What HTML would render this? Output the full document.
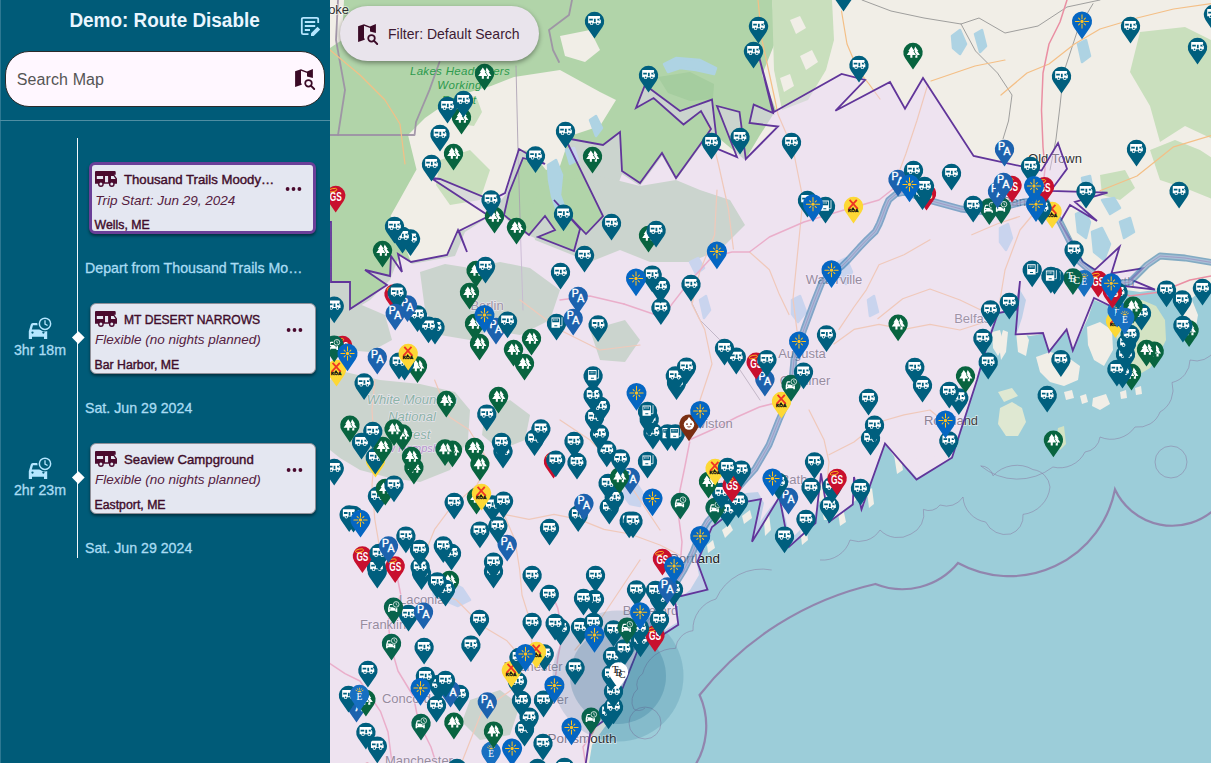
<!DOCTYPE html>
<html lang="en">
<head>
<meta charset="utf-8">
<title>Demo: Route Disable</title>
<style>
html,body{margin:0;padding:0;}
body{width:1211px;height:763px;overflow:hidden;position:relative;background:#005b78;font-family:"Liberation Sans",sans-serif;}
#side{position:absolute;left:0;top:0;width:330px;height:763px;background:#005b78;overflow:hidden;}
#side .edge{position:absolute;left:0;top:0;width:1px;height:763px;background:#2d7892;}
#title{position:absolute;left:0;top:8.3px;width:330px;text-align:center;color:#eaf6ff;font-weight:bold;font-size:20px;line-height:24px;white-space:nowrap;}
#title span{display:inline-block;transform:scaleX(0.946);transform-origin:50% 50%;}
#search{position:absolute;left:5px;top:51px;width:318px;height:53.5px;border:1px solid #2b2b2b;border-radius:24px;background:#fff7ff;}
#search .ph{position:absolute;left:10.8px;top:17.8px;font-size:16px;line-height:20px;color:#555;letter-spacing:0.1px;}
#divider{position:absolute;left:0;top:119.5px;width:330px;height:1.5px;background:#4f8ea3;}
#tline{position:absolute;left:77px;top:138px;width:1.4px;height:420px;background:#f2f8fb;}
.card{position:absolute;left:89.5px;width:224px;height:69px;background:#e4e7f1;border:1px solid #8f8f98;border-radius:6px;box-shadow:0 2px 3px rgba(0,0,0,0.45);color:#3f0d2b;}
.card.sel{border:3px solid #6a3f98;width:220.3px;height:65.4px;margin-top:-0.2px;margin-left:-0.1px}
.card .t{position:absolute;left:33.5px;top:8.8px;font-size:13.2px;line-height:16px;-webkit-text-stroke:0.4px #3f0d2b;white-space:nowrap;}
.card .s{position:absolute;left:4.5px;top:28.8px;font-size:13.5px;line-height:16px;font-style:italic;white-space:nowrap;color:#54203f;}
.card .c{position:absolute;left:4px;top:54px;font-size:12.3px;line-height:14px;white-space:nowrap;-webkit-text-stroke:0.4px #3f0d2b;}
.card.sel .t{left:31.5px;top:6.2px}.card.sel .s{left:2.8px;top:27.3px}.card.sel .c{left:2.2px;top:52.4px}
.card .dots{position:absolute;right:12px;top:23px;width:17px;height:6px;}
.card.sel .dots{right:10.5px;top:21px}
.card svg.rv{position:absolute;left:4.5px;top:7.5px;}
.card.sel svg.rv{left:2.7px;top:5.5px;}
.lbl{position:absolute;left:85px;font-size:14.2px;line-height:18px;color:#a9dcf3;white-space:nowrap;-webkit-text-stroke:0.3px #a9dcf3;}
.dur{position:absolute;left:0;width:80px;text-align:center;font-size:14.2px;line-height:18px;color:#a9dcf3;white-space:nowrap;-webkit-text-stroke:0.3px #a9dcf3;}
.dia{position:absolute;left:73.5px;width:8.6px;height:8.6px;background:#fff;transform:rotate(45deg);}
svg.cc{position:absolute;left:27px;}
#map{position:absolute;left:330px;top:0;width:881px;height:763px;overflow:hidden;background:#f1eee7;}
#chip{position:absolute;left:340px;top:6.2px;width:199.4px;height:55.3px;border-radius:27.6px;background:#e9e4ec;box-shadow:0 2px 5px rgba(0,0,0,0.4);}
#chip .tx{position:absolute;left:48px;top:18.6px;font-size:15px;line-height:18px;color:#3d1a33;white-space:nowrap;transform:scaleX(0.934);transform-origin:0 50%;}
</style>
</head>
<body>
<div id="map">
<svg width="881" height="763" viewBox="0 0 881 763" style="position:absolute;left:0;top:0">
<rect x="0" y="0" width="881" height="763" fill="#f1eee7"/>
<polygon points="0.0,0.0 442.0,0.0 446.0,40.0 432.0,75.0 446.0,110.0 430.0,135.0 415.0,160.0 385.0,135.0 370.0,147.0 346.0,180.0 332.0,156.0 310.0,186.0 292.0,174.0 282.0,200.0 270.0,218.0 250.0,232.0 230.0,236.0 210.0,240.0 190.0,232.0 175.0,218.0 160.0,216.0 135.0,232.0 125.0,256.0 82.0,264.0 70.0,254.0 60.0,280.0 40.0,300.0 20.0,312.0 0.0,300.0" fill="#b1d4a9"/>
<polygon points="442.0,0.0 502.0,0.0 504.0,40.0 496.0,70.0 478.0,100.0 452.0,110.0 444.0,70.0" fill="#c9dfbd"/>
<polygon points="460.0,20.0 470.0,16.0 476.0,28.0 466.0,34.0" fill="#f1eee7"/>
<polygon points="470.0,56.0 482.0,50.0 488.0,62.0 476.0,70.0" fill="#f1eee7"/>
<polygon points="450.0,78.0 460.0,74.0 464.0,86.0 454.0,92.0" fill="#f1eee7"/>
<polygon points="800.0,72.0 810.0,32.0 855.0,27.0 885.0,42.0 885.0,140.0 855.0,126.0 830.0,142.0 820.0,106.0" fill="#c9dfbd"/>
<polygon points="820.0,150.0 845.0,140.0 870.0,150.0 885.0,160.0 885.0,200.0 860.0,190.0 830.0,180.0" fill="#c9dfbd"/>
<polygon points="770.0,175.0 795.0,170.0 805.0,188.0 790.0,200.0 772.0,195.0" fill="#c9dfbd"/>
<polygon points="78.0,135.0 95.0,118.0 118.0,102.0 140.0,92.0 161.0,86.0 184.0,77.0 230.0,70.0 270.0,92.0 286.0,100.0 270.0,126.0 240.0,136.0 230.0,166.0 216.0,170.0 201.0,151.0 189.0,150.0 176.0,194.0 160.0,214.0 135.0,230.0 128.0,230.0 117.0,255.0 81.0,262.0 72.0,239.0 60.5,216.0 72.0,195.5 86.5,169.6" fill="#f1eee7"/>
<polygon points="127.0,100.0 146.0,96.0 152.0,112.0 144.0,126.0 130.0,124.0" fill="#c9dfbd"/>
<polygon points="0.0,0.0 14.0,0.0 12.0,40.0 0.0,48.0" fill="#f1eee7"/>
<polygon points="110.0,160.0 140.0,150.0 160.0,170.0 150.0,200.0 120.0,205.0 106.0,185.0" fill="#c9dfbd"/>
<polygon points="328.0,77.0 360.0,72.0 384.0,84.0 383.0,99.0 360.0,101.0 338.0,93.0" fill="#a5cd9f"/>
<polygon points="230.0,36.0 260.0,30.0 270.0,50.0 255.0,62.0 235.0,56.0" fill="#f1eee7"/>
<polygon points="215.0,182.0 270.0,176.0 310.0,186.0 346.0,180.0 370.0,190.0 400.0,200.0 415.0,225.0 390.0,250.0 360.0,262.0 320.0,262.0 290.0,250.0 260.0,262.0 230.0,250.0 205.0,240.0 200.0,210.0" fill="#b1d4a9"/>
<polygon points="0.0,380.0 15.0,372.0 50.0,380.0 90.0,384.0 125.0,392.0 140.0,410.0 138.0,440.0 120.0,470.0 90.0,482.0 60.0,478.0 30.0,470.0 10.0,458.0 0.0,450.0" fill="#b1d4a9"/>
<polygon points="0.0,305.0 20.0,300.0 55.0,315.0 62.0,340.0 40.0,352.0 15.0,350.0 0.0,345.0" fill="#b1d4a9"/>
<polygon points="90.0,272.0 115.0,264.0 140.0,268.0 170.0,262.0 200.0,268.0 230.0,290.0 220.0,320.0 190.0,335.0 160.0,330.0 140.0,340.0 110.0,335.0 95.0,310.0" fill="#b1d4a9"/>
<polygon points="260.0,330.0 295.0,320.0 310.0,340.0 295.0,362.0 270.0,360.0" fill="#b1d4a9"/>
<polygon points="155.0,410.0 180.0,400.0 200.0,415.0 195.0,440.0 170.0,450.0 152.0,435.0" fill="#b1d4a9"/>
<polygon points="140.0,700.0 170.0,690.0 190.0,705.0 180.0,735.0 150.0,740.0 132.0,722.0" fill="#b1d4a9"/>
<polygon points="746.0,214.0 754.0,210.0 760.0,222.0 756.0,238.0 748.0,232.0" fill="#aed3e3" stroke="#aed3e3" stroke-width="2.5" stroke-linejoin="round"/>
<polygon points="762.0,232.0 772.0,228.0 780.0,244.0 774.0,260.0 764.0,252.0" fill="#aed3e3" stroke="#aed3e3" stroke-width="2.5" stroke-linejoin="round"/>
<polygon points="772.0,200.0 784.0,198.0 790.0,208.0 780.0,214.0" fill="#aed3e3" stroke="#aed3e3" stroke-width="2.5" stroke-linejoin="round"/>
<polygon points="790.0,222.0 800.0,218.0 804.0,232.0 794.0,238.0" fill="#aed3e3" stroke="#aed3e3" stroke-width="2.5" stroke-linejoin="round"/>
<polygon points="752.0,178.0 760.0,176.0 762.0,186.0 754.0,188.0" fill="#aed3e3" stroke="#aed3e3" stroke-width="2.5" stroke-linejoin="round"/>
<polygon points="645.0,34.0 652.0,30.0 656.0,46.0 650.0,52.0" fill="#aed3e3" stroke="#aed3e3" stroke-width="2.5" stroke-linejoin="round"/>
<polygon points="260.0,120.0 266.0,116.0 272.0,128.0 266.0,136.0" fill="#aed3e3" stroke="#aed3e3" stroke-width="2.5" stroke-linejoin="round"/>
<polygon points="360.0,262.0 368.0,258.0 374.0,268.0 366.0,274.0" fill="#aed3e3" stroke="#aed3e3" stroke-width="2.5" stroke-linejoin="round"/>
<polygon points="538.0,300.0 544.0,296.0 548.0,312.0 540.0,316.0" fill="#aed3e3" stroke="#aed3e3" stroke-width="2.5" stroke-linejoin="round"/>
<polygon points="370.0,300.0 376.0,296.0 380.0,310.0 374.0,318.0" fill="#aed3e3" stroke="#aed3e3" stroke-width="2.5" stroke-linejoin="round"/>
<polygon points="334.0,64.0 346.0,58.0 370.0,60.0 386.0,68.0 384.0,74.0 366.0,70.0 350.0,68.0 338.0,72.0" fill="#aed3e3" stroke="#aed3e3" stroke-width="2.5" stroke-linejoin="round"/>
<polygon points="218.0,165.0 226.0,160.0 232.0,175.0 230.0,195.0 236.0,212.0 228.0,214.0 222.0,196.0 219.0,180.0" fill="#aed3e3" stroke="#aed3e3" stroke-width="2.5" stroke-linejoin="round"/>
<polygon points="236.0,150.0 244.0,148.0 248.0,160.0 240.0,164.0" fill="#aed3e3" stroke="#aed3e3" stroke-width="2.5" stroke-linejoin="round"/>
<polygon points="102.0,585.0 116.0,580.0 132.0,588.0 140.0,600.0 128.0,606.0 114.0,600.0 104.0,596.0" fill="#aed3e3" stroke="#aed3e3" stroke-width="2.5" stroke-linejoin="round"/>
<polygon points="294.0,484.0 304.0,480.0 312.0,492.0 310.0,506.0 300.0,504.0 294.0,496.0" fill="#aed3e3" stroke="#aed3e3" stroke-width="2.5" stroke-linejoin="round"/>
<polygon points="670.0,228.0 678.0,224.0 682.0,238.0 676.0,250.0 670.0,242.0" fill="#aed3e3" stroke="#aed3e3" stroke-width="2.5" stroke-linejoin="round"/>
<polygon points="622.0,36.0 630.0,30.0 636.0,44.0 630.0,54.0 623.0,48.0" fill="#aed3e3" stroke="#aed3e3" stroke-width="2.5" stroke-linejoin="round"/>
<polygon points="748.0,44.0 756.0,40.0 760.0,56.0 752.0,62.0" fill="#aed3e3" stroke="#aed3e3" stroke-width="2.5" stroke-linejoin="round"/>
<polygon points="508.0,262.0 516.0,258.0 522.0,272.0 516.0,284.0 509.0,278.0" fill="#aed3e3" stroke="#aed3e3" stroke-width="2.5" stroke-linejoin="round"/>
<polygon points="462.0,300.0 470.0,296.0 476.0,312.0 468.0,322.0 462.0,314.0" fill="#aed3e3" stroke="#aed3e3" stroke-width="2.5" stroke-linejoin="round"/>
<polygon points="258.0,770.0 262.0,745.0 274.0,728.0 288.0,712.0 292.0,690.0 300.0,665.0 310.0,650.0 330.0,633.0 348.0,622.0 347.0,600.0 360.0,590.0 369.0,575.0 366.0,560.0 367.0,545.0 373.0,530.0 386.0,514.0 402.0,501.0 416.0,493.0 428.0,492.0 434.0,503.0 430.0,522.0 440.0,508.0 449.0,497.0 456.0,520.0 460.0,540.0 470.0,530.0 482.0,522.0 490.0,500.0 494.0,520.0 500.0,520.0 518.0,507.0 526.0,500.0 528.0,485.0 534.0,505.0 542.0,480.0 550.0,455.0 556.0,444.0 563.0,455.0 570.0,462.0 580.0,470.0 587.0,478.0 600.0,470.0 615.0,462.0 622.0,456.0 628.0,435.0 635.0,415.0 642.0,395.0 647.0,380.0 651.0,360.0 656.0,343.0 662.0,325.0 668.0,314.0 678.0,310.0 685.0,300.0 690.0,290.0 696.0,300.0 692.0,318.0 687.0,333.0 700.0,336.0 713.0,334.0 719.0,350.0 728.0,340.0 736.0,331.0 743.0,349.0 750.0,335.0 758.0,318.0 764.0,300.0 774.0,304.0 782.0,306.0 788.0,296.0 796.0,290.0 810.0,292.0 825.0,290.0 838.0,297.0 850.0,304.0 862.0,298.0 870.0,292.0 885.0,288.0 885.0,770.0" fill="#9ccdd9"/>
<polygon points="788.0,312.0 798.0,302.0 812.0,300.0 826.0,306.0 835.0,320.0 836.0,340.0 828.0,356.0 820.0,368.0 810.0,374.0 800.0,378.0 792.0,370.0 790.0,352.0 786.0,335.0" fill="#d3e3c3"/>
<polygon points="850.0,304.0 862.0,300.0 868.0,315.0 864.0,338.0 856.0,330.0 853.0,315.0" fill="#f1eee7"/>
<polygon points="706.0,357.0 720.0,352.0 736.0,356.0 750.0,366.0 748.0,380.0 734.0,386.0 720.0,382.0 710.0,372.0" fill="#f1eee7"/>
<polygon points="686.0,332.0 694.0,330.0 699.0,340.0 696.0,356.0 688.0,352.0" fill="#f1eee7"/>
<polygon points="757.0,327.0 770.0,322.0 782.0,330.0 783.0,350.0 774.0,366.0 764.0,360.0 758.0,345.0" fill="#f1eee7"/>
<polygon points="662.0,332.0 670.0,330.0 674.0,345.0 668.0,356.0 663.0,348.0" fill="#f1eee7"/>
<polygon points="734.0,392.0 742.0,390.0 744.0,398.0 736.0,400.0" fill="#f1eee7"/>
<polygon points="790.0,392.0 796.0,390.0 797.0,398.0 791.0,399.0" fill="#f1eee7"/>
<polygon points="673.0,330.0 678.0,332.0 676.0,352.0 671.0,360.0 669.0,345.0" fill="#f1eee7"/>
<polygon points="670.0,408.0 682.0,402.0 692.0,408.0 696.0,422.0 688.0,436.0 676.0,436.0 668.0,424.0" fill="#dfe8d2"/>
<polygon points="668.0,392.0 682.0,388.0 688.0,396.0 674.0,402.0" fill="#dfe8d2"/>
<polygon points="728.0,428.0 734.0,426.0 736.0,444.0 730.0,450.0 726.0,440.0" fill="#d3e3c3"/>
<polygon points="763.0,398.0 776.0,394.0 780.0,404.0 770.0,410.0 762.0,406.0" fill="#f1eee7"/>
<polygon points="750.0,396.0 756.0,394.0 758.0,402.0 752.0,404.0" fill="#f1eee7"/>
<polygon points="563.0,448.0 570.0,452.0 573.0,470.0 567.0,474.0" fill="#f1eee7"/>
<polygon points="580.0,452.0 586.0,455.0 589.0,470.0 583.0,472.0" fill="#f1eee7"/>
<polygon points="596.0,446.0 604.0,450.0 606.0,468.0 599.0,466.0" fill="#f1eee7"/>
<polygon points="537.0,492.0 542.0,488.0 544.0,504.0 539.0,508.0" fill="#f1eee7"/>
<polygon points="508.0,512.0 513.0,508.0 516.0,522.0 510.0,526.0" fill="#f1eee7"/>
<polygon points="470.0,528.0 476.0,524.0 478.0,540.0 472.0,545.0" fill="#f1eee7"/>
<polygon points="434.0,520.0 439.0,514.0 441.0,530.0 435.0,536.0" fill="#f1eee7"/>
<polygon points="412.0,516.0 420.0,510.0 422.0,518.0 414.0,524.0" fill="#f1eee7"/>
<polygon points="392.0,530.0 400.0,524.0 403.0,530.0 395.0,538.0" fill="#f1eee7"/>
<polygon points="377.0,545.0 383.0,540.0 385.0,548.0 378.0,553.0" fill="#f1eee7"/>
<polygon points="805.0,388.0 811.0,386.0 812.0,394.0 806.0,395.0" fill="#f1eee7"/>
<path d="M362.0,770.0A75.4,75.4 0 0 0 369.6,695.0A311.9,311.9 0 0 1 545.4,584.0A72.4,72.4 0 0 0 628.0,563.0A107.5,107.5 0 0 0 785.0,489.5A63.2,63.2 0 0 0 885.0,509.0" fill="none" stroke="#8f78a6" stroke-width="2.2" stroke-opacity="0.85"/>
<path d="M441.7,570.0A50.2,50.2 0 0 0 386.0,599.0A31.3,31.3 0 0 0 363.0,630.7A19.9,19.9 0 0 0 345.5,648.4A33.2,33.2 0 0 0 312.6,673.7A12.9,12.9 0 0 0 307.6,689.0A16.3,16.3 0 0 0 303.8,709.0A9.0,9.0 0 0 0 315.0,708.0" fill="none" stroke="#8a7fa6" stroke-width="0.8" stroke-opacity="0.7"/>
<path d="M650.7,465.9A57.8,57.8 0 0 0 722.9,467.0A28.3,28.3 0 0 0 755.0,452.0A17.0,17.0 0 0 0 770.0,437.0A29.1,29.1 0 0 0 805.0,427.0A23.3,23.3 0 0 0 830.0,412.0A25.5,25.5 0 0 0 842.0,382.5A23.1,23.1 0 0 0 860.0,360.0A21.5,21.5 0 0 0 885.0,350.0" fill="none" stroke="#8a7fa6" stroke-width="0.8" stroke-opacity="0.7"/>
<path d="M581.0,534.0A22.0,22.0 0 0 0 593.4,509.4A13.7,13.7 0 0 0 610.0,505.0A19.5,19.5 0 0 0 633.0,497.0A27.0,27.0 0 0 0 655.7,522.0A22.1,22.1 0 0 0 680.6,534.0A18.6,18.6 0 0 0 693.0,514.4A30.8,30.8 0 0 0 720.0,487.0A19.5,19.5 0 0 0 703.0,469.6A32.4,32.4 0 0 0 663.0,475.8A12.6,12.6 0 0 0 650.7,465.9" fill="none" stroke="#8a7fa6" stroke-width="0.8" stroke-opacity="0.7"/>
<path d="M490.0,560.0A28.8,28.8 0 0 0 520.0,540.0A25.3,25.3 0 0 0 550.0,530.0A25.0,25.0 0 0 0 581.0,534.0" fill="none" stroke="#8a7fa6" stroke-width="0.8" stroke-opacity="0.7"/>
<circle cx="315" cy="723" r="16" fill="none" stroke="#8a7fa6" stroke-width="0.8" stroke-opacity="0.7"/>
<circle cx="841" cy="462" r="16" fill="none" stroke="#8a7fa6" stroke-width="0.8" stroke-opacity="0.7"/>
<polyline points="0.0,135.0 84.6,135.0 86.0,122.0 99.6,89.6 109.5,62.0" fill="none" stroke="#9c8fa4" stroke-width="1.8" stroke-opacity="0.9" stroke-linejoin="round" stroke-linecap="round" />
<polyline points="242.0,0.0 239.0,15.0 219.0,30.0 223.0,50.0 229.0,62.0" fill="none" stroke="#9c8fa4" stroke-width="1.8" stroke-opacity="0.9" stroke-linejoin="round" stroke-linecap="round" />
<polyline points="8.0,0.0 6.0,40.0 15.0,90.0 8.0,135.0" fill="none" stroke="#9c8fa4" stroke-width="1.8" stroke-opacity="0.9" stroke-linejoin="round" stroke-linecap="round" />
<polyline points="186.0,66.0 188.0,150.0 191.0,250.0 193.0,310.0" fill="none" stroke="#a79bb0" stroke-width="0.9" stroke-opacity="0.9" stroke-linejoin="round" stroke-linecap="round" />
<polyline points="532.0,0.0 561.0,11.0 594.0,18.0 631.0,24.0 649.0,18.0 675.0,33.0 708.0,26.0 737.0,7.0 770.0,0.0" fill="none" stroke="#8c8c8c" stroke-width="0.9" stroke-opacity="0.9" stroke-linejoin="round" stroke-linecap="round" />
<polyline points="631.0,24.0 645.5,51.0 667.5,73.0 682.0,95.0 678.5,121.0 673.0,139.0" fill="none" stroke="#8c8c8c" stroke-width="0.9" stroke-opacity="0.9" stroke-linejoin="round" stroke-linecap="round" />
<polyline points="763.0,3.7 748.0,29.0 733.5,73.0 730.0,106.0 726.0,139.0 720.0,170.0" fill="none" stroke="#8c8c8c" stroke-width="0.9" stroke-opacity="0.9" stroke-linejoin="round" stroke-linecap="round" />
<polyline points="360.5,300.0 370.0,320.0 390.0,340.0 410.0,370.0 430.0,400.0" fill="none" stroke="#8c8c8c" stroke-width="0.9" stroke-opacity="0.9" stroke-linejoin="round" stroke-linecap="round" />
<polyline points="511.5,11.0 517.0,44.0 528.0,70.0 539.0,84.0 550.0,99.0" fill="none" stroke="#f4bf86" stroke-width="1.2" stroke-opacity="1" stroke-linejoin="round" stroke-linecap="round" />
<polyline points="601.0,81.0 645.0,66.0 675.0,60.0" fill="none" stroke="#f4bf86" stroke-width="1.2" stroke-opacity="1" stroke-linejoin="round" stroke-linecap="round" />
<polyline points="671.0,95.0 697.0,73.0 719.0,64.0 744.5,44.0 770.0,29.0 807.0,18.0 843.6,9.0 881.0,3.7" fill="none" stroke="#f4bf86" stroke-width="1.2" stroke-opacity="1" stroke-linejoin="round" stroke-linecap="round" />
<polyline points="597.8,84.4 586.8,121.0 575.8,154.0 564.7,183.5" fill="none" stroke="#f4bf86" stroke-width="1.2" stroke-opacity="1" stroke-linejoin="round" stroke-linecap="round" />
<polyline points="641.8,234.8 667.5,223.8 689.5,216.5" fill="none" stroke="#f4bf86" stroke-width="1.2" stroke-opacity="1" stroke-linejoin="round" stroke-linecap="round" />
<polyline points="881.0,135.7 843.6,146.8 807.0,176.0 770.0,190.8" fill="none" stroke="#f4bf86" stroke-width="1.2" stroke-opacity="1" stroke-linejoin="round" stroke-linecap="round" />
<polyline points="0.0,50.0 30.0,75.0 55.0,100.0 70.0,124.0 75.0,164.0" fill="none" stroke="#f4bf86" stroke-width="1.2" stroke-opacity="1" stroke-linejoin="round" stroke-linecap="round" />
<polyline points="378.5,124.5 388.4,164.0 398.4,209.0 403.4,249.0" fill="none" stroke="#f4bf86" stroke-width="1.2" stroke-opacity="1" stroke-linejoin="round" stroke-linecap="round" />
<polyline points="428.0,0.0 432.0,40.0 445.0,100.0 448.0,114.5 463.0,149.0 473.0,199.0 468.0,249.0 463.0,299.0 468.0,338.6" fill="none" stroke="#f4bf86" stroke-width="1.2" stroke-opacity="1" stroke-linejoin="round" stroke-linecap="round" />
<polyline points="547.8,318.7 572.7,298.8 600.0,289.0 630.0,300.0 655.0,312.0" fill="none" stroke="#f4bf86" stroke-width="1.2" stroke-opacity="1" stroke-linejoin="round" stroke-linecap="round" />
<polyline points="387.0,190.0 384.6,234.8 369.7,272.0 362.0,304.5 374.7,329.4 382.0,364.0 370.0,400.0 360.0,425.0" fill="none" stroke="#f4bf86" stroke-width="1.2" stroke-opacity="1" stroke-linejoin="round" stroke-linecap="round" />
<polyline points="419.5,252.0 439.4,269.7 449.4,294.6 459.0,314.5" fill="none" stroke="#f4bf86" stroke-width="1.2" stroke-opacity="1" stroke-linejoin="round" stroke-linecap="round" />
<polyline points="504.0,344.0 524.0,329.4 549.0,324.4 574.0,329.4 600.0,324.4 630.0,330.0 655.0,322.0" fill="none" stroke="#f4bf86" stroke-width="1.2" stroke-opacity="1" stroke-linejoin="round" stroke-linecap="round" />
<polyline points="600.0,239.8 574.0,254.7 549.0,264.7 536.5,289.6 524.0,307.0 509.0,329.4" fill="none" stroke="#f4bf86" stroke-width="1.2" stroke-opacity="1" stroke-linejoin="round" stroke-linecap="round" />
<polyline points="479.0,410.0 494.0,439.7 499.0,462.0 496.7,484.6" fill="none" stroke="#f4bf86" stroke-width="1.2" stroke-opacity="1" stroke-linejoin="round" stroke-linecap="round" />
<polyline points="499.0,454.7 524.0,442.0 549.0,422.0 574.0,414.9 600.0,410.0 618.0,425.0" fill="none" stroke="#f4bf86" stroke-width="1.2" stroke-opacity="1" stroke-linejoin="round" stroke-linecap="round" />
<polyline points="101.0,590.0 126.5,600.0 151.8,625.7 177.0,640.8 192.0,658.5" fill="none" stroke="#f4bf86" stroke-width="1.2" stroke-opacity="1" stroke-linejoin="round" stroke-linecap="round" />
<polyline points="131.5,763.0 141.7,737.0 151.8,711.7 172.0,696.5 187.0,686.0" fill="none" stroke="#f4bf86" stroke-width="1.2" stroke-opacity="1" stroke-linejoin="round" stroke-linecap="round" />
<polyline points="192.0,666.0 202.0,646.0 200.0,620.6 192.0,595.0 189.7,570.0 185.0,540.0 174.0,514.4" fill="none" stroke="#f4bf86" stroke-width="1.2" stroke-opacity="1" stroke-linejoin="round" stroke-linecap="round" />
<polyline points="104.6,380.0 119.5,417.0 139.0,429.8 159.0,462.0 147.0,484.6 119.5,509.4 104.6,529.4 94.6,554.0 101.0,590.0" fill="none" stroke="#f4bf86" stroke-width="1.2" stroke-opacity="1" stroke-linejoin="round" stroke-linecap="round" />
<polyline points="174.0,514.4 199.0,519.4 224.0,514.4 249.0,519.4 274.0,529.4 300.0,534.0 330.0,545.0 355.0,558.0" fill="none" stroke="#f4bf86" stroke-width="1.2" stroke-opacity="1" stroke-linejoin="round" stroke-linecap="round" />
<polyline points="44.8,380.0 42.0,410.0 44.8,454.7 42.0,484.6 44.8,519.4 49.8,549.0 65.8,570.0" fill="none" stroke="#f4bf86" stroke-width="1.2" stroke-opacity="1" stroke-linejoin="round" stroke-linecap="round" />
<polyline points="190.0,300.0 230.0,330.0 270.0,350.0 310.0,345.0" fill="none" stroke="#f4bf86" stroke-width="1.2" stroke-opacity="1" stroke-linejoin="round" stroke-linecap="round" />
<polyline points="310.0,560.0 290.0,590.0 270.0,620.0 245.0,650.0" fill="none" stroke="#f4bf86" stroke-width="1.2" stroke-opacity="1" stroke-linejoin="round" stroke-linecap="round" />
<polyline points="715.0,200.0 690.0,230.0 675.0,270.0 670.0,300.0" fill="none" stroke="#f4bf86" stroke-width="1.2" stroke-opacity="1" stroke-linejoin="round" stroke-linecap="round" />
<polyline points="230.0,420.0 260.0,440.0 290.0,470.0 310.0,500.0 330.0,530.0" fill="none" stroke="#f4bf86" stroke-width="1.2" stroke-opacity="1" stroke-linejoin="round" stroke-linecap="round" />
<polyline points="737.0,0.0 730.0,22.0 719.0,44.0 713.0,73.0 711.5,110.0 713.0,147.0 715.0,169.0 712.0,195.0" fill="none" stroke="#ea8fa3" stroke-width="1.5" stroke-opacity="1" stroke-linejoin="round" stroke-linecap="round" />
<polyline points="294.0,304.0 332.0,317.0 357.0,284.6 382.0,257.0 402.0,252.0 419.5,252.0 439.4,237.0 474.0,222.0 514.0,210.0 549.0,200.0 563.0,189.0" fill="none" stroke="#ea8fa3" stroke-width="1.5" stroke-opacity="1" stroke-linejoin="round" stroke-linecap="round" />
<polyline points="230.0,300.0 260.0,296.0 294.0,304.0" fill="none" stroke="#ea8fa3" stroke-width="1.5" stroke-opacity="1" stroke-linejoin="round" stroke-linecap="round" />
<polyline points="359.7,439.7 382.0,429.8 407.0,417.0 429.5,407.0 449.4,402.0" fill="none" stroke="#ea8fa3" stroke-width="1.5" stroke-opacity="1" stroke-linejoin="round" stroke-linecap="round" />
<polyline points="349.8,570.0 352.0,541.8 347.0,504.5 354.8,467.0 359.7,442.0" fill="none" stroke="#ea8fa3" stroke-width="1.5" stroke-opacity="1" stroke-linejoin="round" stroke-linecap="round" />
<polyline points="0.0,663.6 15.0,673.7 30.0,681.0 50.6,711.7 58.0,732.0 62.0,763.0" fill="none" stroke="#ea8fa3" stroke-width="1.5" stroke-opacity="1" stroke-linejoin="round" stroke-linecap="round" />
<polyline points="65.8,570.0 70.8,595.0 58.0,620.6 60.7,646.0 68.0,671.0 83.5,696.5 88.5,721.8 101.0,747.0 106.0,763.0" fill="none" stroke="#ea8fa3" stroke-width="1.5" stroke-opacity="1" stroke-linejoin="round" stroke-linecap="round" />
<polyline points="225.0,681.0 227.7,658.5 232.7,633.0 227.7,608.0 218.0,585.0" fill="none" stroke="#ea8fa3" stroke-width="1.5" stroke-opacity="1" stroke-linejoin="round" stroke-linecap="round" />
<polyline points="255.5,763.0 253.0,747.0 263.0,732.0 273.0,711.7 282.0,690.0 295.0,660.0 315.0,628.0 338.0,596.0 354.0,570.0" fill="none" stroke="#ea8fa3" stroke-width="1.5" stroke-opacity="1" stroke-linejoin="round" stroke-linecap="round" />
<polyline points="770.0,285.0 800.0,296.0 830.0,292.0 860.0,280.0 881.0,276.0" fill="none" stroke="#ea8fa3" stroke-width="1.5" stroke-opacity="1" stroke-linejoin="round" stroke-linecap="round" />
<text x="504" y="283.5" font-family="Liberation Sans,sans-serif" font-size="13" fill="#505050" text-anchor="middle" stroke="#fff" stroke-opacity="0.6" stroke-width="1.4" paint-order="stroke">Waterville</text>
<text x="472" y="358" font-family="Liberation Sans,sans-serif" font-size="13" fill="#505050" text-anchor="middle" stroke="#fff" stroke-opacity="0.6" stroke-width="1.4" paint-order="stroke">Augusta</text>
<text x="377" y="427.5" font-family="Liberation Sans,sans-serif" font-size="13" fill="#505050" text-anchor="middle" stroke="#fff" stroke-opacity="0.6" stroke-width="1.4" paint-order="stroke">Lewiston</text>
<text x="464" y="483.5" font-family="Liberation Sans,sans-serif" font-size="13" fill="#505050" text-anchor="middle" stroke="#fff" stroke-opacity="0.6" stroke-width="1.4" paint-order="stroke">Bath</text>
<text x="365" y="562.5" font-family="Liberation Sans,sans-serif" font-size="13.5" fill="#202020" text-anchor="middle" stroke="#fff" stroke-opacity="0.6" stroke-width="1.4" paint-order="stroke">Portland</text>
<text x="621" y="424.5" font-family="Liberation Sans,sans-serif" font-size="13" fill="#404040" text-anchor="middle" stroke="#fff" stroke-opacity="0.6" stroke-width="1.4" paint-order="stroke">Rockland</text>
<text x="644" y="323" font-family="Liberation Sans,sans-serif" font-size="13" fill="#606060" text-anchor="middle" stroke="#fff" stroke-opacity="0.6" stroke-width="1.4" paint-order="stroke">Belfast</text>
<text x="694" y="205.5" font-family="Liberation Sans,sans-serif" font-size="13.5" fill="#404040" text-anchor="middle" stroke="#fff" stroke-opacity="0.6" stroke-width="1.4" paint-order="stroke">Bangor</text>
<text x="725" y="163" font-family="Liberation Sans,sans-serif" font-size="13" fill="#303030" text-anchor="middle" stroke="#fff" stroke-opacity="0.6" stroke-width="1.4" paint-order="stroke">Old Town</text>
<text x="157" y="310" font-family="Liberation Sans,sans-serif" font-size="13" fill="#606060" text-anchor="middle" stroke="#fff" stroke-opacity="0.6" stroke-width="1.4" paint-order="stroke">Berlin</text>
<text x="91.69999999999999" y="603.5" font-family="Liberation Sans,sans-serif" font-size="13" fill="#505050" text-anchor="middle" stroke="#fff" stroke-opacity="0.6" stroke-width="1.4" paint-order="stroke">Laconia</text>
<text x="53" y="628.7" font-family="Liberation Sans,sans-serif" font-size="13" fill="#505050" text-anchor="middle" stroke="#fff" stroke-opacity="0.6" stroke-width="1.4" paint-order="stroke">Franklin</text>
<text x="76.5" y="702.8" font-family="Liberation Sans,sans-serif" font-size="13" fill="#505050" text-anchor="middle" stroke="#fff" stroke-opacity="0.6" stroke-width="1.4" paint-order="stroke">Concord</text>
<text x="203" y="671" font-family="Liberation Sans,sans-serif" font-size="13" fill="#505050" text-anchor="middle" stroke="#fff" stroke-opacity="0.6" stroke-width="1.4" paint-order="stroke">Rochester</text>
<text x="221" y="704" font-family="Liberation Sans,sans-serif" font-size="13" fill="#505050" text-anchor="middle" stroke="#fff" stroke-opacity="0.6" stroke-width="1.4" paint-order="stroke">Dover</text>
<text x="252" y="743.3" font-family="Liberation Sans,sans-serif" font-size="13.5" fill="#303030" text-anchor="middle" stroke="#fff" stroke-opacity="0.6" stroke-width="1.4" paint-order="stroke">Portsmouth</text>
<text x="320.5" y="614.5" font-family="Liberation Sans,sans-serif" font-size="13" fill="#505050" text-anchor="middle" stroke="#fff" stroke-opacity="0.6" stroke-width="1.4" paint-order="stroke">Biddeford</text>
<text x="89" y="764.5" font-family="Liberation Sans,sans-serif" font-size="13" fill="#505050" text-anchor="middle" stroke="#fff" stroke-opacity="0.6" stroke-width="1.4" paint-order="stroke">Manchester</text>
<text x="475" y="385" font-family="Liberation Sans,sans-serif" font-size="13" fill="#505050" text-anchor="middle" stroke="#fff" stroke-opacity="0.6" stroke-width="1.4" paint-order="stroke">Gardiner</text>
<text x="778" y="285.8" font-family="Liberation Sans,sans-serif" font-size="13" fill="#505050" text-anchor="middle" stroke="#fff" stroke-opacity="0.6" stroke-width="1.4" paint-order="stroke">Ellsworth</text>
<text x="-14.5" y="13.7" font-family="Liberation Sans,sans-serif" font-size="13" fill="#303030" text-anchor="middle" stroke="#fff" stroke-opacity="0.6" stroke-width="1.4" paint-order="stroke">Sherbrooke</text>
<text x="82" y="403.6" font-family="Liberation Sans,sans-serif" font-size="13" fill="#3c9862" text-anchor="middle" stroke="#fff" stroke-opacity="0.6" stroke-width="1.4" paint-order="stroke" font-style="italic">White Mountain</text>
<text x="82" y="421" font-family="Liberation Sans,sans-serif" font-size="13" fill="#3c9862" text-anchor="middle" stroke="#fff" stroke-opacity="0.6" stroke-width="1.4" paint-order="stroke" font-style="italic">National</text>
<text x="82" y="438.5" font-family="Liberation Sans,sans-serif" font-size="13" fill="#3c9862" text-anchor="middle" stroke="#fff" stroke-opacity="0.6" stroke-width="1.4" paint-order="stroke" font-style="italic">Forest</text>
<text x="82" y="451.7" font-family="Liberation Sans,sans-serif" font-size="11" fill="#8a5fa6" text-anchor="middle" stroke="#fff" stroke-opacity="0.6" stroke-width="1.4" paint-order="stroke" font-style="italic">New Hampshire</text>
<text x="130" y="74.7" font-family="Liberation Sans,sans-serif" font-size="11.5" fill="#2e9a4e" text-anchor="middle" font-style="italic" letter-spacing="0.3">Lakes Headwaters</text>
<text x="129.5" y="89" font-family="Liberation Sans,sans-serif" font-size="11.5" fill="#2e9a4e" text-anchor="middle" font-style="italic" letter-spacing="0.3">Working</text>
<text x="129" y="103.5" font-family="Liberation Sans,sans-serif" font-size="11.5" fill="#2e9a4e" text-anchor="middle" font-style="italic" letter-spacing="0.3">Forest</text>
<polygon points="-10.0,222.0 1.0,222.0 1.0,282.0 20.0,282.0 20.0,309.0 57.0,285.0 35.0,270.0 60.0,276.0 61.0,256.0 72.0,272.0 68.0,254.0 81.0,262.0 117.0,255.0 128.0,230.0 137.0,252.0 129.0,231.0 159.0,216.0 101.0,178.0 110.0,179.0 161.0,200.0 175.0,193.0 189.0,149.0 215.0,164.0 193.0,158.0 179.0,193.0 174.0,215.0 199.0,235.0 215.0,216.0 225.0,230.0 208.0,237.0 244.0,251.0 250.0,229.0 224.0,200.0 256.0,234.0 273.0,216.0 235.0,138.0 273.0,145.0 290.0,132.0 292.0,171.0 310.0,183.0 332.0,153.0 346.0,178.0 372.0,142.0 381.0,129.0 371.0,111.0 353.5,124.5 323.6,98.0 306.0,108.0 315.0,85.0 350.0,111.0 382.0,99.6 386.0,134.0 388.0,149.0 407.0,157.0 387.0,106.0 409.5,112.0 415.8,159.0 448.0,126.5 419.5,123.0 423.7,104.6 443.0,113.0 429.5,58.5 444.0,112.0 511.6,74.0 535.0,80.0 505.4,110.8 560.0,82.0 575.0,108.8 593.0,78.0 643.6,156.0 711.5,170.6 728.0,143.0 737.0,168.8 720.7,190.8 777.5,192.6 745.0,202.0 767.0,221.0 740.0,205.0 730.0,222.0 752.8,262.0 765.0,269.7 789.6,246.8 781.4,273.4 812.5,268.4 801.0,279.6 825.0,289.6 792.6,285.8 782.6,307.0 764.0,298.0 742.8,350.6 736.6,329.4 719.0,351.8 713.0,333.0 685.6,334.4 690.0,281.0 686.8,309.5 668.0,313.0 658.0,342.0 647.0,380.0 622.0,457.7 586.5,479.6 555.0,443.5 531.5,509.4 524.0,477.0 522.8,504.5 499.0,522.0 491.0,473.4 485.5,523.0 459.0,546.8 449.4,497.0 422.0,541.8 431.0,499.0 414.5,502.0 382.0,527.0 367.3,562.0 377.5,589.7 346.9,597.0 345.4,602.8 348.3,624.7 307.4,651.0 282.0,715.0 260.7,730.0 254.8,770.0 -10.0,770.0" fill="#ebd4fa" fill-opacity="0.45" stroke="#61359a" stroke-width="1.8" stroke-linejoin="miter"/>
<polyline points="288.0,676.0 292.0,664.0 302.0,648.0 318.0,625.0 338.0,596.0 354.0,570.0 363.0,552.0 369.0,536.0 378.0,521.0 400.0,497.0 415.0,480.0 425.0,469.0 439.0,445.0 449.0,420.0 459.0,397.0 462.0,380.0 464.0,359.0 474.0,329.0 484.0,302.0 492.0,282.0 512.0,266.0 518.3,259.8 529.7,247.2 537.2,239.4 545.4,231.5 549.4,223.6 552.5,215.7 555.3,207.9 558.8,200.0 566.0,194.0 575.0,192.0 598.0,200.0 631.0,209.0 656.0,212.0 693.0,202.0 715.0,200.0" fill="none" stroke="#14679f" stroke-width="6.8" stroke-opacity="0.5" stroke-linejoin="round" stroke-linecap="round" />
<polyline points="288.0,676.0 292.0,664.0 302.0,648.0 318.0,625.0 338.0,596.0 354.0,570.0 363.0,552.0 369.0,536.0 378.0,521.0 400.0,497.0 415.0,480.0 425.0,469.0 439.0,445.0 449.0,420.0 459.0,397.0 462.0,380.0 464.0,359.0 474.0,329.0 484.0,302.0 492.0,282.0 512.0,266.0 518.3,259.8 529.7,247.2 537.2,239.4 545.4,231.5 549.4,223.6 552.5,215.7 555.3,207.9 558.8,200.0 566.0,194.0 575.0,192.0 598.0,200.0 631.0,209.0 656.0,212.0 693.0,202.0 715.0,200.0" fill="none" stroke="#e8e0f5" stroke-width="3.4" stroke-opacity="0.38" stroke-linejoin="round" stroke-linecap="round" />
<polyline points="288.0,676.0 292.0,664.0 302.0,648.0 318.0,625.0 338.0,596.0 354.0,570.0 363.0,552.0 369.0,536.0 378.0,521.0 400.0,497.0 415.0,480.0 425.0,469.0 439.0,445.0 449.0,420.0 459.0,397.0 462.0,380.0 464.0,359.0 474.0,329.0 484.0,302.0 492.0,282.0 512.0,266.0 518.3,259.8 529.7,247.2 537.2,239.4 545.4,231.5 549.4,223.6 552.5,215.7 555.3,207.9 558.8,200.0 566.0,194.0 575.0,192.0 598.0,200.0 631.0,209.0 656.0,212.0 693.0,202.0 715.0,200.0" fill="none" stroke="#9a7fb5" stroke-width="0.9" stroke-opacity="0.6" stroke-linejoin="round" stroke-linecap="round" />
<polyline points="715.0,200.0 730.0,222.0 740.0,242.0 750.0,262.0 765.0,275.0 780.0,285.0 800.0,282.0 817.0,265.0 830.0,256.0 855.0,258.0 885.0,263.0" fill="none" stroke="#14679f" stroke-width="6.8" stroke-opacity="0.5" stroke-linejoin="round" stroke-linecap="round" />
<polyline points="715.0,200.0 730.0,222.0 740.0,242.0 750.0,262.0 765.0,275.0 780.0,285.0 800.0,282.0 817.0,265.0 830.0,256.0 855.0,258.0 885.0,263.0" fill="none" stroke="#e8e0f5" stroke-width="3.4" stroke-opacity="0.38" stroke-linejoin="round" stroke-linecap="round" />
<polyline points="715.0,200.0 730.0,222.0 740.0,242.0 750.0,262.0 765.0,275.0 780.0,285.0 800.0,282.0 817.0,265.0 830.0,256.0 855.0,258.0 885.0,263.0" fill="none" stroke="#9a7fb5" stroke-width="0.9" stroke-opacity="0.6" stroke-linejoin="round" stroke-linecap="round" />
<circle cx="288" cy="676" r="65.5" fill="#0a5a80" fill-opacity="0.15"/>
<circle cx="288" cy="676" r="48" fill="#0a5a80" fill-opacity="0.2"/>
<g transform="translate(119.5,580.5)"><path fill="#08643f" d="M0,17.1L-7.97,5.54A9.7,9.7 0 1 1 7.97,5.54Z"/><path fill="#fff" d="M2.2,-6.1L5.3,-1.6H4.2L6.9,2.4H4.4V5.3H2.3V2.4H-1L1.6,-1.6H0.5Z"/><path fill="#fff" stroke="#08643f" stroke-width="1.1" stroke-linejoin="round" paint-order="stroke" d="M-1.7,-6.1L1.4,-1.6H0.3L3,2.4H-0.6V5.3H-2.7V2.4H-6.3L-3.6,-1.6H-4.7Z"/></g>
<g transform="translate(37.2,772.5)"><path fill="#c8102e" d="M0,17.1L-7.97,5.54A9.7,9.7 0 1 1 7.97,5.54Z"/><text x="0" y="5.2" font-family="Liberation Sans,sans-serif" font-size="12.6" font-weight="bold" fill="#fff" text-anchor="middle" textLength="12" lengthAdjust="spacingAndGlyphs">GS</text><ellipse cx="-2.9" cy="-5.3" rx="4.2" ry="1.6" transform="rotate(-12 -2.9 -5.3)" stroke="#ffc61a" stroke-width="0.8" fill="none"/></g>
<g transform="translate(127.0,768.5)"><path fill="#005f7e" d="M0,17.1L-7.97,5.54A9.7,9.7 0 1 1 7.97,5.54Z"/><g transform="translate(-6.32,-5.60) scale(0.575)"><path fill="#fff" fill-rule="evenodd" d="M1,0H19.6Q20.7,0 20.7,1V3.7H19.2L22,7.6V12.7H0V1Q0,0 1,0ZM1.8,4.9V8H8.1V4.9Z M10,4.9V11.2H13.1V4.9Z M16,4.9V8H20.6L18.6,4.9Z"/><path fill="#fff" d="M3.00,13.00a2.9,2.9 0 1,0 5.8,0a2.9,2.9 0 1,0 -5.8,0zM13.90,13.00a2.9,2.9 0 1,0 5.8,0a2.9,2.9 0 1,0 -5.8,0z"/><path fill="#005f7e" d="M4.40,13.00a1.5,1.5 0 1,0 3.0,0a1.5,1.5 0 1,0 -3.0,0zM15.30,13.00a1.5,1.5 0 1,0 3.0,0a1.5,1.5 0 1,0 -3.0,0z"/></g></g>
<g transform="translate(207.5,768.5)"><path fill="#005f7e" d="M0,17.1L-7.97,5.54A9.7,9.7 0 1 1 7.97,5.54Z"/><g transform="translate(-6.32,-5.60) scale(0.575)"><path fill="#fff" fill-rule="evenodd" d="M1,0H19.6Q20.7,0 20.7,1V3.7H19.2L22,7.6V12.7H0V1Q0,0 1,0ZM1.8,4.9V8H8.1V4.9Z M10,4.9V11.2H13.1V4.9Z M16,4.9V8H20.6L18.6,4.9Z"/><path fill="#fff" d="M3.00,13.00a2.9,2.9 0 1,0 5.8,0a2.9,2.9 0 1,0 -5.8,0zM13.90,13.00a2.9,2.9 0 1,0 5.8,0a2.9,2.9 0 1,0 -5.8,0z"/><path fill="#005f7e" d="M4.40,13.00a1.5,1.5 0 1,0 3.0,0a1.5,1.5 0 1,0 -3.0,0zM15.30,13.00a1.5,1.5 0 1,0 3.0,0a1.5,1.5 0 1,0 -3.0,0z"/></g></g>
<g transform="translate(234.5,767.5)"><path fill="#005f7e" d="M0,17.1L-7.97,5.54A9.7,9.7 0 1 1 7.97,5.54Z"/><g transform="translate(-6.32,-5.60) scale(0.575)"><path fill="#fff" fill-rule="evenodd" d="M1,0H19.6Q20.7,0 20.7,1V3.7H19.2L22,7.6V12.7H0V1Q0,0 1,0ZM1.8,4.9V8H8.1V4.9Z M10,4.9V11.2H13.1V4.9Z M16,4.9V8H20.6L18.6,4.9Z"/><path fill="#fff" d="M3.00,13.00a2.9,2.9 0 1,0 5.8,0a2.9,2.9 0 1,0 -5.8,0zM13.90,13.00a2.9,2.9 0 1,0 5.8,0a2.9,2.9 0 1,0 -5.8,0z"/><path fill="#005f7e" d="M4.40,13.00a1.5,1.5 0 1,0 3.0,0a1.5,1.5 0 1,0 -3.0,0zM15.30,13.00a1.5,1.5 0 1,0 3.0,0a1.5,1.5 0 1,0 -3.0,0z"/></g></g>
<g transform="translate(161.1,751.5)"><path fill="#176fc1" d="M0,17.1L-7.97,5.54A9.7,9.7 0 1 1 7.97,5.54Z"/><path d="M-1.9,-2.2A1.9,1.9 0 0 1 1.9,-2.2Z" fill="#f5c542"/><path d="M-2.25,-3.50L-3.98,-4.50M-1.30,-4.45L-2.30,-6.18M0.00,-4.80L0.00,-6.80M1.30,-4.45L2.30,-6.18M2.25,-3.50L3.98,-4.50" stroke="#f5c542" stroke-width="0.8" fill="none"/><text x="0" y="5.6" font-family="Liberation Serif,serif" font-size="9.5" fill="#fff" text-anchor="middle">E</text></g>
<g transform="translate(47.3,746.3)"><path fill="#005f7e" d="M0,17.1L-7.97,5.54A9.7,9.7 0 1 1 7.97,5.54Z"/><g transform="translate(-6.32,-5.60) scale(0.575)"><path fill="#fff" fill-rule="evenodd" d="M1,0H19.6Q20.7,0 20.7,1V3.7H19.2L22,7.6V12.7H0V1Q0,0 1,0ZM1.8,4.9V8H8.1V4.9Z M10,4.9V11.2H13.1V4.9Z M16,4.9V8H20.6L18.6,4.9Z"/><path fill="#fff" d="M3.00,13.00a2.9,2.9 0 1,0 5.8,0a2.9,2.9 0 1,0 -5.8,0zM13.90,13.00a2.9,2.9 0 1,0 5.8,0a2.9,2.9 0 1,0 -5.8,0z"/><path fill="#005f7e" d="M4.40,13.00a1.5,1.5 0 1,0 3.0,0a1.5,1.5 0 1,0 -3.0,0zM15.30,13.00a1.5,1.5 0 1,0 3.0,0a1.5,1.5 0 1,0 -3.0,0z"/></g></g>
<g transform="translate(213.0,743.5)"><path fill="#005f7e" d="M0,17.1L-7.97,5.54A9.7,9.7 0 1 1 7.97,5.54Z"/><g transform="translate(-6.32,-5.60) scale(0.575)"><path fill="#fff" fill-rule="evenodd" d="M1,0H19.6Q20.7,0 20.7,1V3.7H19.2L22,7.6V12.7H0V1Q0,0 1,0ZM1.8,4.9V8H8.1V4.9Z M10,4.9V11.2H13.1V4.9Z M16,4.9V8H20.6L18.6,4.9Z"/><path fill="#fff" d="M3.00,13.00a2.9,2.9 0 1,0 5.8,0a2.9,2.9 0 1,0 -5.8,0zM13.90,13.00a2.9,2.9 0 1,0 5.8,0a2.9,2.9 0 1,0 -5.8,0z"/><path fill="#005f7e" d="M4.40,13.00a1.5,1.5 0 1,0 3.0,0a1.5,1.5 0 1,0 -3.0,0zM15.30,13.00a1.5,1.5 0 1,0 3.0,0a1.5,1.5 0 1,0 -3.0,0z"/></g></g>
<g transform="translate(35.9,732.5)"><path fill="#005f7e" d="M0,17.1L-7.97,5.54A9.7,9.7 0 1 1 7.97,5.54Z"/><g transform="translate(-6.32,-5.60) scale(0.575)"><path fill="#fff" fill-rule="evenodd" d="M1,0H19.6Q20.7,0 20.7,1V3.7H19.2L22,7.6V12.7H0V1Q0,0 1,0ZM1.8,4.9V8H8.1V4.9Z M10,4.9V11.2H13.1V4.9Z M16,4.9V8H20.6L18.6,4.9Z"/><path fill="#fff" d="M3.00,13.00a2.9,2.9 0 1,0 5.8,0a2.9,2.9 0 1,0 -5.8,0zM13.90,13.00a2.9,2.9 0 1,0 5.8,0a2.9,2.9 0 1,0 -5.8,0z"/><path fill="#005f7e" d="M4.40,13.00a1.5,1.5 0 1,0 3.0,0a1.5,1.5 0 1,0 -3.0,0zM15.30,13.00a1.5,1.5 0 1,0 3.0,0a1.5,1.5 0 1,0 -3.0,0z"/></g></g>
<g transform="translate(163.5,731.1)"><path fill="#08643f" d="M0,17.1L-7.97,5.54A9.7,9.7 0 1 1 7.97,5.54Z"/><path fill="#fff" d="M2.2,-6.1L5.3,-1.6H4.2L6.9,2.4H4.4V5.3H2.3V2.4H-1L1.6,-1.6H0.5Z"/><path fill="#fff" stroke="#08643f" stroke-width="1.1" stroke-linejoin="round" paint-order="stroke" d="M-1.7,-6.1L1.4,-1.6H0.3L3,2.4H-0.6V5.3H-2.7V2.4H-6.3L-3.6,-1.6H-4.7Z"/></g>
<g transform="translate(194.5,729.5)"><path fill="#005f7e" d="M0,17.1L-7.97,5.54A9.7,9.7 0 1 1 7.97,5.54Z"/><g transform="translate(-6.32,-5.60) scale(0.575)"><path fill="#fff" fill-rule="evenodd" d="M1,0H19.6Q20.7,0 20.7,1V3.7H19.2L22,7.6V12.7H0V1Q0,0 1,0ZM1.8,4.9V8H8.1V4.9Z M10,4.9V11.2H13.1V4.9Z M16,4.9V8H20.6L18.6,4.9Z"/><path fill="#fff" d="M3.00,13.00a2.9,2.9 0 1,0 5.8,0a2.9,2.9 0 1,0 -5.8,0zM13.90,13.00a2.9,2.9 0 1,0 5.8,0a2.9,2.9 0 1,0 -5.8,0z"/><path fill="#005f7e" d="M4.40,13.00a1.5,1.5 0 1,0 3.0,0a1.5,1.5 0 1,0 -3.0,0zM15.30,13.00a1.5,1.5 0 1,0 3.0,0a1.5,1.5 0 1,0 -3.0,0z"/></g></g>
<g transform="translate(91.0,723.5)"><path fill="#08644c" d="M0,17.1L-7.97,5.54A9.7,9.7 0 1 1 7.97,5.54Z"/><g transform="translate(-0.8,0.8)"><g transform="scale(0.5)"><path fill="#fff" fill-rule="evenodd" d="M-9.2,8.1V0.3L-7.2,-6.6Q-6.8,-8.1 -5.2,-8.1H5.2Q6.8,-8.1 7.2,-6.6L9.2,0.3V8.1H6V5.7H-6V8.1ZM-6.2,-1.6L-5,-5.8H5L6.2,-1.6Z"/><path fill="#08644c" d="M-6.65,1.60a1.15,1.15 0 1,0 2.3,0a1.15,1.15 0 1,0 -2.3,0zM4.25,1.60a1.15,1.15 0 1,0 2.3,0a1.15,1.15 0 1,0 -2.3,0z"/><circle cx="7" cy="-7.2" r="7.7" fill="#08644c"/><circle cx="7" cy="-7.2" r="5.65" fill="none" stroke="#fff" stroke-width="1.5"/><path d="M7,-10.8V-6.9L9.6,-5.5" stroke="#fff" stroke-width="1.3" fill="none"/></g></g></g>
<g transform="translate(123.9,722.3)"><path fill="#08643f" d="M0,17.1L-7.97,5.54A9.7,9.7 0 1 1 7.97,5.54Z"/><path fill="#fff" d="M2.2,-6.1L5.3,-1.6H4.2L6.9,2.4H4.4V5.3H2.3V2.4H-1L1.6,-1.6H0.5Z"/><path fill="#fff" stroke="#08643f" stroke-width="1.1" stroke-linejoin="round" paint-order="stroke" d="M-1.7,-6.1L1.4,-1.6H0.3L3,2.4H-0.6V5.3H-2.7V2.4H-6.3L-3.6,-1.6H-4.7Z"/></g>
<g transform="translate(199.1,717.2)"><path fill="#005f7e" d="M0,17.1L-7.97,5.54A9.7,9.7 0 1 1 7.97,5.54Z"/><g transform="translate(-6.32,-5.60) scale(0.575)"><path fill="#fff" fill-rule="evenodd" d="M1,0H19.6Q20.7,0 20.7,1V3.7H19.2L22,7.6V12.7H0V1Q0,0 1,0ZM1.8,4.9V8H8.1V4.9Z M10,4.9V11.2H13.1V4.9Z M16,4.9V8H20.6L18.6,4.9Z"/><path fill="#fff" d="M3.00,13.00a2.9,2.9 0 1,0 5.8,0a2.9,2.9 0 1,0 -5.8,0zM13.90,13.00a2.9,2.9 0 1,0 5.8,0a2.9,2.9 0 1,0 -5.8,0z"/><path fill="#005f7e" d="M4.40,13.00a1.5,1.5 0 1,0 3.0,0a1.5,1.5 0 1,0 -3.0,0zM15.30,13.00a1.5,1.5 0 1,0 3.0,0a1.5,1.5 0 1,0 -3.0,0z"/></g></g>
<g transform="translate(261.1,717.2)"><path fill="#08644c" d="M0,17.1L-7.97,5.54A9.7,9.7 0 1 1 7.97,5.54Z"/><g transform="translate(-0.8,0.8)"><g transform="scale(0.5)"><path fill="#fff" fill-rule="evenodd" d="M-9.2,8.1V0.3L-7.2,-6.6Q-6.8,-8.1 -5.2,-8.1H5.2Q6.8,-8.1 7.2,-6.6L9.2,0.3V8.1H6V5.7H-6V8.1ZM-6.2,-1.6L-5,-5.8H5L6.2,-1.6Z"/><path fill="#08644c" d="M-6.65,1.60a1.15,1.15 0 1,0 2.3,0a1.15,1.15 0 1,0 -2.3,0zM4.25,1.60a1.15,1.15 0 1,0 2.3,0a1.15,1.15 0 1,0 -2.3,0z"/><circle cx="7" cy="-7.2" r="7.7" fill="#08644c"/><circle cx="7" cy="-7.2" r="5.65" fill="none" stroke="#fff" stroke-width="1.5"/><path d="M7,-10.8V-6.9L9.6,-5.5" stroke="#fff" stroke-width="1.3" fill="none"/></g></g></g>
<g transform="translate(278.5,712.2)"><path fill="#005f7e" d="M0,17.1L-7.97,5.54A9.7,9.7 0 1 1 7.97,5.54Z"/><g transform="translate(-6.32,-5.60) scale(0.575)"><path fill="#fff" fill-rule="evenodd" d="M1,0H19.6Q20.7,0 20.7,1V3.7H19.2L22,7.6V12.7H0V1Q0,0 1,0ZM1.8,4.9V8H8.1V4.9Z M10,4.9V11.2H13.1V4.9Z M16,4.9V8H20.6L18.6,4.9Z"/><path fill="#fff" d="M3.00,13.00a2.9,2.9 0 1,0 5.8,0a2.9,2.9 0 1,0 -5.8,0zM13.90,13.00a2.9,2.9 0 1,0 5.8,0a2.9,2.9 0 1,0 -5.8,0z"/><path fill="#005f7e" d="M4.40,13.00a1.5,1.5 0 1,0 3.0,0a1.5,1.5 0 1,0 -3.0,0zM15.30,13.00a1.5,1.5 0 1,0 3.0,0a1.5,1.5 0 1,0 -3.0,0z"/></g></g>
<g transform="translate(283.5,707.1)"><path fill="#005f7e" d="M0,17.1L-7.97,5.54A9.7,9.7 0 1 1 7.97,5.54Z"/><g transform="translate(-6.32,-5.60) scale(0.575)"><path fill="#fff" fill-rule="evenodd" d="M1,0H19.6Q20.7,0 20.7,1V3.7H19.2L22,7.6V12.7H0V1Q0,0 1,0ZM1.8,4.9V8H8.1V4.9Z M10,4.9V11.2H13.1V4.9Z M16,4.9V8H20.6L18.6,4.9Z"/><path fill="#fff" d="M3.00,13.00a2.9,2.9 0 1,0 5.8,0a2.9,2.9 0 1,0 -5.8,0zM13.90,13.00a2.9,2.9 0 1,0 5.8,0a2.9,2.9 0 1,0 -5.8,0z"/><path fill="#005f7e" d="M4.40,13.00a1.5,1.5 0 1,0 3.0,0a1.5,1.5 0 1,0 -3.0,0zM15.30,13.00a1.5,1.5 0 1,0 3.0,0a1.5,1.5 0 1,0 -3.0,0z"/></g></g>
<g transform="translate(106.5,705.5)"><path fill="#005f7e" d="M0,17.1L-7.97,5.54A9.7,9.7 0 1 1 7.97,5.54Z"/><g transform="translate(-6.32,-5.60) scale(0.575)"><path fill="#fff" fill-rule="evenodd" d="M1,0H19.6Q20.7,0 20.7,1V3.7H19.2L22,7.6V12.7H0V1Q0,0 1,0ZM1.8,4.9V8H8.1V4.9Z M10,4.9V11.2H13.1V4.9Z M16,4.9V8H20.6L18.6,4.9Z"/><path fill="#fff" d="M3.00,13.00a2.9,2.9 0 1,0 5.8,0a2.9,2.9 0 1,0 -5.8,0zM13.90,13.00a2.9,2.9 0 1,0 5.8,0a2.9,2.9 0 1,0 -5.8,0z"/><path fill="#005f7e" d="M4.40,13.00a1.5,1.5 0 1,0 3.0,0a1.5,1.5 0 1,0 -3.0,0zM15.30,13.00a1.5,1.5 0 1,0 3.0,0a1.5,1.5 0 1,0 -3.0,0z"/></g></g>
<g transform="translate(26.5,705.5)"><path fill="#1c62ae" d="M0,17.1L-7.97,5.54A9.7,9.7 0 1 1 7.97,5.54Z"/><text x="-2.9" y="0.6" font-family="Liberation Sans,sans-serif" font-size="10.5" fill="#fff" stroke="#fff" stroke-width="0.4" text-anchor="middle">P</text><text x="2.6" y="5.6" font-family="Liberation Sans,sans-serif" font-size="10.5" fill="#fff" stroke="#fff" stroke-width="0.4" text-anchor="middle">A</text></g>
<g transform="translate(157.3,702.0)"><path fill="#1c62ae" d="M0,17.1L-7.97,5.54A9.7,9.7 0 1 1 7.97,5.54Z"/><text x="-2.9" y="0.6" font-family="Liberation Sans,sans-serif" font-size="10.5" fill="#fff" stroke="#fff" stroke-width="0.4" text-anchor="middle">P</text><text x="2.6" y="5.6" font-family="Liberation Sans,sans-serif" font-size="10.5" fill="#fff" stroke="#fff" stroke-width="0.4" text-anchor="middle">A</text></g>
<g transform="translate(191.5,700.5)"><path fill="#005f7e" d="M0,17.1L-7.97,5.54A9.7,9.7 0 1 1 7.97,5.54Z"/><g transform="translate(-6.32,-5.60) scale(0.575)"><path fill="#fff" fill-rule="evenodd" d="M1,0H19.6Q20.7,0 20.7,1V3.7H19.2L22,7.6V12.7H0V1Q0,0 1,0ZM1.8,4.9V8H8.1V4.9Z M10,4.9V11.2H13.1V4.9Z M16,4.9V8H20.6L18.6,4.9Z"/><path fill="#fff" d="M3.00,13.00a2.9,2.9 0 1,0 5.8,0a2.9,2.9 0 1,0 -5.8,0zM13.90,13.00a2.9,2.9 0 1,0 5.8,0a2.9,2.9 0 1,0 -5.8,0z"/><path fill="#005f7e" d="M4.40,13.00a1.5,1.5 0 1,0 3.0,0a1.5,1.5 0 1,0 -3.0,0zM15.30,13.00a1.5,1.5 0 1,0 3.0,0a1.5,1.5 0 1,0 -3.0,0z"/></g></g>
<g transform="translate(213.5,700.3)"><path fill="#005f7e" d="M0,17.1L-7.97,5.54A9.7,9.7 0 1 1 7.97,5.54Z"/><g transform="translate(-6.32,-5.60) scale(0.575)"><path fill="#fff" fill-rule="evenodd" d="M1,0H19.6Q20.7,0 20.7,1V3.7H19.2L22,7.6V12.7H0V1Q0,0 1,0ZM1.8,4.9V8H8.1V4.9Z M10,4.9V11.2H13.1V4.9Z M16,4.9V8H20.6L18.6,4.9Z"/><path fill="#fff" d="M3.00,13.00a2.9,2.9 0 1,0 5.8,0a2.9,2.9 0 1,0 -5.8,0zM13.90,13.00a2.9,2.9 0 1,0 5.8,0a2.9,2.9 0 1,0 -5.8,0z"/><path fill="#005f7e" d="M4.40,13.00a1.5,1.5 0 1,0 3.0,0a1.5,1.5 0 1,0 -3.0,0zM15.30,13.00a1.5,1.5 0 1,0 3.0,0a1.5,1.5 0 1,0 -3.0,0z"/></g></g>
<g transform="translate(35.9,699.5)"><path fill="#08643f" d="M0,17.1L-7.97,5.54A9.7,9.7 0 1 1 7.97,5.54Z"/><path fill="#fff" d="M2.2,-6.1L5.3,-1.6H4.2L6.9,2.4H4.4V5.3H2.3V2.4H-1L1.6,-1.6H0.5Z"/><path fill="#fff" stroke="#08643f" stroke-width="1.1" stroke-linejoin="round" paint-order="stroke" d="M-1.7,-6.1L1.4,-1.6H0.3L3,2.4H-0.6V5.3H-2.7V2.4H-6.3L-3.6,-1.6H-4.7Z"/></g>
<g transform="translate(18.5,695.5)"><path fill="#005f7e" d="M0,17.1L-7.97,5.54A9.7,9.7 0 1 1 7.97,5.54Z"/><g transform="translate(-6.32,-5.60) scale(0.575)"><path fill="#fff" fill-rule="evenodd" d="M1,0H19.6Q20.7,0 20.7,1V3.7H19.2L22,7.6V12.7H0V1Q0,0 1,0ZM1.8,4.9V8H8.1V4.9Z M10,4.9V11.2H13.1V4.9Z M16,4.9V8H20.6L18.6,4.9Z"/><path fill="#fff" d="M3.00,13.00a2.9,2.9 0 1,0 5.8,0a2.9,2.9 0 1,0 -5.8,0zM13.90,13.00a2.9,2.9 0 1,0 5.8,0a2.9,2.9 0 1,0 -5.8,0z"/><path fill="#005f7e" d="M4.40,13.00a1.5,1.5 0 1,0 3.0,0a1.5,1.5 0 1,0 -3.0,0zM15.30,13.00a1.5,1.5 0 1,0 3.0,0a1.5,1.5 0 1,0 -3.0,0z"/></g></g>
<g transform="translate(129.5,694.5)"><path fill="#005f7e" d="M0,17.1L-7.97,5.54A9.7,9.7 0 1 1 7.97,5.54Z"/><g transform="translate(-6.32,-5.60) scale(0.575)"><path fill="#fff" fill-rule="evenodd" d="M1,0H19.6Q20.7,0 20.7,1V3.7H19.2L22,7.6V12.7H0V1Q0,0 1,0ZM1.8,4.9V8H8.1V4.9Z M10,4.9V11.2H13.1V4.9Z M16,4.9V8H20.6L18.6,4.9Z"/><path fill="#fff" d="M3.00,13.00a2.9,2.9 0 1,0 5.8,0a2.9,2.9 0 1,0 -5.8,0zM13.90,13.00a2.9,2.9 0 1,0 5.8,0a2.9,2.9 0 1,0 -5.8,0z"/><path fill="#005f7e" d="M4.40,13.00a1.5,1.5 0 1,0 3.0,0a1.5,1.5 0 1,0 -3.0,0zM15.30,13.00a1.5,1.5 0 1,0 3.0,0a1.5,1.5 0 1,0 -3.0,0z"/></g></g>
<g transform="translate(29.5,694.5)"><path fill="#176fc1" d="M0,17.1L-7.97,5.54A9.7,9.7 0 1 1 7.97,5.54Z"/><path d="M-1.9,-2.2A1.9,1.9 0 0 1 1.9,-2.2Z" fill="#f5c542"/><path d="M-2.25,-3.50L-3.98,-4.50M-1.30,-4.45L-2.30,-6.18M0.00,-4.80L0.00,-6.80M1.30,-4.45L2.30,-6.18M2.25,-3.50L3.98,-4.50" stroke="#f5c542" stroke-width="0.8" fill="none"/><text x="0" y="5.6" font-family="Liberation Serif,serif" font-size="9.5" fill="#fff" text-anchor="middle">E</text></g>
<g transform="translate(283.5,691.5)"><path fill="#005f7e" d="M0,17.1L-7.97,5.54A9.7,9.7 0 1 1 7.97,5.54Z"/><g transform="translate(-6.32,-5.60) scale(0.575)"><path fill="#fff" fill-rule="evenodd" d="M1,0H19.6Q20.7,0 20.7,1V3.7H19.2L22,7.6V12.7H0V1Q0,0 1,0ZM1.8,4.9V8H8.1V4.9Z M10,4.9V11.2H13.1V4.9Z M16,4.9V8H20.6L18.6,4.9Z"/><path fill="#fff" d="M3.00,13.00a2.9,2.9 0 1,0 5.8,0a2.9,2.9 0 1,0 -5.8,0zM13.90,13.00a2.9,2.9 0 1,0 5.8,0a2.9,2.9 0 1,0 -5.8,0z"/><path fill="#005f7e" d="M4.40,13.00a1.5,1.5 0 1,0 3.0,0a1.5,1.5 0 1,0 -3.0,0zM15.30,13.00a1.5,1.5 0 1,0 3.0,0a1.5,1.5 0 1,0 -3.0,0z"/></g></g>
<g transform="translate(120.5,690.5)"><path fill="#1c62ae" d="M0,17.1L-7.97,5.54A9.7,9.7 0 1 1 7.97,5.54Z"/><text x="-2.9" y="0.6" font-family="Liberation Sans,sans-serif" font-size="10.5" fill="#fff" stroke="#fff" stroke-width="0.4" text-anchor="middle">P</text><text x="2.6" y="5.6" font-family="Liberation Sans,sans-serif" font-size="10.5" fill="#fff" stroke="#fff" stroke-width="0.4" text-anchor="middle">A</text></g>
<g transform="translate(108.5,684.5)"><path fill="#005f7e" d="M0,17.1L-7.97,5.54A9.7,9.7 0 1 1 7.97,5.54Z"/><g transform="translate(-6.32,-5.60) scale(0.575)"><path fill="#fff" fill-rule="evenodd" d="M1,0H19.6Q20.7,0 20.7,1V3.7H19.2L22,7.6V12.7H0V1Q0,0 1,0ZM1.8,4.9V8H8.1V4.9Z M10,4.9V11.2H13.1V4.9Z M16,4.9V8H20.6L18.6,4.9Z"/><path fill="#fff" d="M3.00,13.00a2.9,2.9 0 1,0 5.8,0a2.9,2.9 0 1,0 -5.8,0zM13.90,13.00a2.9,2.9 0 1,0 5.8,0a2.9,2.9 0 1,0 -5.8,0z"/><path fill="#005f7e" d="M4.40,13.00a1.5,1.5 0 1,0 3.0,0a1.5,1.5 0 1,0 -3.0,0zM15.30,13.00a1.5,1.5 0 1,0 3.0,0a1.5,1.5 0 1,0 -3.0,0z"/></g></g>
<g transform="translate(187.5,681.5)"><path fill="#005f7e" d="M0,17.1L-7.97,5.54A9.7,9.7 0 1 1 7.97,5.54Z"/><g transform="translate(-6.32,-5.60) scale(0.575)"><path fill="#fff" fill-rule="evenodd" d="M1,0H19.6Q20.7,0 20.7,1V3.7H19.2L22,7.6V12.7H0V1Q0,0 1,0ZM1.8,4.9V8H8.1V4.9Z M10,4.9V11.2H13.1V4.9Z M16,4.9V8H20.6L18.6,4.9Z"/><path fill="#fff" d="M3.00,13.00a2.9,2.9 0 1,0 5.8,0a2.9,2.9 0 1,0 -5.8,0zM13.90,13.00a2.9,2.9 0 1,0 5.8,0a2.9,2.9 0 1,0 -5.8,0z"/><path fill="#005f7e" d="M4.40,13.00a1.5,1.5 0 1,0 3.0,0a1.5,1.5 0 1,0 -3.0,0zM15.30,13.00a1.5,1.5 0 1,0 3.0,0a1.5,1.5 0 1,0 -3.0,0z"/></g></g>
<g transform="translate(115.5,680.5)"><path fill="#005f7e" d="M0,17.1L-7.97,5.54A9.7,9.7 0 1 1 7.97,5.54Z"/><g transform="translate(-6.32,-5.60) scale(0.575)"><path fill="#fff" fill-rule="evenodd" d="M1,0H19.6Q20.7,0 20.7,1V3.7H19.2L22,7.6V12.7H0V1Q0,0 1,0ZM1.8,4.9V8H8.1V4.9Z M10,4.9V11.2H13.1V4.9Z M16,4.9V8H20.6L18.6,4.9Z"/><path fill="#fff" d="M3.00,13.00a2.9,2.9 0 1,0 5.8,0a2.9,2.9 0 1,0 -5.8,0zM13.90,13.00a2.9,2.9 0 1,0 5.8,0a2.9,2.9 0 1,0 -5.8,0z"/><path fill="#005f7e" d="M4.40,13.00a1.5,1.5 0 1,0 3.0,0a1.5,1.5 0 1,0 -3.0,0zM15.30,13.00a1.5,1.5 0 1,0 3.0,0a1.5,1.5 0 1,0 -3.0,0z"/></g></g>
<g transform="translate(95.4,676.5)"><path fill="#005f7e" d="M0,17.1L-7.97,5.54A9.7,9.7 0 1 1 7.97,5.54Z"/><g transform="translate(-6.32,-5.60) scale(0.575)"><path fill="#fff" fill-rule="evenodd" d="M1,0H19.6Q20.7,0 20.7,1V3.7H19.2L22,7.6V12.7H0V1Q0,0 1,0ZM1.8,4.9V8H8.1V4.9Z M10,4.9V11.2H13.1V4.9Z M16,4.9V8H20.6L18.6,4.9Z"/><path fill="#fff" d="M3.00,13.00a2.9,2.9 0 1,0 5.8,0a2.9,2.9 0 1,0 -5.8,0zM13.90,13.00a2.9,2.9 0 1,0 5.8,0a2.9,2.9 0 1,0 -5.8,0z"/><path fill="#005f7e" d="M4.40,13.00a1.5,1.5 0 1,0 3.0,0a1.5,1.5 0 1,0 -3.0,0zM15.30,13.00a1.5,1.5 0 1,0 3.0,0a1.5,1.5 0 1,0 -3.0,0z"/></g></g>
<g transform="translate(281.3,674.2)"><path fill="#005f7e" d="M0,17.1L-7.97,5.54A9.7,9.7 0 1 1 7.97,5.54Z"/><g transform="translate(-6.32,-5.60) scale(0.575)"><path fill="#fff" fill-rule="evenodd" d="M1,0H19.6Q20.7,0 20.7,1V3.7H19.2L22,7.6V12.7H0V1Q0,0 1,0ZM1.8,4.9V8H8.1V4.9Z M10,4.9V11.2H13.1V4.9Z M16,4.9V8H20.6L18.6,4.9Z"/><path fill="#fff" d="M3.00,13.00a2.9,2.9 0 1,0 5.8,0a2.9,2.9 0 1,0 -5.8,0zM13.90,13.00a2.9,2.9 0 1,0 5.8,0a2.9,2.9 0 1,0 -5.8,0z"/><path fill="#005f7e" d="M4.40,13.00a1.5,1.5 0 1,0 3.0,0a1.5,1.5 0 1,0 -3.0,0zM15.30,13.00a1.5,1.5 0 1,0 3.0,0a1.5,1.5 0 1,0 -3.0,0z"/></g></g>
<g transform="translate(37.9,670.5)"><path fill="#005f7e" d="M0,17.1L-7.97,5.54A9.7,9.7 0 1 1 7.97,5.54Z"/><g transform="translate(-6.32,-5.60) scale(0.575)"><path fill="#fff" fill-rule="evenodd" d="M1,0H19.6Q20.7,0 20.7,1V3.7H19.2L22,7.6V12.7H0V1Q0,0 1,0ZM1.8,4.9V8H8.1V4.9Z M10,4.9V11.2H13.1V4.9Z M16,4.9V8H20.6L18.6,4.9Z"/><path fill="#fff" d="M3.00,13.00a2.9,2.9 0 1,0 5.8,0a2.9,2.9 0 1,0 -5.8,0zM13.90,13.00a2.9,2.9 0 1,0 5.8,0a2.9,2.9 0 1,0 -5.8,0z"/><path fill="#005f7e" d="M4.40,13.00a1.5,1.5 0 1,0 3.0,0a1.5,1.5 0 1,0 -3.0,0zM15.30,13.00a1.5,1.5 0 1,0 3.0,0a1.5,1.5 0 1,0 -3.0,0z"/></g></g>
<g transform="translate(181.4,670.5)"><path fill="#fdd835" d="M0,17.1L-7.97,5.54A9.7,9.7 0 1 1 7.97,5.54Z"/><path d="M-3.9,-6.7L4.3,2.4M3.3,-6.7L-4.9,2.4" stroke="#ee3524" stroke-width="1.8" fill="none"/><path d="M-2,2.9L-0.5,0.4L1,2.9Z" fill="#111"/><text x="-0.3" y="5.2" font-family="Liberation Sans,sans-serif" font-size="3.4" font-weight="bold" fill="#111" stroke="#111" stroke-width="0.3" text-anchor="middle" textLength="10.5" lengthAdjust="spacingAndGlyphs">KOA</text></g>
<g transform="translate(245.1,667.9)"><path fill="#005f7e" d="M0,17.1L-7.97,5.54A9.7,9.7 0 1 1 7.97,5.54Z"/><g transform="translate(-6.32,-5.60) scale(0.575)"><path fill="#fff" fill-rule="evenodd" d="M1,0H19.6Q20.7,0 20.7,1V3.7H19.2L22,7.6V12.7H0V1Q0,0 1,0ZM1.8,4.9V8H8.1V4.9Z M10,4.9V11.2H13.1V4.9Z M16,4.9V8H20.6L18.6,4.9Z"/><path fill="#fff" d="M3.00,13.00a2.9,2.9 0 1,0 5.8,0a2.9,2.9 0 1,0 -5.8,0zM13.90,13.00a2.9,2.9 0 1,0 5.8,0a2.9,2.9 0 1,0 -5.8,0z"/><path fill="#005f7e" d="M4.40,13.00a1.5,1.5 0 1,0 3.0,0a1.5,1.5 0 1,0 -3.0,0zM15.30,13.00a1.5,1.5 0 1,0 3.0,0a1.5,1.5 0 1,0 -3.0,0z"/></g></g>
<g transform="translate(189.0,657.5)"><path fill="#005f7e" d="M0,17.1L-7.97,5.54A9.7,9.7 0 1 1 7.97,5.54Z"/><g transform="translate(-6.32,-5.60) scale(0.575)"><path fill="#fff" fill-rule="evenodd" d="M1,0H19.6Q20.7,0 20.7,1V3.7H19.2L22,7.6V12.7H0V1Q0,0 1,0ZM1.8,4.9V8H8.1V4.9Z M10,4.9V11.2H13.1V4.9Z M16,4.9V8H20.6L18.6,4.9Z"/><path fill="#fff" d="M3.00,13.00a2.9,2.9 0 1,0 5.8,0a2.9,2.9 0 1,0 -5.8,0zM13.90,13.00a2.9,2.9 0 1,0 5.8,0a2.9,2.9 0 1,0 -5.8,0z"/><path fill="#005f7e" d="M4.40,13.00a1.5,1.5 0 1,0 3.0,0a1.5,1.5 0 1,0 -3.0,0zM15.30,13.00a1.5,1.5 0 1,0 3.0,0a1.5,1.5 0 1,0 -3.0,0z"/></g></g>
<g transform="translate(282.5,656.5)"><path fill="#005f7e" d="M0,17.1L-7.97,5.54A9.7,9.7 0 1 1 7.97,5.54Z"/><g transform="translate(-6.32,-5.60) scale(0.575)"><path fill="#fff" fill-rule="evenodd" d="M1,0H19.6Q20.7,0 20.7,1V3.7H19.2L22,7.6V12.7H0V1Q0,0 1,0ZM1.8,4.9V8H8.1V4.9Z M10,4.9V11.2H13.1V4.9Z M16,4.9V8H20.6L18.6,4.9Z"/><path fill="#fff" d="M3.00,13.00a2.9,2.9 0 1,0 5.8,0a2.9,2.9 0 1,0 -5.8,0zM13.90,13.00a2.9,2.9 0 1,0 5.8,0a2.9,2.9 0 1,0 -5.8,0z"/><path fill="#005f7e" d="M4.40,13.00a1.5,1.5 0 1,0 3.0,0a1.5,1.5 0 1,0 -3.0,0zM15.30,13.00a1.5,1.5 0 1,0 3.0,0a1.5,1.5 0 1,0 -3.0,0z"/></g></g>
<g transform="translate(214.3,654.0)"><path fill="#005f7e" d="M0,17.1L-7.97,5.54A9.7,9.7 0 1 1 7.97,5.54Z"/><g transform="translate(-6.32,-5.60) scale(0.575)"><path fill="#fff" fill-rule="evenodd" d="M1,0H19.6Q20.7,0 20.7,1V3.7H19.2L22,7.6V12.7H0V1Q0,0 1,0ZM1.8,4.9V8H8.1V4.9Z M10,4.9V11.2H13.1V4.9Z M16,4.9V8H20.6L18.6,4.9Z"/><path fill="#fff" d="M3.00,13.00a2.9,2.9 0 1,0 5.8,0a2.9,2.9 0 1,0 -5.8,0zM13.90,13.00a2.9,2.9 0 1,0 5.8,0a2.9,2.9 0 1,0 -5.8,0z"/><path fill="#005f7e" d="M4.40,13.00a1.5,1.5 0 1,0 3.0,0a1.5,1.5 0 1,0 -3.0,0zM15.30,13.00a1.5,1.5 0 1,0 3.0,0a1.5,1.5 0 1,0 -3.0,0z"/></g></g>
<g transform="translate(206.5,651.5)"><path fill="#fdd835" d="M0,17.1L-7.97,5.54A9.7,9.7 0 1 1 7.97,5.54Z"/><path d="M-3.9,-6.7L4.3,2.4M3.3,-6.7L-4.9,2.4" stroke="#ee3524" stroke-width="1.8" fill="none"/><path d="M-2,2.9L-0.5,0.4L1,2.9Z" fill="#111"/><text x="-0.3" y="5.2" font-family="Liberation Sans,sans-serif" font-size="3.4" font-weight="bold" fill="#111" stroke="#111" stroke-width="0.3" text-anchor="middle" textLength="10.5" lengthAdjust="spacingAndGlyphs">KOA</text></g>
<g transform="translate(294.0,648.9)"><path fill="#005f7e" d="M0,17.1L-7.97,5.54A9.7,9.7 0 1 1 7.97,5.54Z"/><g transform="translate(-6.32,-5.60) scale(0.575)"><path fill="#fff" fill-rule="evenodd" d="M1,0H19.6Q20.7,0 20.7,1V3.7H19.2L22,7.6V12.7H0V1Q0,0 1,0ZM1.8,4.9V8H8.1V4.9Z M10,4.9V11.2H13.1V4.9Z M16,4.9V8H20.6L18.6,4.9Z"/><path fill="#fff" d="M3.00,13.00a2.9,2.9 0 1,0 5.8,0a2.9,2.9 0 1,0 -5.8,0zM13.90,13.00a2.9,2.9 0 1,0 5.8,0a2.9,2.9 0 1,0 -5.8,0z"/><path fill="#005f7e" d="M4.40,13.00a1.5,1.5 0 1,0 3.0,0a1.5,1.5 0 1,0 -3.0,0zM15.30,13.00a1.5,1.5 0 1,0 3.0,0a1.5,1.5 0 1,0 -3.0,0z"/></g></g>
<g transform="translate(94.1,647.5)"><path fill="#005f7e" d="M0,17.1L-7.97,5.54A9.7,9.7 0 1 1 7.97,5.54Z"/><g transform="translate(-6.32,-5.60) scale(0.575)"><path fill="#fff" fill-rule="evenodd" d="M1,0H19.6Q20.7,0 20.7,1V3.7H19.2L22,7.6V12.7H0V1Q0,0 1,0ZM1.8,4.9V8H8.1V4.9Z M10,4.9V11.2H13.1V4.9Z M16,4.9V8H20.6L18.6,4.9Z"/><path fill="#fff" d="M3.00,13.00a2.9,2.9 0 1,0 5.8,0a2.9,2.9 0 1,0 -5.8,0zM13.90,13.00a2.9,2.9 0 1,0 5.8,0a2.9,2.9 0 1,0 -5.8,0z"/><path fill="#005f7e" d="M4.40,13.00a1.5,1.5 0 1,0 3.0,0a1.5,1.5 0 1,0 -3.0,0zM15.30,13.00a1.5,1.5 0 1,0 3.0,0a1.5,1.5 0 1,0 -3.0,0z"/></g></g>
<g transform="translate(140.9,645.1)"><path fill="#005f7e" d="M0,17.1L-7.97,5.54A9.7,9.7 0 1 1 7.97,5.54Z"/><g transform="translate(-6.32,-5.60) scale(0.575)"><path fill="#fff" fill-rule="evenodd" d="M1,0H19.6Q20.7,0 20.7,1V3.7H19.2L22,7.6V12.7H0V1Q0,0 1,0ZM1.8,4.9V8H8.1V4.9Z M10,4.9V11.2H13.1V4.9Z M16,4.9V8H20.6L18.6,4.9Z"/><path fill="#fff" d="M3.00,13.00a2.9,2.9 0 1,0 5.8,0a2.9,2.9 0 1,0 -5.8,0zM13.90,13.00a2.9,2.9 0 1,0 5.8,0a2.9,2.9 0 1,0 -5.8,0z"/><path fill="#005f7e" d="M4.40,13.00a1.5,1.5 0 1,0 3.0,0a1.5,1.5 0 1,0 -3.0,0zM15.30,13.00a1.5,1.5 0 1,0 3.0,0a1.5,1.5 0 1,0 -3.0,0z"/></g></g>
<g transform="translate(61.5,643.5)"><path fill="#08644c" d="M0,17.1L-7.97,5.54A9.7,9.7 0 1 1 7.97,5.54Z"/><g transform="translate(-0.8,0.8)"><g transform="scale(0.5)"><path fill="#fff" fill-rule="evenodd" d="M-9.2,8.1V0.3L-7.2,-6.6Q-6.8,-8.1 -5.2,-8.1H5.2Q6.8,-8.1 7.2,-6.6L9.2,0.3V8.1H6V5.7H-6V8.1ZM-6.2,-1.6L-5,-5.8H5L6.2,-1.6Z"/><path fill="#08644c" d="M-6.65,1.60a1.15,1.15 0 1,0 2.3,0a1.15,1.15 0 1,0 -2.3,0zM4.25,1.60a1.15,1.15 0 1,0 2.3,0a1.15,1.15 0 1,0 -2.3,0z"/><circle cx="7" cy="-7.2" r="7.7" fill="#08644c"/><circle cx="7" cy="-7.2" r="5.65" fill="none" stroke="#fff" stroke-width="1.5"/><path d="M7,-10.8V-6.9L9.6,-5.5" stroke="#fff" stroke-width="1.3" fill="none"/></g></g></g>
<g transform="translate(310.5,640.1)"><path fill="#005f7e" d="M0,17.1L-7.97,5.54A9.7,9.7 0 1 1 7.97,5.54Z"/><g transform="translate(-6.32,-5.60) scale(0.575)"><path fill="#fff" fill-rule="evenodd" d="M1,0H19.6Q20.7,0 20.7,1V3.7H19.2L22,7.6V12.7H0V1Q0,0 1,0ZM1.8,4.9V8H8.1V4.9Z M10,4.9V11.2H13.1V4.9Z M16,4.9V8H20.6L18.6,4.9Z"/><path fill="#fff" d="M3.00,13.00a2.9,2.9 0 1,0 5.8,0a2.9,2.9 0 1,0 -5.8,0zM13.90,13.00a2.9,2.9 0 1,0 5.8,0a2.9,2.9 0 1,0 -5.8,0z"/><path fill="#005f7e" d="M4.40,13.00a1.5,1.5 0 1,0 3.0,0a1.5,1.5 0 1,0 -3.0,0zM15.30,13.00a1.5,1.5 0 1,0 3.0,0a1.5,1.5 0 1,0 -3.0,0z"/></g></g>
<g transform="translate(325.0,635.0)"><path fill="#c8102e" d="M0,17.1L-7.97,5.54A9.7,9.7 0 1 1 7.97,5.54Z"/><text x="0" y="5.2" font-family="Liberation Sans,sans-serif" font-size="12.6" font-weight="bold" fill="#fff" text-anchor="middle" textLength="12" lengthAdjust="spacingAndGlyphs">GS</text><ellipse cx="-2.9" cy="-5.3" rx="4.2" ry="1.6" transform="rotate(-12 -2.9 -5.3)" stroke="#ffc61a" stroke-width="0.8" fill="none"/></g>
<g transform="translate(283.5,629.9)"><path fill="#005f7e" d="M0,17.1L-7.97,5.54A9.7,9.7 0 1 1 7.97,5.54Z"/><g transform="translate(-6.32,-5.60) scale(0.575)"><path fill="#fff" fill-rule="evenodd" d="M1,0H19.6Q20.7,0 20.7,1V3.7H19.2L22,7.6V12.7H0V1Q0,0 1,0ZM1.8,4.9V8H8.1V4.9Z M10,4.9V11.2H13.1V4.9Z M16,4.9V8H20.6L18.6,4.9Z"/><path fill="#fff" d="M3.00,13.00a2.9,2.9 0 1,0 5.8,0a2.9,2.9 0 1,0 -5.8,0zM13.90,13.00a2.9,2.9 0 1,0 5.8,0a2.9,2.9 0 1,0 -5.8,0z"/><path fill="#005f7e" d="M4.40,13.00a1.5,1.5 0 1,0 3.0,0a1.5,1.5 0 1,0 -3.0,0zM15.30,13.00a1.5,1.5 0 1,0 3.0,0a1.5,1.5 0 1,0 -3.0,0z"/></g></g>
<g transform="translate(230.5,628.5)"><path fill="#005f7e" d="M0,17.1L-7.97,5.54A9.7,9.7 0 1 1 7.97,5.54Z"/><g transform="translate(-6.32,-5.60) scale(0.575)"><path fill="#fff" fill-rule="evenodd" d="M1,0H19.6Q20.7,0 20.7,1V3.7H19.2L22,7.6V12.7H0V1Q0,0 1,0ZM1.8,4.9V8H8.1V4.9Z M10,4.9V11.2H13.1V4.9Z M16,4.9V8H20.6L18.6,4.9Z"/><path fill="#fff" d="M3.00,13.00a2.9,2.9 0 1,0 5.8,0a2.9,2.9 0 1,0 -5.8,0zM13.90,13.00a2.9,2.9 0 1,0 5.8,0a2.9,2.9 0 1,0 -5.8,0z"/><path fill="#005f7e" d="M4.40,13.00a1.5,1.5 0 1,0 3.0,0a1.5,1.5 0 1,0 -3.0,0zM15.30,13.00a1.5,1.5 0 1,0 3.0,0a1.5,1.5 0 1,0 -3.0,0z"/></g></g>
<g transform="translate(309.5,628.1)"><path fill="#005f7e" d="M0,17.1L-7.97,5.54A9.7,9.7 0 1 1 7.97,5.54Z"/><g transform="translate(-6.32,-5.60) scale(0.575)"><path fill="#fff" fill-rule="evenodd" d="M1,0H19.6Q20.7,0 20.7,1V3.7H19.2L22,7.6V12.7H0V1Q0,0 1,0ZM1.8,4.9V8H8.1V4.9Z M10,4.9V11.2H13.1V4.9Z M16,4.9V8H20.6L18.6,4.9Z"/><path fill="#fff" d="M3.00,13.00a2.9,2.9 0 1,0 5.8,0a2.9,2.9 0 1,0 -5.8,0zM13.90,13.00a2.9,2.9 0 1,0 5.8,0a2.9,2.9 0 1,0 -5.8,0z"/><path fill="#005f7e" d="M4.40,13.00a1.5,1.5 0 1,0 3.0,0a1.5,1.5 0 1,0 -3.0,0zM15.30,13.00a1.5,1.5 0 1,0 3.0,0a1.5,1.5 0 1,0 -3.0,0z"/></g></g>
<g transform="translate(250.5,627.5)"><path fill="#005f7e" d="M0,17.1L-7.97,5.54A9.7,9.7 0 1 1 7.97,5.54Z"/><g transform="translate(-6.32,-5.60) scale(0.575)"><path fill="#fff" fill-rule="evenodd" d="M1,0H19.6Q20.7,0 20.7,1V3.7H19.2L22,7.6V12.7H0V1Q0,0 1,0ZM1.8,4.9V8H8.1V4.9Z M10,4.9V11.2H13.1V4.9Z M16,4.9V8H20.6L18.6,4.9Z"/><path fill="#fff" d="M3.00,13.00a2.9,2.9 0 1,0 5.8,0a2.9,2.9 0 1,0 -5.8,0zM13.90,13.00a2.9,2.9 0 1,0 5.8,0a2.9,2.9 0 1,0 -5.8,0z"/><path fill="#005f7e" d="M4.40,13.00a1.5,1.5 0 1,0 3.0,0a1.5,1.5 0 1,0 -3.0,0zM15.30,13.00a1.5,1.5 0 1,0 3.0,0a1.5,1.5 0 1,0 -3.0,0z"/></g></g>
<g transform="translate(297.1,627.1)"><path fill="#08644c" d="M0,17.1L-7.97,5.54A9.7,9.7 0 1 1 7.97,5.54Z"/><g transform="translate(-0.8,0.8)"><g transform="scale(0.5)"><path fill="#fff" fill-rule="evenodd" d="M-9.2,8.1V0.3L-7.2,-6.6Q-6.8,-8.1 -5.2,-8.1H5.2Q6.8,-8.1 7.2,-6.6L9.2,0.3V8.1H6V5.7H-6V8.1ZM-6.2,-1.6L-5,-5.8H5L6.2,-1.6Z"/><path fill="#08644c" d="M-6.65,1.60a1.15,1.15 0 1,0 2.3,0a1.15,1.15 0 1,0 -2.3,0zM4.25,1.60a1.15,1.15 0 1,0 2.3,0a1.15,1.15 0 1,0 -2.3,0z"/><circle cx="7" cy="-7.2" r="7.7" fill="#08644c"/><circle cx="7" cy="-7.2" r="5.65" fill="none" stroke="#fff" stroke-width="1.5"/><path d="M7,-10.8V-6.9L9.6,-5.5" stroke="#fff" stroke-width="1.3" fill="none"/></g></g></g>
<g transform="translate(225.1,623.5)"><path fill="#005f7e" d="M0,17.1L-7.97,5.54A9.7,9.7 0 1 1 7.97,5.54Z"/><g transform="translate(-6.32,-5.60) scale(0.575)"><path fill="#fff" fill-rule="evenodd" d="M1,0H19.6Q20.7,0 20.7,1V3.7H19.2L22,7.6V12.7H0V1Q0,0 1,0ZM1.8,4.9V8H8.1V4.9Z M10,4.9V11.2H13.1V4.9Z M16,4.9V8H20.6L18.6,4.9Z"/><path fill="#fff" d="M3.00,13.00a2.9,2.9 0 1,0 5.8,0a2.9,2.9 0 1,0 -5.8,0zM13.90,13.00a2.9,2.9 0 1,0 5.8,0a2.9,2.9 0 1,0 -5.8,0z"/><path fill="#005f7e" d="M4.40,13.00a1.5,1.5 0 1,0 3.0,0a1.5,1.5 0 1,0 -3.0,0zM15.30,13.00a1.5,1.5 0 1,0 3.0,0a1.5,1.5 0 1,0 -3.0,0z"/></g></g>
<g transform="translate(202.1,622.5)"><path fill="#005f7e" d="M0,17.1L-7.97,5.54A9.7,9.7 0 1 1 7.97,5.54Z"/><g transform="translate(-6.32,-5.60) scale(0.575)"><path fill="#fff" fill-rule="evenodd" d="M1,0H19.6Q20.7,0 20.7,1V3.7H19.2L22,7.6V12.7H0V1Q0,0 1,0ZM1.8,4.9V8H8.1V4.9Z M10,4.9V11.2H13.1V4.9Z M16,4.9V8H20.6L18.6,4.9Z"/><path fill="#fff" d="M3.00,13.00a2.9,2.9 0 1,0 5.8,0a2.9,2.9 0 1,0 -5.8,0zM13.90,13.00a2.9,2.9 0 1,0 5.8,0a2.9,2.9 0 1,0 -5.8,0z"/><path fill="#005f7e" d="M4.40,13.00a1.5,1.5 0 1,0 3.0,0a1.5,1.5 0 1,0 -3.0,0zM15.30,13.00a1.5,1.5 0 1,0 3.0,0a1.5,1.5 0 1,0 -3.0,0z"/></g></g>
<g transform="translate(263.5,622.5)"><path fill="#005f7e" d="M0,17.1L-7.97,5.54A9.7,9.7 0 1 1 7.97,5.54Z"/><g transform="translate(-6.32,-5.60) scale(0.575)"><path fill="#fff" fill-rule="evenodd" d="M1,0H19.6Q20.7,0 20.7,1V3.7H19.2L22,7.6V12.7H0V1Q0,0 1,0ZM1.8,4.9V8H8.1V4.9Z M10,4.9V11.2H13.1V4.9Z M16,4.9V8H20.6L18.6,4.9Z"/><path fill="#fff" d="M3.00,13.00a2.9,2.9 0 1,0 5.8,0a2.9,2.9 0 1,0 -5.8,0zM13.90,13.00a2.9,2.9 0 1,0 5.8,0a2.9,2.9 0 1,0 -5.8,0z"/><path fill="#005f7e" d="M4.40,13.00a1.5,1.5 0 1,0 3.0,0a1.5,1.5 0 1,0 -3.0,0zM15.30,13.00a1.5,1.5 0 1,0 3.0,0a1.5,1.5 0 1,0 -3.0,0z"/></g></g>
<g transform="translate(149.5,619.5)"><path fill="#005f7e" d="M0,17.1L-7.97,5.54A9.7,9.7 0 1 1 7.97,5.54Z"/><g transform="translate(-6.32,-5.60) scale(0.575)"><path fill="#fff" fill-rule="evenodd" d="M1,0H19.6Q20.7,0 20.7,1V3.7H19.2L22,7.6V12.7H0V1Q0,0 1,0ZM1.8,4.9V8H8.1V4.9Z M10,4.9V11.2H13.1V4.9Z M16,4.9V8H20.6L18.6,4.9Z"/><path fill="#fff" d="M3.00,13.00a2.9,2.9 0 1,0 5.8,0a2.9,2.9 0 1,0 -5.8,0zM13.90,13.00a2.9,2.9 0 1,0 5.8,0a2.9,2.9 0 1,0 -5.8,0z"/><path fill="#005f7e" d="M4.40,13.00a1.5,1.5 0 1,0 3.0,0a1.5,1.5 0 1,0 -3.0,0zM15.30,13.00a1.5,1.5 0 1,0 3.0,0a1.5,1.5 0 1,0 -3.0,0z"/></g></g>
<g transform="translate(329.5,619.5)"><path fill="#005f7e" d="M0,17.1L-7.97,5.54A9.7,9.7 0 1 1 7.97,5.54Z"/><g transform="translate(-6.32,-5.60) scale(0.575)"><path fill="#fff" fill-rule="evenodd" d="M1,0H19.6Q20.7,0 20.7,1V3.7H19.2L22,7.6V12.7H0V1Q0,0 1,0ZM1.8,4.9V8H8.1V4.9Z M10,4.9V11.2H13.1V4.9Z M16,4.9V8H20.6L18.6,4.9Z"/><path fill="#fff" d="M3.00,13.00a2.9,2.9 0 1,0 5.8,0a2.9,2.9 0 1,0 -5.8,0zM13.90,13.00a2.9,2.9 0 1,0 5.8,0a2.9,2.9 0 1,0 -5.8,0z"/><path fill="#005f7e" d="M4.40,13.00a1.5,1.5 0 1,0 3.0,0a1.5,1.5 0 1,0 -3.0,0zM15.30,13.00a1.5,1.5 0 1,0 3.0,0a1.5,1.5 0 1,0 -3.0,0z"/></g></g>
<g transform="translate(78.5,614.5)"><path fill="#005f7e" d="M0,17.1L-7.97,5.54A9.7,9.7 0 1 1 7.97,5.54Z"/><g transform="translate(-6.32,-5.60) scale(0.575)"><path fill="#fff" fill-rule="evenodd" d="M1,0H19.6Q20.7,0 20.7,1V3.7H19.2L22,7.6V12.7H0V1Q0,0 1,0ZM1.8,4.9V8H8.1V4.9Z M10,4.9V11.2H13.1V4.9Z M16,4.9V8H20.6L18.6,4.9Z"/><path fill="#fff" d="M3.00,13.00a2.9,2.9 0 1,0 5.8,0a2.9,2.9 0 1,0 -5.8,0zM13.90,13.00a2.9,2.9 0 1,0 5.8,0a2.9,2.9 0 1,0 -5.8,0z"/><path fill="#005f7e" d="M4.40,13.00a1.5,1.5 0 1,0 3.0,0a1.5,1.5 0 1,0 -3.0,0zM15.30,13.00a1.5,1.5 0 1,0 3.0,0a1.5,1.5 0 1,0 -3.0,0z"/></g></g>
<g transform="translate(93.5,612.2)"><path fill="#1c62ae" d="M0,17.1L-7.97,5.54A9.7,9.7 0 1 1 7.97,5.54Z"/><text x="-2.9" y="0.6" font-family="Liberation Sans,sans-serif" font-size="10.5" fill="#fff" stroke="#fff" stroke-width="0.4" text-anchor="middle">P</text><text x="2.6" y="5.6" font-family="Liberation Sans,sans-serif" font-size="10.5" fill="#fff" stroke="#fff" stroke-width="0.4" text-anchor="middle">A</text></g>
<g transform="translate(63.5,607.2)"><path fill="#08644c" d="M0,17.1L-7.97,5.54A9.7,9.7 0 1 1 7.97,5.54Z"/><g transform="translate(-0.8,0.8)"><g transform="scale(0.5)"><path fill="#fff" fill-rule="evenodd" d="M-9.2,8.1V0.3L-7.2,-6.6Q-6.8,-8.1 -5.2,-8.1H5.2Q6.8,-8.1 7.2,-6.6L9.2,0.3V8.1H6V5.7H-6V8.1ZM-6.2,-1.6L-5,-5.8H5L6.2,-1.6Z"/><path fill="#08644c" d="M-6.65,1.60a1.15,1.15 0 1,0 2.3,0a1.15,1.15 0 1,0 -2.3,0zM4.25,1.60a1.15,1.15 0 1,0 2.3,0a1.15,1.15 0 1,0 -2.3,0z"/><circle cx="7" cy="-7.2" r="7.7" fill="#08644c"/><circle cx="7" cy="-7.2" r="5.65" fill="none" stroke="#fff" stroke-width="1.5"/><path d="M7,-10.8V-6.9L9.6,-5.5" stroke="#fff" stroke-width="1.3" fill="none"/></g></g></g>
<g transform="translate(264.5,599.5)"><path fill="#005f7e" d="M0,17.1L-7.97,5.54A9.7,9.7 0 1 1 7.97,5.54Z"/><g transform="translate(-6.32,-5.60) scale(0.575)"><path fill="#fff" fill-rule="evenodd" d="M1,0H19.6Q20.7,0 20.7,1V3.7H19.2L22,7.6V12.7H0V1Q0,0 1,0ZM1.8,4.9V8H8.1V4.9Z M10,4.9V11.2H13.1V4.9Z M16,4.9V8H20.6L18.6,4.9Z"/><path fill="#fff" d="M3.00,13.00a2.9,2.9 0 1,0 5.8,0a2.9,2.9 0 1,0 -5.8,0zM13.90,13.00a2.9,2.9 0 1,0 5.8,0a2.9,2.9 0 1,0 -5.8,0z"/><path fill="#005f7e" d="M4.40,13.00a1.5,1.5 0 1,0 3.0,0a1.5,1.5 0 1,0 -3.0,0zM15.30,13.00a1.5,1.5 0 1,0 3.0,0a1.5,1.5 0 1,0 -3.0,0z"/></g></g>
<g transform="translate(253.5,598.5)"><path fill="#005f7e" d="M0,17.1L-7.97,5.54A9.7,9.7 0 1 1 7.97,5.54Z"/><g transform="translate(-6.32,-5.60) scale(0.575)"><path fill="#fff" fill-rule="evenodd" d="M1,0H19.6Q20.7,0 20.7,1V3.7H19.2L22,7.6V12.7H0V1Q0,0 1,0ZM1.8,4.9V8H8.1V4.9Z M10,4.9V11.2H13.1V4.9Z M16,4.9V8H20.6L18.6,4.9Z"/><path fill="#fff" d="M3.00,13.00a2.9,2.9 0 1,0 5.8,0a2.9,2.9 0 1,0 -5.8,0zM13.90,13.00a2.9,2.9 0 1,0 5.8,0a2.9,2.9 0 1,0 -5.8,0z"/><path fill="#005f7e" d="M4.40,13.00a1.5,1.5 0 1,0 3.0,0a1.5,1.5 0 1,0 -3.0,0zM15.30,13.00a1.5,1.5 0 1,0 3.0,0a1.5,1.5 0 1,0 -3.0,0z"/></g></g>
<g transform="translate(329.5,598.5)"><path fill="#005f7e" d="M0,17.1L-7.97,5.54A9.7,9.7 0 1 1 7.97,5.54Z"/><g transform="translate(-6.32,-5.60) scale(0.575)"><path fill="#fff" fill-rule="evenodd" d="M1,0H19.6Q20.7,0 20.7,1V3.7H19.2L22,7.6V12.7H0V1Q0,0 1,0ZM1.8,4.9V8H8.1V4.9Z M10,4.9V11.2H13.1V4.9Z M16,4.9V8H20.6L18.6,4.9Z"/><path fill="#fff" d="M3.00,13.00a2.9,2.9 0 1,0 5.8,0a2.9,2.9 0 1,0 -5.8,0zM13.90,13.00a2.9,2.9 0 1,0 5.8,0a2.9,2.9 0 1,0 -5.8,0z"/><path fill="#005f7e" d="M4.40,13.00a1.5,1.5 0 1,0 3.0,0a1.5,1.5 0 1,0 -3.0,0zM15.30,13.00a1.5,1.5 0 1,0 3.0,0a1.5,1.5 0 1,0 -3.0,0z"/></g></g>
<g transform="translate(219.3,594.5)"><path fill="#005f7e" d="M0,17.1L-7.97,5.54A9.7,9.7 0 1 1 7.97,5.54Z"/><g transform="translate(-6.32,-5.60) scale(0.575)"><path fill="#fff" fill-rule="evenodd" d="M1,0H19.6Q20.7,0 20.7,1V3.7H19.2L22,7.6V12.7H0V1Q0,0 1,0ZM1.8,4.9V8H8.1V4.9Z M10,4.9V11.2H13.1V4.9Z M16,4.9V8H20.6L18.6,4.9Z"/><path fill="#fff" d="M3.00,13.00a2.9,2.9 0 1,0 5.8,0a2.9,2.9 0 1,0 -5.8,0zM13.90,13.00a2.9,2.9 0 1,0 5.8,0a2.9,2.9 0 1,0 -5.8,0z"/><path fill="#005f7e" d="M4.40,13.00a1.5,1.5 0 1,0 3.0,0a1.5,1.5 0 1,0 -3.0,0zM15.30,13.00a1.5,1.5 0 1,0 3.0,0a1.5,1.5 0 1,0 -3.0,0z"/></g></g>
<g transform="translate(325.5,590.5)"><path fill="#005f7e" d="M0,17.1L-7.97,5.54A9.7,9.7 0 1 1 7.97,5.54Z"/><g transform="translate(-6.32,-5.60) scale(0.575)"><path fill="#fff" fill-rule="evenodd" d="M1,0H19.6Q20.7,0 20.7,1V3.7H19.2L22,7.6V12.7H0V1Q0,0 1,0ZM1.8,4.9V8H8.1V4.9Z M10,4.9V11.2H13.1V4.9Z M16,4.9V8H20.6L18.6,4.9Z"/><path fill="#fff" d="M3.00,13.00a2.9,2.9 0 1,0 5.8,0a2.9,2.9 0 1,0 -5.8,0zM13.90,13.00a2.9,2.9 0 1,0 5.8,0a2.9,2.9 0 1,0 -5.8,0z"/><path fill="#005f7e" d="M4.40,13.00a1.5,1.5 0 1,0 3.0,0a1.5,1.5 0 1,0 -3.0,0zM15.30,13.00a1.5,1.5 0 1,0 3.0,0a1.5,1.5 0 1,0 -3.0,0z"/></g></g>
<g transform="translate(306.5,590.0)"><path fill="#005f7e" d="M0,17.1L-7.97,5.54A9.7,9.7 0 1 1 7.97,5.54Z"/><g transform="translate(-6.32,-5.60) scale(0.575)"><path fill="#fff" fill-rule="evenodd" d="M1,0H19.6Q20.7,0 20.7,1V3.7H19.2L22,7.6V12.7H0V1Q0,0 1,0ZM1.8,4.9V8H8.1V4.9Z M10,4.9V11.2H13.1V4.9Z M16,4.9V8H20.6L18.6,4.9Z"/><path fill="#fff" d="M3.00,13.00a2.9,2.9 0 1,0 5.8,0a2.9,2.9 0 1,0 -5.8,0zM13.90,13.00a2.9,2.9 0 1,0 5.8,0a2.9,2.9 0 1,0 -5.8,0z"/><path fill="#005f7e" d="M4.40,13.00a1.5,1.5 0 1,0 3.0,0a1.5,1.5 0 1,0 -3.0,0zM15.30,13.00a1.5,1.5 0 1,0 3.0,0a1.5,1.5 0 1,0 -3.0,0z"/></g></g>
<g transform="translate(115.5,589.5)"><path fill="#005f7e" d="M0,17.1L-7.97,5.54A9.7,9.7 0 1 1 7.97,5.54Z"/><g transform="translate(-6.32,-5.60) scale(0.575)"><path fill="#fff" fill-rule="evenodd" d="M1,0H19.6Q20.7,0 20.7,1V3.7H19.2L22,7.6V12.7H0V1Q0,0 1,0ZM1.8,4.9V8H8.1V4.9Z M10,4.9V11.2H13.1V4.9Z M16,4.9V8H20.6L18.6,4.9Z"/><path fill="#fff" d="M3.00,13.00a2.9,2.9 0 1,0 5.8,0a2.9,2.9 0 1,0 -5.8,0zM13.90,13.00a2.9,2.9 0 1,0 5.8,0a2.9,2.9 0 1,0 -5.8,0z"/><path fill="#005f7e" d="M4.40,13.00a1.5,1.5 0 1,0 3.0,0a1.5,1.5 0 1,0 -3.0,0zM15.30,13.00a1.5,1.5 0 1,0 3.0,0a1.5,1.5 0 1,0 -3.0,0z"/></g></g>
<g transform="translate(343.5,589.5)"><path fill="#005f7e" d="M0,17.1L-7.97,5.54A9.7,9.7 0 1 1 7.97,5.54Z"/><g transform="translate(-6.32,-5.60) scale(0.575)"><path fill="#fff" fill-rule="evenodd" d="M1,0H19.6Q20.7,0 20.7,1V3.7H19.2L22,7.6V12.7H0V1Q0,0 1,0ZM1.8,4.9V8H8.1V4.9Z M10,4.9V11.2H13.1V4.9Z M16,4.9V8H20.6L18.6,4.9Z"/><path fill="#fff" d="M3.00,13.00a2.9,2.9 0 1,0 5.8,0a2.9,2.9 0 1,0 -5.8,0zM13.90,13.00a2.9,2.9 0 1,0 5.8,0a2.9,2.9 0 1,0 -5.8,0z"/><path fill="#005f7e" d="M4.40,13.00a1.5,1.5 0 1,0 3.0,0a1.5,1.5 0 1,0 -3.0,0zM15.30,13.00a1.5,1.5 0 1,0 3.0,0a1.5,1.5 0 1,0 -3.0,0z"/></g></g>
<g transform="translate(337.5,587.0)"><path fill="#1c62ae" d="M0,17.1L-7.97,5.54A9.7,9.7 0 1 1 7.97,5.54Z"/><text x="-2.9" y="0.6" font-family="Liberation Sans,sans-serif" font-size="10.5" fill="#fff" stroke="#fff" stroke-width="0.4" text-anchor="middle">P</text><text x="2.6" y="5.6" font-family="Liberation Sans,sans-serif" font-size="10.5" fill="#fff" stroke="#fff" stroke-width="0.4" text-anchor="middle">A</text></g>
<g transform="translate(107.3,581.9)"><path fill="#005f7e" d="M0,17.1L-7.97,5.54A9.7,9.7 0 1 1 7.97,5.54Z"/><g transform="translate(-6.32,-5.60) scale(0.575)"><path fill="#fff" fill-rule="evenodd" d="M1,0H19.6Q20.7,0 20.7,1V3.7H19.2L22,7.6V12.7H0V1Q0,0 1,0ZM1.8,4.9V8H8.1V4.9Z M10,4.9V11.2H13.1V4.9Z M16,4.9V8H20.6L18.6,4.9Z"/><path fill="#fff" d="M3.00,13.00a2.9,2.9 0 1,0 5.8,0a2.9,2.9 0 1,0 -5.8,0zM13.90,13.00a2.9,2.9 0 1,0 5.8,0a2.9,2.9 0 1,0 -5.8,0z"/><path fill="#005f7e" d="M4.40,13.00a1.5,1.5 0 1,0 3.0,0a1.5,1.5 0 1,0 -3.0,0zM15.30,13.00a1.5,1.5 0 1,0 3.0,0a1.5,1.5 0 1,0 -3.0,0z"/></g></g>
<g transform="translate(202.1,575.5)"><path fill="#005f7e" d="M0,17.1L-7.97,5.54A9.7,9.7 0 1 1 7.97,5.54Z"/><g transform="translate(-6.32,-5.60) scale(0.575)"><path fill="#fff" fill-rule="evenodd" d="M1,0H19.6Q20.7,0 20.7,1V3.7H19.2L22,7.6V12.7H0V1Q0,0 1,0ZM1.8,4.9V8H8.1V4.9Z M10,4.9V11.2H13.1V4.9Z M16,4.9V8H20.6L18.6,4.9Z"/><path fill="#fff" d="M3.00,13.00a2.9,2.9 0 1,0 5.8,0a2.9,2.9 0 1,0 -5.8,0zM13.90,13.00a2.9,2.9 0 1,0 5.8,0a2.9,2.9 0 1,0 -5.8,0z"/><path fill="#005f7e" d="M4.40,13.00a1.5,1.5 0 1,0 3.0,0a1.5,1.5 0 1,0 -3.0,0zM15.30,13.00a1.5,1.5 0 1,0 3.0,0a1.5,1.5 0 1,0 -3.0,0z"/></g></g>
<g transform="translate(265.5,575.5)"><path fill="#005f7e" d="M0,17.1L-7.97,5.54A9.7,9.7 0 1 1 7.97,5.54Z"/><g transform="translate(-6.32,-5.60) scale(0.575)"><path fill="#fff" fill-rule="evenodd" d="M1,0H19.6Q20.7,0 20.7,1V3.7H19.2L22,7.6V12.7H0V1Q0,0 1,0ZM1.8,4.9V8H8.1V4.9Z M10,4.9V11.2H13.1V4.9Z M16,4.9V8H20.6L18.6,4.9Z"/><path fill="#fff" d="M3.00,13.00a2.9,2.9 0 1,0 5.8,0a2.9,2.9 0 1,0 -5.8,0zM13.90,13.00a2.9,2.9 0 1,0 5.8,0a2.9,2.9 0 1,0 -5.8,0z"/><path fill="#005f7e" d="M4.40,13.00a1.5,1.5 0 1,0 3.0,0a1.5,1.5 0 1,0 -3.0,0zM15.30,13.00a1.5,1.5 0 1,0 3.0,0a1.5,1.5 0 1,0 -3.0,0z"/></g></g>
<g transform="translate(91.5,573.0)"><path fill="#005f7e" d="M0,17.1L-7.97,5.54A9.7,9.7 0 1 1 7.97,5.54Z"/><g transform="translate(-6.32,-5.60) scale(0.575)"><path fill="#fff" fill-rule="evenodd" d="M1,0H19.6Q20.7,0 20.7,1V3.7H19.2L22,7.6V12.7H0V1Q0,0 1,0ZM1.8,4.9V8H8.1V4.9Z M10,4.9V11.2H13.1V4.9Z M16,4.9V8H20.6L18.6,4.9Z"/><path fill="#fff" d="M3.00,13.00a2.9,2.9 0 1,0 5.8,0a2.9,2.9 0 1,0 -5.8,0zM13.90,13.00a2.9,2.9 0 1,0 5.8,0a2.9,2.9 0 1,0 -5.8,0z"/><path fill="#005f7e" d="M4.40,13.00a1.5,1.5 0 1,0 3.0,0a1.5,1.5 0 1,0 -3.0,0zM15.30,13.00a1.5,1.5 0 1,0 3.0,0a1.5,1.5 0 1,0 -3.0,0z"/></g></g>
<g transform="translate(47.3,571.5)"><path fill="#005f7e" d="M0,17.1L-7.97,5.54A9.7,9.7 0 1 1 7.97,5.54Z"/><g transform="translate(-6.32,-5.60) scale(0.575)"><path fill="#fff" fill-rule="evenodd" d="M1,0H19.6Q20.7,0 20.7,1V3.7H19.2L22,7.6V12.7H0V1Q0,0 1,0ZM1.8,4.9V8H8.1V4.9Z M10,4.9V11.2H13.1V4.9Z M16,4.9V8H20.6L18.6,4.9Z"/><path fill="#fff" d="M3.00,13.00a2.9,2.9 0 1,0 5.8,0a2.9,2.9 0 1,0 -5.8,0zM13.90,13.00a2.9,2.9 0 1,0 5.8,0a2.9,2.9 0 1,0 -5.8,0z"/><path fill="#005f7e" d="M4.40,13.00a1.5,1.5 0 1,0 3.0,0a1.5,1.5 0 1,0 -3.0,0zM15.30,13.00a1.5,1.5 0 1,0 3.0,0a1.5,1.5 0 1,0 -3.0,0z"/></g></g>
<g transform="translate(163.5,571.5)"><path fill="#005f7e" d="M0,17.1L-7.97,5.54A9.7,9.7 0 1 1 7.97,5.54Z"/><g transform="translate(-6.32,-5.60) scale(0.575)"><path fill="#fff" fill-rule="evenodd" d="M1,0H19.6Q20.7,0 20.7,1V3.7H19.2L22,7.6V12.7H0V1Q0,0 1,0ZM1.8,4.9V8H8.1V4.9Z M10,4.9V11.2H13.1V4.9Z M16,4.9V8H20.6L18.6,4.9Z"/><path fill="#fff" d="M3.00,13.00a2.9,2.9 0 1,0 5.8,0a2.9,2.9 0 1,0 -5.8,0zM13.90,13.00a2.9,2.9 0 1,0 5.8,0a2.9,2.9 0 1,0 -5.8,0z"/><path fill="#005f7e" d="M4.40,13.00a1.5,1.5 0 1,0 3.0,0a1.5,1.5 0 1,0 -3.0,0zM15.30,13.00a1.5,1.5 0 1,0 3.0,0a1.5,1.5 0 1,0 -3.0,0z"/></g></g>
<g transform="translate(46.5,567.5)"><path fill="#005f7e" d="M0,17.1L-7.97,5.54A9.7,9.7 0 1 1 7.97,5.54Z"/><g transform="translate(-6.32,-5.60) scale(0.575)"><path fill="#fff" fill-rule="evenodd" d="M1,0H19.6Q20.7,0 20.7,1V3.7H19.2L22,7.6V12.7H0V1Q0,0 1,0ZM1.8,4.9V8H8.1V4.9Z M10,4.9V11.2H13.1V4.9Z M16,4.9V8H20.6L18.6,4.9Z"/><path fill="#fff" d="M3.00,13.00a2.9,2.9 0 1,0 5.8,0a2.9,2.9 0 1,0 -5.8,0zM13.90,13.00a2.9,2.9 0 1,0 5.8,0a2.9,2.9 0 1,0 -5.8,0z"/><path fill="#005f7e" d="M4.40,13.00a1.5,1.5 0 1,0 3.0,0a1.5,1.5 0 1,0 -3.0,0zM15.30,13.00a1.5,1.5 0 1,0 3.0,0a1.5,1.5 0 1,0 -3.0,0z"/></g></g>
<g transform="translate(90.1,567.2)"><path fill="#005f7e" d="M0,17.1L-7.97,5.54A9.7,9.7 0 1 1 7.97,5.54Z"/><g transform="translate(-6.32,-5.60) scale(0.575)"><path fill="#fff" fill-rule="evenodd" d="M1,0H19.6Q20.7,0 20.7,1V3.7H19.2L22,7.6V12.7H0V1Q0,0 1,0ZM1.8,4.9V8H8.1V4.9Z M10,4.9V11.2H13.1V4.9Z M16,4.9V8H20.6L18.6,4.9Z"/><path fill="#fff" d="M3.00,13.00a2.9,2.9 0 1,0 5.8,0a2.9,2.9 0 1,0 -5.8,0zM13.90,13.00a2.9,2.9 0 1,0 5.8,0a2.9,2.9 0 1,0 -5.8,0z"/><path fill="#005f7e" d="M4.40,13.00a1.5,1.5 0 1,0 3.0,0a1.5,1.5 0 1,0 -3.0,0zM15.30,13.00a1.5,1.5 0 1,0 3.0,0a1.5,1.5 0 1,0 -3.0,0z"/></g></g>
<g transform="translate(65.2,566.0)"><path fill="#c8102e" d="M0,17.1L-7.97,5.54A9.7,9.7 0 1 1 7.97,5.54Z"/><text x="0" y="5.2" font-family="Liberation Sans,sans-serif" font-size="12.6" font-weight="bold" fill="#fff" text-anchor="middle" textLength="12" lengthAdjust="spacingAndGlyphs">GS</text><ellipse cx="-2.9" cy="-5.3" rx="4.2" ry="1.6" transform="rotate(-12 -2.9 -5.3)" stroke="#ffc61a" stroke-width="0.8" fill="none"/></g>
<g transform="translate(163.5,562.2)"><path fill="#005f7e" d="M0,17.1L-7.97,5.54A9.7,9.7 0 1 1 7.97,5.54Z"/><g transform="translate(-6.32,-5.60) scale(0.575)"><path fill="#fff" fill-rule="evenodd" d="M1,0H19.6Q20.7,0 20.7,1V3.7H19.2L22,7.6V12.7H0V1Q0,0 1,0ZM1.8,4.9V8H8.1V4.9Z M10,4.9V11.2H13.1V4.9Z M16,4.9V8H20.6L18.6,4.9Z"/><path fill="#fff" d="M3.00,13.00a2.9,2.9 0 1,0 5.8,0a2.9,2.9 0 1,0 -5.8,0zM13.90,13.00a2.9,2.9 0 1,0 5.8,0a2.9,2.9 0 1,0 -5.8,0z"/><path fill="#005f7e" d="M4.40,13.00a1.5,1.5 0 1,0 3.0,0a1.5,1.5 0 1,0 -3.0,0zM15.30,13.00a1.5,1.5 0 1,0 3.0,0a1.5,1.5 0 1,0 -3.0,0z"/></g></g>
<g transform="translate(332.4,558.5)"><path fill="#c8102e" d="M0,17.1L-7.97,5.54A9.7,9.7 0 1 1 7.97,5.54Z"/><text x="0" y="5.2" font-family="Liberation Sans,sans-serif" font-size="12.6" font-weight="bold" fill="#fff" text-anchor="middle" textLength="12" lengthAdjust="spacingAndGlyphs">GS</text><ellipse cx="-2.9" cy="-5.3" rx="4.2" ry="1.6" transform="rotate(-12 -2.9 -5.3)" stroke="#ffc61a" stroke-width="0.8" fill="none"/></g>
<g transform="translate(32.4,556.0)"><path fill="#c8102e" d="M0,17.1L-7.97,5.54A9.7,9.7 0 1 1 7.97,5.54Z"/><text x="0" y="5.2" font-family="Liberation Sans,sans-serif" font-size="12.6" font-weight="bold" fill="#fff" text-anchor="middle" textLength="12" lengthAdjust="spacingAndGlyphs">GS</text><ellipse cx="-2.9" cy="-5.3" rx="4.2" ry="1.6" transform="rotate(-12 -2.9 -5.3)" stroke="#ffc61a" stroke-width="0.8" fill="none"/></g>
<g transform="translate(121.5,553.5)"><path fill="#005f7e" d="M0,17.1L-7.97,5.54A9.7,9.7 0 1 1 7.97,5.54Z"/><g transform="translate(-6.32,-5.60) scale(0.575)"><path fill="#fff" fill-rule="evenodd" d="M1,0H19.6Q20.7,0 20.7,1V3.7H19.2L22,7.6V12.7H0V1Q0,0 1,0ZM1.8,4.9V8H8.1V4.9Z M10,4.9V11.2H13.1V4.9Z M16,4.9V8H20.6L18.6,4.9Z"/><path fill="#fff" d="M3.00,13.00a2.9,2.9 0 1,0 5.8,0a2.9,2.9 0 1,0 -5.8,0zM13.90,13.00a2.9,2.9 0 1,0 5.8,0a2.9,2.9 0 1,0 -5.8,0z"/><path fill="#005f7e" d="M4.40,13.00a1.5,1.5 0 1,0 3.0,0a1.5,1.5 0 1,0 -3.0,0zM15.30,13.00a1.5,1.5 0 1,0 3.0,0a1.5,1.5 0 1,0 -3.0,0z"/></g></g>
<g transform="translate(49.0,553.5)"><path fill="#005f7e" d="M0,17.1L-7.97,5.54A9.7,9.7 0 1 1 7.97,5.54Z"/><g transform="translate(-6.32,-5.60) scale(0.575)"><path fill="#fff" fill-rule="evenodd" d="M1,0H19.6Q20.7,0 20.7,1V3.7H19.2L22,7.6V12.7H0V1Q0,0 1,0ZM1.8,4.9V8H8.1V4.9Z M10,4.9V11.2H13.1V4.9Z M16,4.9V8H20.6L18.6,4.9Z"/><path fill="#fff" d="M3.00,13.00a2.9,2.9 0 1,0 5.8,0a2.9,2.9 0 1,0 -5.8,0zM13.90,13.00a2.9,2.9 0 1,0 5.8,0a2.9,2.9 0 1,0 -5.8,0z"/><path fill="#005f7e" d="M4.40,13.00a1.5,1.5 0 1,0 3.0,0a1.5,1.5 0 1,0 -3.0,0zM15.30,13.00a1.5,1.5 0 1,0 3.0,0a1.5,1.5 0 1,0 -3.0,0z"/></g></g>
<g transform="translate(89.5,549.5)"><path fill="#005f7e" d="M0,17.1L-7.97,5.54A9.7,9.7 0 1 1 7.97,5.54Z"/><g transform="translate(-6.32,-5.60) scale(0.575)"><path fill="#fff" fill-rule="evenodd" d="M1,0H19.6Q20.7,0 20.7,1V3.7H19.2L22,7.6V12.7H0V1Q0,0 1,0ZM1.8,4.9V8H8.1V4.9Z M10,4.9V11.2H13.1V4.9Z M16,4.9V8H20.6L18.6,4.9Z"/><path fill="#fff" d="M3.00,13.00a2.9,2.9 0 1,0 5.8,0a2.9,2.9 0 1,0 -5.8,0zM13.90,13.00a2.9,2.9 0 1,0 5.8,0a2.9,2.9 0 1,0 -5.8,0z"/><path fill="#005f7e" d="M4.40,13.00a1.5,1.5 0 1,0 3.0,0a1.5,1.5 0 1,0 -3.0,0zM15.30,13.00a1.5,1.5 0 1,0 3.0,0a1.5,1.5 0 1,0 -3.0,0z"/></g></g>
<g transform="translate(113.3,546.0)"><path fill="#005f7e" d="M0,17.1L-7.97,5.54A9.7,9.7 0 1 1 7.97,5.54Z"/><g transform="translate(-6.32,-5.60) scale(0.575)"><path fill="#fff" fill-rule="evenodd" d="M1,0H19.6Q20.7,0 20.7,1V3.7H19.2L22,7.6V12.7H0V1Q0,0 1,0ZM1.8,4.9V8H8.1V4.9Z M10,4.9V11.2H13.1V4.9Z M16,4.9V8H20.6L18.6,4.9Z"/><path fill="#fff" d="M3.00,13.00a2.9,2.9 0 1,0 5.8,0a2.9,2.9 0 1,0 -5.8,0zM13.90,13.00a2.9,2.9 0 1,0 5.8,0a2.9,2.9 0 1,0 -5.8,0z"/><path fill="#005f7e" d="M4.40,13.00a1.5,1.5 0 1,0 3.0,0a1.5,1.5 0 1,0 -3.0,0zM15.30,13.00a1.5,1.5 0 1,0 3.0,0a1.5,1.5 0 1,0 -3.0,0z"/></g></g>
<g transform="translate(58.5,546.0)"><path fill="#1c62ae" d="M0,17.1L-7.97,5.54A9.7,9.7 0 1 1 7.97,5.54Z"/><text x="-2.9" y="0.6" font-family="Liberation Sans,sans-serif" font-size="10.5" fill="#fff" stroke="#fff" stroke-width="0.4" text-anchor="middle">P</text><text x="2.6" y="5.6" font-family="Liberation Sans,sans-serif" font-size="10.5" fill="#fff" stroke="#fff" stroke-width="0.4" text-anchor="middle">A</text></g>
<g transform="translate(177.2,544.5)"><path fill="#1c62ae" d="M0,17.1L-7.97,5.54A9.7,9.7 0 1 1 7.97,5.54Z"/><text x="-2.9" y="0.6" font-family="Liberation Sans,sans-serif" font-size="10.5" fill="#fff" stroke="#fff" stroke-width="0.4" text-anchor="middle">P</text><text x="2.6" y="5.6" font-family="Liberation Sans,sans-serif" font-size="10.5" fill="#fff" stroke="#fff" stroke-width="0.4" text-anchor="middle">A</text></g>
<g transform="translate(75.9,536.1)"><path fill="#005f7e" d="M0,17.1L-7.97,5.54A9.7,9.7 0 1 1 7.97,5.54Z"/><g transform="translate(-6.32,-5.60) scale(0.575)"><path fill="#fff" fill-rule="evenodd" d="M1,0H19.6Q20.7,0 20.7,1V3.7H19.2L22,7.6V12.7H0V1Q0,0 1,0ZM1.8,4.9V8H8.1V4.9Z M10,4.9V11.2H13.1V4.9Z M16,4.9V8H20.6L18.6,4.9Z"/><path fill="#fff" d="M3.00,13.00a2.9,2.9 0 1,0 5.8,0a2.9,2.9 0 1,0 -5.8,0zM13.90,13.00a2.9,2.9 0 1,0 5.8,0a2.9,2.9 0 1,0 -5.8,0z"/><path fill="#005f7e" d="M4.40,13.00a1.5,1.5 0 1,0 3.0,0a1.5,1.5 0 1,0 -3.0,0zM15.30,13.00a1.5,1.5 0 1,0 3.0,0a1.5,1.5 0 1,0 -3.0,0z"/></g></g>
<g transform="translate(454.5,536.1)"><path fill="#005f7e" d="M0,17.1L-7.97,5.54A9.7,9.7 0 1 1 7.97,5.54Z"/><g transform="translate(-6.32,-5.60) scale(0.575)"><path fill="#fff" fill-rule="evenodd" d="M1,0H19.6Q20.7,0 20.7,1V3.7H19.2L22,7.6V12.7H0V1Q0,0 1,0ZM1.8,4.9V8H8.1V4.9Z M10,4.9V11.2H13.1V4.9Z M16,4.9V8H20.6L18.6,4.9Z"/><path fill="#fff" d="M3.00,13.00a2.9,2.9 0 1,0 5.8,0a2.9,2.9 0 1,0 -5.8,0zM13.90,13.00a2.9,2.9 0 1,0 5.8,0a2.9,2.9 0 1,0 -5.8,0z"/><path fill="#005f7e" d="M4.40,13.00a1.5,1.5 0 1,0 3.0,0a1.5,1.5 0 1,0 -3.0,0zM15.30,13.00a1.5,1.5 0 1,0 3.0,0a1.5,1.5 0 1,0 -3.0,0z"/></g></g>
<g transform="translate(149.9,531.1)"><path fill="#005f7e" d="M0,17.1L-7.97,5.54A9.7,9.7 0 1 1 7.97,5.54Z"/><g transform="translate(-6.32,-5.60) scale(0.575)"><path fill="#fff" fill-rule="evenodd" d="M1,0H19.6Q20.7,0 20.7,1V3.7H19.2L22,7.6V12.7H0V1Q0,0 1,0ZM1.8,4.9V8H8.1V4.9Z M10,4.9V11.2H13.1V4.9Z M16,4.9V8H20.6L18.6,4.9Z"/><path fill="#fff" d="M3.00,13.00a2.9,2.9 0 1,0 5.8,0a2.9,2.9 0 1,0 -5.8,0zM13.90,13.00a2.9,2.9 0 1,0 5.8,0a2.9,2.9 0 1,0 -5.8,0z"/><path fill="#005f7e" d="M4.40,13.00a1.5,1.5 0 1,0 3.0,0a1.5,1.5 0 1,0 -3.0,0zM15.30,13.00a1.5,1.5 0 1,0 3.0,0a1.5,1.5 0 1,0 -3.0,0z"/></g></g>
<g transform="translate(219.5,528.5)"><path fill="#005f7e" d="M0,17.1L-7.97,5.54A9.7,9.7 0 1 1 7.97,5.54Z"/><g transform="translate(-6.32,-5.60) scale(0.575)"><path fill="#fff" fill-rule="evenodd" d="M1,0H19.6Q20.7,0 20.7,1V3.7H19.2L22,7.6V12.7H0V1Q0,0 1,0ZM1.8,4.9V8H8.1V4.9Z M10,4.9V11.2H13.1V4.9Z M16,4.9V8H20.6L18.6,4.9Z"/><path fill="#fff" d="M3.00,13.00a2.9,2.9 0 1,0 5.8,0a2.9,2.9 0 1,0 -5.8,0zM13.90,13.00a2.9,2.9 0 1,0 5.8,0a2.9,2.9 0 1,0 -5.8,0z"/><path fill="#005f7e" d="M4.40,13.00a1.5,1.5 0 1,0 3.0,0a1.5,1.5 0 1,0 -3.0,0zM15.30,13.00a1.5,1.5 0 1,0 3.0,0a1.5,1.5 0 1,0 -3.0,0z"/></g></g>
<g transform="translate(167.8,526.1)"><path fill="#005f7e" d="M0,17.1L-7.97,5.54A9.7,9.7 0 1 1 7.97,5.54Z"/><g transform="translate(-6.32,-5.60) scale(0.575)"><path fill="#fff" fill-rule="evenodd" d="M1,0H19.6Q20.7,0 20.7,1V3.7H19.2L22,7.6V12.7H0V1Q0,0 1,0ZM1.8,4.9V8H8.1V4.9Z M10,4.9V11.2H13.1V4.9Z M16,4.9V8H20.6L18.6,4.9Z"/><path fill="#fff" d="M3.00,13.00a2.9,2.9 0 1,0 5.8,0a2.9,2.9 0 1,0 -5.8,0zM13.90,13.00a2.9,2.9 0 1,0 5.8,0a2.9,2.9 0 1,0 -5.8,0z"/><path fill="#005f7e" d="M4.40,13.00a1.5,1.5 0 1,0 3.0,0a1.5,1.5 0 1,0 -3.0,0zM15.30,13.00a1.5,1.5 0 1,0 3.0,0a1.5,1.5 0 1,0 -3.0,0z"/></g></g>
<g transform="translate(299.2,521.1)"><path fill="#005f7e" d="M0,17.1L-7.97,5.54A9.7,9.7 0 1 1 7.97,5.54Z"/><g transform="translate(-6.32,-5.60) scale(0.575)"><path fill="#fff" fill-rule="evenodd" d="M1,0H19.6Q20.7,0 20.7,1V3.7H19.2L22,7.6V12.7H0V1Q0,0 1,0ZM1.8,4.9V8H8.1V4.9Z M10,4.9V11.2H13.1V4.9Z M16,4.9V8H20.6L18.6,4.9Z"/><path fill="#fff" d="M3.00,13.00a2.9,2.9 0 1,0 5.8,0a2.9,2.9 0 1,0 -5.8,0zM13.90,13.00a2.9,2.9 0 1,0 5.8,0a2.9,2.9 0 1,0 -5.8,0z"/><path fill="#005f7e" d="M4.40,13.00a1.5,1.5 0 1,0 3.0,0a1.5,1.5 0 1,0 -3.0,0zM15.30,13.00a1.5,1.5 0 1,0 3.0,0a1.5,1.5 0 1,0 -3.0,0z"/></g></g>
<g transform="translate(303.0,521.1)"><path fill="#005f7e" d="M0,17.1L-7.97,5.54A9.7,9.7 0 1 1 7.97,5.54Z"/><g transform="translate(-6.32,-5.60) scale(0.575)"><path fill="#fff" fill-rule="evenodd" d="M1,0H19.6Q20.7,0 20.7,1V3.7H19.2L22,7.6V12.7H0V1Q0,0 1,0ZM1.8,4.9V8H8.1V4.9Z M10,4.9V11.2H13.1V4.9Z M16,4.9V8H20.6L18.6,4.9Z"/><path fill="#fff" d="M3.00,13.00a2.9,2.9 0 1,0 5.8,0a2.9,2.9 0 1,0 -5.8,0zM13.90,13.00a2.9,2.9 0 1,0 5.8,0a2.9,2.9 0 1,0 -5.8,0z"/><path fill="#005f7e" d="M4.40,13.00a1.5,1.5 0 1,0 3.0,0a1.5,1.5 0 1,0 -3.0,0zM15.30,13.00a1.5,1.5 0 1,0 3.0,0a1.5,1.5 0 1,0 -3.0,0z"/></g></g>
<g transform="translate(476.0,519.5)"><path fill="#005f7e" d="M0,17.1L-7.97,5.54A9.7,9.7 0 1 1 7.97,5.54Z"/><g transform="translate(-6.32,-5.60) scale(0.575)"><path fill="#fff" fill-rule="evenodd" d="M1,0H19.6Q20.7,0 20.7,1V3.7H19.2L22,7.6V12.7H0V1Q0,0 1,0ZM1.8,4.9V8H8.1V4.9Z M10,4.9V11.2H13.1V4.9Z M16,4.9V8H20.6L18.6,4.9Z"/><path fill="#fff" d="M3.00,13.00a2.9,2.9 0 1,0 5.8,0a2.9,2.9 0 1,0 -5.8,0zM13.90,13.00a2.9,2.9 0 1,0 5.8,0a2.9,2.9 0 1,0 -5.8,0z"/><path fill="#005f7e" d="M4.40,13.00a1.5,1.5 0 1,0 3.0,0a1.5,1.5 0 1,0 -3.0,0zM15.30,13.00a1.5,1.5 0 1,0 3.0,0a1.5,1.5 0 1,0 -3.0,0z"/></g></g>
<g transform="translate(23.5,515.5)"><path fill="#005f7e" d="M0,17.1L-7.97,5.54A9.7,9.7 0 1 1 7.97,5.54Z"/><g transform="translate(-6.32,-5.60) scale(0.575)"><path fill="#fff" fill-rule="evenodd" d="M1,0H19.6Q20.7,0 20.7,1V3.7H19.2L22,7.6V12.7H0V1Q0,0 1,0ZM1.8,4.9V8H8.1V4.9Z M10,4.9V11.2H13.1V4.9Z M16,4.9V8H20.6L18.6,4.9Z"/><path fill="#fff" d="M3.00,13.00a2.9,2.9 0 1,0 5.8,0a2.9,2.9 0 1,0 -5.8,0zM13.90,13.00a2.9,2.9 0 1,0 5.8,0a2.9,2.9 0 1,0 -5.8,0z"/><path fill="#005f7e" d="M4.40,13.00a1.5,1.5 0 1,0 3.0,0a1.5,1.5 0 1,0 -3.0,0zM15.30,13.00a1.5,1.5 0 1,0 3.0,0a1.5,1.5 0 1,0 -3.0,0z"/></g></g>
<g transform="translate(248.2,514.9)"><path fill="#005f7e" d="M0,17.1L-7.97,5.54A9.7,9.7 0 1 1 7.97,5.54Z"/><g transform="translate(-6.32,-5.60) scale(0.575)"><path fill="#fff" fill-rule="evenodd" d="M1,0H19.6Q20.7,0 20.7,1V3.7H19.2L22,7.6V12.7H0V1Q0,0 1,0ZM1.8,4.9V8H8.1V4.9Z M10,4.9V11.2H13.1V4.9Z M16,4.9V8H20.6L18.6,4.9Z"/><path fill="#fff" d="M3.00,13.00a2.9,2.9 0 1,0 5.8,0a2.9,2.9 0 1,0 -5.8,0zM13.90,13.00a2.9,2.9 0 1,0 5.8,0a2.9,2.9 0 1,0 -5.8,0z"/><path fill="#005f7e" d="M4.40,13.00a1.5,1.5 0 1,0 3.0,0a1.5,1.5 0 1,0 -3.0,0zM15.30,13.00a1.5,1.5 0 1,0 3.0,0a1.5,1.5 0 1,0 -3.0,0z"/></g></g>
<g transform="translate(19.2,514.9)"><path fill="#005f7e" d="M0,17.1L-7.97,5.54A9.7,9.7 0 1 1 7.97,5.54Z"/><g transform="translate(-6.32,-5.60) scale(0.575)"><path fill="#fff" fill-rule="evenodd" d="M1,0H19.6Q20.7,0 20.7,1V3.7H19.2L22,7.6V12.7H0V1Q0,0 1,0ZM1.8,4.9V8H8.1V4.9Z M10,4.9V11.2H13.1V4.9Z M16,4.9V8H20.6L18.6,4.9Z"/><path fill="#fff" d="M3.00,13.00a2.9,2.9 0 1,0 5.8,0a2.9,2.9 0 1,0 -5.8,0zM13.90,13.00a2.9,2.9 0 1,0 5.8,0a2.9,2.9 0 1,0 -5.8,0z"/><path fill="#005f7e" d="M4.40,13.00a1.5,1.5 0 1,0 3.0,0a1.5,1.5 0 1,0 -3.0,0zM15.30,13.00a1.5,1.5 0 1,0 3.0,0a1.5,1.5 0 1,0 -3.0,0z"/></g></g>
<g transform="translate(397.5,509.9)"><path fill="#005f7e" d="M0,17.1L-7.97,5.54A9.7,9.7 0 1 1 7.97,5.54Z"/><g transform="translate(-6.32,-5.60) scale(0.575)"><path fill="#fff" fill-rule="evenodd" d="M1,0H19.6Q20.7,0 20.7,1V3.7H19.2L22,7.6V12.7H0V1Q0,0 1,0ZM1.8,4.9V8H8.1V4.9Z M10,4.9V11.2H13.1V4.9Z M16,4.9V8H20.6L18.6,4.9Z"/><path fill="#fff" d="M3.00,13.00a2.9,2.9 0 1,0 5.8,0a2.9,2.9 0 1,0 -5.8,0zM13.90,13.00a2.9,2.9 0 1,0 5.8,0a2.9,2.9 0 1,0 -5.8,0z"/><path fill="#005f7e" d="M4.40,13.00a1.5,1.5 0 1,0 3.0,0a1.5,1.5 0 1,0 -3.0,0zM15.30,13.00a1.5,1.5 0 1,0 3.0,0a1.5,1.5 0 1,0 -3.0,0z"/></g></g>
<g transform="translate(279.3,507.5)"><path fill="#005f7e" d="M0,17.1L-7.97,5.54A9.7,9.7 0 1 1 7.97,5.54Z"/><g transform="translate(-6.32,-5.60) scale(0.575)"><path fill="#fff" fill-rule="evenodd" d="M1,0H19.6Q20.7,0 20.7,1V3.7H19.2L22,7.6V12.7H0V1Q0,0 1,0ZM1.8,4.9V8H8.1V4.9Z M10,4.9V11.2H13.1V4.9Z M16,4.9V8H20.6L18.6,4.9Z"/><path fill="#fff" d="M3.00,13.00a2.9,2.9 0 1,0 5.8,0a2.9,2.9 0 1,0 -5.8,0zM13.90,13.00a2.9,2.9 0 1,0 5.8,0a2.9,2.9 0 1,0 -5.8,0z"/><path fill="#005f7e" d="M4.40,13.00a1.5,1.5 0 1,0 3.0,0a1.5,1.5 0 1,0 -3.0,0zM15.30,13.00a1.5,1.5 0 1,0 3.0,0a1.5,1.5 0 1,0 -3.0,0z"/></g></g>
<g transform="translate(385.1,507.5)"><path fill="#08644c" d="M0,17.1L-7.97,5.54A9.7,9.7 0 1 1 7.97,5.54Z"/><g transform="translate(-0.8,0.8)"><g transform="scale(0.5)"><path fill="#fff" fill-rule="evenodd" d="M-9.2,8.1V0.3L-7.2,-6.6Q-6.8,-8.1 -5.2,-8.1H5.2Q6.8,-8.1 7.2,-6.6L9.2,0.3V8.1H6V5.7H-6V8.1ZM-6.2,-1.6L-5,-5.8H5L6.2,-1.6Z"/><path fill="#08644c" d="M-6.65,1.60a1.15,1.15 0 1,0 2.3,0a1.15,1.15 0 1,0 -2.3,0zM4.25,1.60a1.15,1.15 0 1,0 2.3,0a1.15,1.15 0 1,0 -2.3,0z"/><circle cx="7" cy="-7.2" r="7.7" fill="#08644c"/><circle cx="7" cy="-7.2" r="5.65" fill="none" stroke="#fff" stroke-width="1.5"/><path d="M7,-10.8V-6.9L9.6,-5.5" stroke="#fff" stroke-width="1.3" fill="none"/></g></g></g>
<g transform="translate(499.5,506.2)"><path fill="#005f7e" d="M0,17.1L-7.97,5.54A9.7,9.7 0 1 1 7.97,5.54Z"/><g transform="translate(-6.32,-5.60) scale(0.575)"><path fill="#fff" fill-rule="evenodd" d="M1,0H19.6Q20.7,0 20.7,1V3.7H19.2L22,7.6V12.7H0V1Q0,0 1,0ZM1.8,4.9V8H8.1V4.9Z M10,4.9V11.2H13.1V4.9Z M16,4.9V8H20.6L18.6,4.9Z"/><path fill="#fff" d="M3.00,13.00a2.9,2.9 0 1,0 5.8,0a2.9,2.9 0 1,0 -5.8,0zM13.90,13.00a2.9,2.9 0 1,0 5.8,0a2.9,2.9 0 1,0 -5.8,0z"/><path fill="#005f7e" d="M4.40,13.00a1.5,1.5 0 1,0 3.0,0a1.5,1.5 0 1,0 -3.0,0zM15.30,13.00a1.5,1.5 0 1,0 3.0,0a1.5,1.5 0 1,0 -3.0,0z"/></g></g>
<g transform="translate(162.3,505.0)"><path fill="#005f7e" d="M0,17.1L-7.97,5.54A9.7,9.7 0 1 1 7.97,5.54Z"/><g transform="translate(-6.32,-5.60) scale(0.575)"><path fill="#fff" fill-rule="evenodd" d="M1,0H19.6Q20.7,0 20.7,1V3.7H19.2L22,7.6V12.7H0V1Q0,0 1,0ZM1.8,4.9V8H8.1V4.9Z M10,4.9V11.2H13.1V4.9Z M16,4.9V8H20.6L18.6,4.9Z"/><path fill="#fff" d="M3.00,13.00a2.9,2.9 0 1,0 5.8,0a2.9,2.9 0 1,0 -5.8,0zM13.90,13.00a2.9,2.9 0 1,0 5.8,0a2.9,2.9 0 1,0 -5.8,0z"/><path fill="#005f7e" d="M4.40,13.00a1.5,1.5 0 1,0 3.0,0a1.5,1.5 0 1,0 -3.0,0zM15.30,13.00a1.5,1.5 0 1,0 3.0,0a1.5,1.5 0 1,0 -3.0,0z"/></g></g>
<g transform="translate(253.9,503.5)"><path fill="#1c62ae" d="M0,17.1L-7.97,5.54A9.7,9.7 0 1 1 7.97,5.54Z"/><text x="-2.9" y="0.6" font-family="Liberation Sans,sans-serif" font-size="10.5" fill="#fff" stroke="#fff" stroke-width="0.4" text-anchor="middle">P</text><text x="2.6" y="5.6" font-family="Liberation Sans,sans-serif" font-size="10.5" fill="#fff" stroke="#fff" stroke-width="0.4" text-anchor="middle">A</text></g>
<g transform="translate(124.2,502.5)"><path fill="#005f7e" d="M0,17.1L-7.97,5.54A9.7,9.7 0 1 1 7.97,5.54Z"/><g transform="translate(-6.32,-5.60) scale(0.575)"><path fill="#fff" fill-rule="evenodd" d="M1,0H19.6Q20.7,0 20.7,1V3.7H19.2L22,7.6V12.7H0V1Q0,0 1,0ZM1.8,4.9V8H8.1V4.9Z M10,4.9V11.2H13.1V4.9Z M16,4.9V8H20.6L18.6,4.9Z"/><path fill="#fff" d="M3.00,13.00a2.9,2.9 0 1,0 5.8,0a2.9,2.9 0 1,0 -5.8,0zM13.90,13.00a2.9,2.9 0 1,0 5.8,0a2.9,2.9 0 1,0 -5.8,0z"/><path fill="#005f7e" d="M4.40,13.00a1.5,1.5 0 1,0 3.0,0a1.5,1.5 0 1,0 -3.0,0zM15.30,13.00a1.5,1.5 0 1,0 3.0,0a1.5,1.5 0 1,0 -3.0,0z"/></g></g>
<g transform="translate(350.3,502.5)"><path fill="#08644c" d="M0,17.1L-7.97,5.54A9.7,9.7 0 1 1 7.97,5.54Z"/><g transform="translate(-0.8,0.8)"><g transform="scale(0.5)"><path fill="#fff" fill-rule="evenodd" d="M-9.2,8.1V0.3L-7.2,-6.6Q-6.8,-8.1 -5.2,-8.1H5.2Q6.8,-8.1 7.2,-6.6L9.2,0.3V8.1H6V5.7H-6V8.1ZM-6.2,-1.6L-5,-5.8H5L6.2,-1.6Z"/><path fill="#08644c" d="M-6.65,1.60a1.15,1.15 0 1,0 2.3,0a1.15,1.15 0 1,0 -2.3,0zM4.25,1.60a1.15,1.15 0 1,0 2.3,0a1.15,1.15 0 1,0 -2.3,0z"/><circle cx="7" cy="-7.2" r="7.7" fill="#08644c"/><circle cx="7" cy="-7.2" r="5.65" fill="none" stroke="#fff" stroke-width="1.5"/><path d="M7,-10.8V-6.9L9.6,-5.5" stroke="#fff" stroke-width="1.3" fill="none"/></g></g></g>
<g transform="translate(173.5,501.2)"><path fill="#005f7e" d="M0,17.1L-7.97,5.54A9.7,9.7 0 1 1 7.97,5.54Z"/><g transform="translate(-6.32,-5.60) scale(0.575)"><path fill="#fff" fill-rule="evenodd" d="M1,0H19.6Q20.7,0 20.7,1V3.7H19.2L22,7.6V12.7H0V1Q0,0 1,0ZM1.8,4.9V8H8.1V4.9Z M10,4.9V11.2H13.1V4.9Z M16,4.9V8H20.6L18.6,4.9Z"/><path fill="#fff" d="M3.00,13.00a2.9,2.9 0 1,0 5.8,0a2.9,2.9 0 1,0 -5.8,0zM13.90,13.00a2.9,2.9 0 1,0 5.8,0a2.9,2.9 0 1,0 -5.8,0z"/><path fill="#005f7e" d="M4.40,13.00a1.5,1.5 0 1,0 3.0,0a1.5,1.5 0 1,0 -3.0,0zM15.30,13.00a1.5,1.5 0 1,0 3.0,0a1.5,1.5 0 1,0 -3.0,0z"/></g></g>
<g transform="translate(408.5,501.2)"><path fill="#005f7e" d="M0,17.1L-7.97,5.54A9.7,9.7 0 1 1 7.97,5.54Z"/><g transform="translate(-6.32,-5.60) scale(0.575)"><path fill="#fff" fill-rule="evenodd" d="M1,0H19.6Q20.7,0 20.7,1V3.7H19.2L22,7.6V12.7H0V1Q0,0 1,0ZM1.8,4.9V8H8.1V4.9Z M10,4.9V11.2H13.1V4.9Z M16,4.9V8H20.6L18.6,4.9Z"/><path fill="#fff" d="M3.00,13.00a2.9,2.9 0 1,0 5.8,0a2.9,2.9 0 1,0 -5.8,0zM13.90,13.00a2.9,2.9 0 1,0 5.8,0a2.9,2.9 0 1,0 -5.8,0z"/><path fill="#005f7e" d="M4.40,13.00a1.5,1.5 0 1,0 3.0,0a1.5,1.5 0 1,0 -3.0,0zM15.30,13.00a1.5,1.5 0 1,0 3.0,0a1.5,1.5 0 1,0 -3.0,0z"/></g></g>
<g transform="translate(146.5,497.5)"><path fill="#08643f" d="M0,17.1L-7.97,5.54A9.7,9.7 0 1 1 7.97,5.54Z"/><path fill="#fff" d="M2.2,-6.1L5.3,-1.6H4.2L6.9,2.4H4.4V5.3H2.3V2.4H-1L1.6,-1.6H0.5Z"/><path fill="#fff" stroke="#08643f" stroke-width="1.1" stroke-linejoin="round" paint-order="stroke" d="M-1.7,-6.1L1.4,-1.6H0.3L3,2.4H-0.6V5.3H-2.7V2.4H-6.3L-3.6,-1.6H-4.7Z"/></g>
<g transform="translate(284.3,497.5)"><path fill="#005f7e" d="M0,17.1L-7.97,5.54A9.7,9.7 0 1 1 7.97,5.54Z"/><g transform="translate(-6.32,-5.60) scale(0.575)"><path fill="#fff" fill-rule="evenodd" d="M1,0H19.6Q20.7,0 20.7,1V3.7H19.2L22,7.6V12.7H0V1Q0,0 1,0ZM1.8,4.9V8H8.1V4.9Z M10,4.9V11.2H13.1V4.9Z M16,4.9V8H20.6L18.6,4.9Z"/><path fill="#fff" d="M3.00,13.00a2.9,2.9 0 1,0 5.8,0a2.9,2.9 0 1,0 -5.8,0zM13.90,13.00a2.9,2.9 0 1,0 5.8,0a2.9,2.9 0 1,0 -5.8,0z"/><path fill="#005f7e" d="M4.40,13.00a1.5,1.5 0 1,0 3.0,0a1.5,1.5 0 1,0 -3.0,0zM15.30,13.00a1.5,1.5 0 1,0 3.0,0a1.5,1.5 0 1,0 -3.0,0z"/></g></g>
<g transform="translate(458.5,497.5)"><path fill="#1c62ae" d="M0,17.1L-7.97,5.54A9.7,9.7 0 1 1 7.97,5.54Z"/><text x="-2.9" y="0.6" font-family="Liberation Sans,sans-serif" font-size="10.5" fill="#fff" stroke="#fff" stroke-width="0.4" text-anchor="middle">P</text><text x="2.6" y="5.6" font-family="Liberation Sans,sans-serif" font-size="10.5" fill="#fff" stroke="#fff" stroke-width="0.4" text-anchor="middle">A</text></g>
<g transform="translate(47.5,496.3)"><path fill="#005f7e" d="M0,17.1L-7.97,5.54A9.7,9.7 0 1 1 7.97,5.54Z"/><g transform="translate(-6.32,-5.60) scale(0.575)"><path fill="#fff" fill-rule="evenodd" d="M1,0H19.6Q20.7,0 20.7,1V3.7H19.2L22,7.6V12.7H0V1Q0,0 1,0ZM1.8,4.9V8H8.1V4.9Z M10,4.9V11.2H13.1V4.9Z M16,4.9V8H20.6L18.6,4.9Z"/><path fill="#fff" d="M3.00,13.00a2.9,2.9 0 1,0 5.8,0a2.9,2.9 0 1,0 -5.8,0zM13.90,13.00a2.9,2.9 0 1,0 5.8,0a2.9,2.9 0 1,0 -5.8,0z"/><path fill="#005f7e" d="M4.40,13.00a1.5,1.5 0 1,0 3.0,0a1.5,1.5 0 1,0 -3.0,0zM15.30,13.00a1.5,1.5 0 1,0 3.0,0a1.5,1.5 0 1,0 -3.0,0z"/></g></g>
<g transform="translate(151.5,493.5)"><path fill="#fdd835" d="M0,17.1L-7.97,5.54A9.7,9.7 0 1 1 7.97,5.54Z"/><path d="M-3.9,-6.7L4.3,2.4M3.3,-6.7L-4.9,2.4" stroke="#ee3524" stroke-width="1.8" fill="none"/><path d="M-2,2.9L-0.5,0.4L1,2.9Z" fill="#111"/><text x="-0.3" y="5.2" font-family="Liberation Sans,sans-serif" font-size="3.4" font-weight="bold" fill="#111" stroke="#111" stroke-width="0.3" text-anchor="middle" textLength="10.5" lengthAdjust="spacingAndGlyphs">KOA</text></g>
<g transform="translate(391.5,492.5)"><path fill="#005f7e" d="M0,17.1L-7.97,5.54A9.7,9.7 0 1 1 7.97,5.54Z"/><g transform="translate(-6.32,-5.60) scale(0.575)"><path fill="#fff" fill-rule="evenodd" d="M1,0H19.6Q20.7,0 20.7,1V3.7H19.2L22,7.6V12.7H0V1Q0,0 1,0ZM1.8,4.9V8H8.1V4.9Z M10,4.9V11.2H13.1V4.9Z M16,4.9V8H20.6L18.6,4.9Z"/><path fill="#fff" d="M3.00,13.00a2.9,2.9 0 1,0 5.8,0a2.9,2.9 0 1,0 -5.8,0zM13.90,13.00a2.9,2.9 0 1,0 5.8,0a2.9,2.9 0 1,0 -5.8,0z"/><path fill="#005f7e" d="M4.40,13.00a1.5,1.5 0 1,0 3.0,0a1.5,1.5 0 1,0 -3.0,0zM15.30,13.00a1.5,1.5 0 1,0 3.0,0a1.5,1.5 0 1,0 -3.0,0z"/></g></g>
<g transform="translate(55.3,488.5)"><path fill="#08643f" d="M0,17.1L-7.97,5.54A9.7,9.7 0 1 1 7.97,5.54Z"/><path fill="#fff" d="M2.2,-6.1L5.3,-1.6H4.2L6.9,2.4H4.4V5.3H2.3V2.4H-1L1.6,-1.6H0.5Z"/><path fill="#fff" stroke="#08643f" stroke-width="1.1" stroke-linejoin="round" paint-order="stroke" d="M-1.7,-6.1L1.4,-1.6H0.3L3,2.4H-0.6V5.3H-2.7V2.4H-6.3L-3.6,-1.6H-4.7Z"/></g>
<g transform="translate(530.5,488.5)"><path fill="#005f7e" d="M0,17.1L-7.97,5.54A9.7,9.7 0 1 1 7.97,5.54Z"/><g transform="translate(-6.32,-5.60) scale(0.575)"><path fill="#fff" fill-rule="evenodd" d="M1,0H19.6Q20.7,0 20.7,1V3.7H19.2L22,7.6V12.7H0V1Q0,0 1,0ZM1.8,4.9V8H8.1V4.9Z M10,4.9V11.2H13.1V4.9Z M16,4.9V8H20.6L18.6,4.9Z"/><path fill="#fff" d="M3.00,13.00a2.9,2.9 0 1,0 5.8,0a2.9,2.9 0 1,0 -5.8,0zM13.90,13.00a2.9,2.9 0 1,0 5.8,0a2.9,2.9 0 1,0 -5.8,0z"/><path fill="#005f7e" d="M4.40,13.00a1.5,1.5 0 1,0 3.0,0a1.5,1.5 0 1,0 -3.0,0zM15.30,13.00a1.5,1.5 0 1,0 3.0,0a1.5,1.5 0 1,0 -3.0,0z"/></g></g>
<g transform="translate(481.0,487.5)"><path fill="#005f7e" d="M0,17.1L-7.97,5.54A9.7,9.7 0 1 1 7.97,5.54Z"/><g transform="translate(-6.32,-5.60) scale(0.575)"><path fill="#fff" fill-rule="evenodd" d="M1,0H19.6Q20.7,0 20.7,1V3.7H19.2L22,7.6V12.7H0V1Q0,0 1,0ZM1.8,4.9V8H8.1V4.9Z M10,4.9V11.2H13.1V4.9Z M16,4.9V8H20.6L18.6,4.9Z"/><path fill="#fff" d="M3.00,13.00a2.9,2.9 0 1,0 5.8,0a2.9,2.9 0 1,0 -5.8,0zM13.90,13.00a2.9,2.9 0 1,0 5.8,0a2.9,2.9 0 1,0 -5.8,0z"/><path fill="#005f7e" d="M4.40,13.00a1.5,1.5 0 1,0 3.0,0a1.5,1.5 0 1,0 -3.0,0zM15.30,13.00a1.5,1.5 0 1,0 3.0,0a1.5,1.5 0 1,0 -3.0,0z"/></g></g>
<g transform="translate(502.1,486.3)"><path fill="#005f7e" d="M0,17.1L-7.97,5.54A9.7,9.7 0 1 1 7.97,5.54Z"/><g transform="translate(-6.32,-5.60) scale(0.575)"><path fill="#fff" fill-rule="evenodd" d="M1,0H19.6Q20.7,0 20.7,1V3.7H19.2L22,7.6V12.7H0V1Q0,0 1,0ZM1.8,4.9V8H8.1V4.9Z M10,4.9V11.2H13.1V4.9Z M16,4.9V8H20.6L18.6,4.9Z"/><path fill="#fff" d="M3.00,13.00a2.9,2.9 0 1,0 5.8,0a2.9,2.9 0 1,0 -5.8,0zM13.90,13.00a2.9,2.9 0 1,0 5.8,0a2.9,2.9 0 1,0 -5.8,0z"/><path fill="#005f7e" d="M4.40,13.00a1.5,1.5 0 1,0 3.0,0a1.5,1.5 0 1,0 -3.0,0zM15.30,13.00a1.5,1.5 0 1,0 3.0,0a1.5,1.5 0 1,0 -3.0,0z"/></g></g>
<g transform="translate(64.0,485.1)"><path fill="#005f7e" d="M0,17.1L-7.97,5.54A9.7,9.7 0 1 1 7.97,5.54Z"/><g transform="translate(-6.32,-5.60) scale(0.575)"><path fill="#fff" fill-rule="evenodd" d="M1,0H19.6Q20.7,0 20.7,1V3.7H19.2L22,7.6V12.7H0V1Q0,0 1,0ZM1.8,4.9V8H8.1V4.9Z M10,4.9V11.2H13.1V4.9Z M16,4.9V8H20.6L18.6,4.9Z"/><path fill="#fff" d="M3.00,13.00a2.9,2.9 0 1,0 5.8,0a2.9,2.9 0 1,0 -5.8,0zM13.90,13.00a2.9,2.9 0 1,0 5.8,0a2.9,2.9 0 1,0 -5.8,0z"/><path fill="#005f7e" d="M4.40,13.00a1.5,1.5 0 1,0 3.0,0a1.5,1.5 0 1,0 -3.0,0zM15.30,13.00a1.5,1.5 0 1,0 3.0,0a1.5,1.5 0 1,0 -3.0,0z"/></g></g>
<g transform="translate(402.1,485.1)"><path fill="#c8102e" d="M0,17.1L-7.97,5.54A9.7,9.7 0 1 1 7.97,5.54Z"/><text x="0" y="5.2" font-family="Liberation Sans,sans-serif" font-size="12.6" font-weight="bold" fill="#fff" text-anchor="middle" textLength="12" lengthAdjust="spacingAndGlyphs">GS</text><ellipse cx="-2.9" cy="-5.3" rx="4.2" ry="1.6" transform="rotate(-12 -2.9 -5.3)" stroke="#ffc61a" stroke-width="0.8" fill="none"/></g>
<g transform="translate(278.1,483.5)"><path fill="#005f7e" d="M0,17.1L-7.97,5.54A9.7,9.7 0 1 1 7.97,5.54Z"/><g transform="translate(-6.32,-5.60) scale(0.575)"><path fill="#fff" fill-rule="evenodd" d="M1,0H19.6Q20.7,0 20.7,1V3.7H19.2L22,7.6V12.7H0V1Q0,0 1,0ZM1.8,4.9V8H8.1V4.9Z M10,4.9V11.2H13.1V4.9Z M16,4.9V8H20.6L18.6,4.9Z"/><path fill="#fff" d="M3.00,13.00a2.9,2.9 0 1,0 5.8,0a2.9,2.9 0 1,0 -5.8,0zM13.90,13.00a2.9,2.9 0 1,0 5.8,0a2.9,2.9 0 1,0 -5.8,0z"/><path fill="#005f7e" d="M4.40,13.00a1.5,1.5 0 1,0 3.0,0a1.5,1.5 0 1,0 -3.0,0zM15.30,13.00a1.5,1.5 0 1,0 3.0,0a1.5,1.5 0 1,0 -3.0,0z"/></g></g>
<g transform="translate(448.5,482.5)"><path fill="#005f7e" d="M0,17.1L-7.97,5.54A9.7,9.7 0 1 1 7.97,5.54Z"/><g transform="translate(-6.32,-5.60) scale(0.575)"><path fill="#fff" fill-rule="evenodd" d="M1,0H19.6Q20.7,0 20.7,1V3.7H19.2L22,7.6V12.7H0V1Q0,0 1,0ZM1.8,4.9V8H8.1V4.9Z M10,4.9V11.2H13.1V4.9Z M16,4.9V8H20.6L18.6,4.9Z"/><path fill="#fff" d="M3.00,13.00a2.9,2.9 0 1,0 5.8,0a2.9,2.9 0 1,0 -5.8,0zM13.90,13.00a2.9,2.9 0 1,0 5.8,0a2.9,2.9 0 1,0 -5.8,0z"/><path fill="#005f7e" d="M4.40,13.00a1.5,1.5 0 1,0 3.0,0a1.5,1.5 0 1,0 -3.0,0zM15.30,13.00a1.5,1.5 0 1,0 3.0,0a1.5,1.5 0 1,0 -3.0,0z"/></g></g>
<g transform="translate(378.5,481.5)"><path fill="#08643f" d="M0,17.1L-7.97,5.54A9.7,9.7 0 1 1 7.97,5.54Z"/><path fill="#fff" d="M2.2,-6.1L5.3,-1.6H4.2L6.9,2.4H4.4V5.3H2.3V2.4H-1L1.6,-1.6H0.5Z"/><path fill="#fff" stroke="#08643f" stroke-width="1.1" stroke-linejoin="round" paint-order="stroke" d="M-1.7,-6.1L1.4,-1.6H0.3L3,2.4H-0.6V5.3H-2.7V2.4H-6.3L-3.6,-1.6H-4.7Z"/></g>
<g transform="translate(507.1,478.5)"><path fill="#c8102e" d="M0,17.1L-7.97,5.54A9.7,9.7 0 1 1 7.97,5.54Z"/><text x="0" y="5.2" font-family="Liberation Sans,sans-serif" font-size="12.6" font-weight="bold" fill="#fff" text-anchor="middle" textLength="12" lengthAdjust="spacingAndGlyphs">GS</text><ellipse cx="-2.9" cy="-5.3" rx="4.2" ry="1.6" transform="rotate(-12 -2.9 -5.3)" stroke="#ffc61a" stroke-width="0.8" fill="none"/></g>
<g transform="translate(300.3,477.5)"><path fill="#1c62ae" d="M0,17.1L-7.97,5.54A9.7,9.7 0 1 1 7.97,5.54Z"/><text x="-2.9" y="0.6" font-family="Liberation Sans,sans-serif" font-size="10.5" fill="#fff" stroke="#fff" stroke-width="0.4" text-anchor="middle">P</text><text x="2.6" y="5.6" font-family="Liberation Sans,sans-serif" font-size="10.5" fill="#fff" stroke="#fff" stroke-width="0.4" text-anchor="middle">A</text></g>
<g transform="translate(289.5,477.0)"><path fill="#08643f" d="M0,17.1L-7.97,5.54A9.7,9.7 0 1 1 7.97,5.54Z"/><path fill="#fff" d="M2.2,-6.1L5.3,-1.6H4.2L6.9,2.4H4.4V5.3H2.3V2.4H-1L1.6,-1.6H0.5Z"/><path fill="#fff" stroke="#08643f" stroke-width="1.1" stroke-linejoin="round" paint-order="stroke" d="M-1.7,-6.1L1.4,-1.6H0.3L3,2.4H-0.6V5.3H-2.7V2.4H-6.3L-3.6,-1.6H-4.7Z"/></g>
<g transform="translate(411.3,470.1)"><path fill="#005f7e" d="M0,17.1L-7.97,5.54A9.7,9.7 0 1 1 7.97,5.54Z"/><g transform="translate(-6.32,-5.60) scale(0.575)"><path fill="#fff" fill-rule="evenodd" d="M1,0H19.6Q20.7,0 20.7,1V3.7H19.2L22,7.6V12.7H0V1Q0,0 1,0ZM1.8,4.9V8H8.1V4.9Z M10,4.9V11.2H13.1V4.9Z M16,4.9V8H20.6L18.6,4.9Z"/><path fill="#fff" d="M3.00,13.00a2.9,2.9 0 1,0 5.8,0a2.9,2.9 0 1,0 -5.8,0zM13.90,13.00a2.9,2.9 0 1,0 5.8,0a2.9,2.9 0 1,0 -5.8,0z"/><path fill="#005f7e" d="M4.40,13.00a1.5,1.5 0 1,0 3.0,0a1.5,1.5 0 1,0 -3.0,0zM15.30,13.00a1.5,1.5 0 1,0 3.0,0a1.5,1.5 0 1,0 -3.0,0z"/></g></g>
<g transform="translate(4.2,468.5)"><path fill="#005f7e" d="M0,17.1L-7.97,5.54A9.7,9.7 0 1 1 7.97,5.54Z"/><g transform="translate(-6.32,-5.60) scale(0.575)"><path fill="#fff" fill-rule="evenodd" d="M1,0H19.6Q20.7,0 20.7,1V3.7H19.2L22,7.6V12.7H0V1Q0,0 1,0ZM1.8,4.9V8H8.1V4.9Z M10,4.9V11.2H13.1V4.9Z M16,4.9V8H20.6L18.6,4.9Z"/><path fill="#fff" d="M3.00,13.00a2.9,2.9 0 1,0 5.8,0a2.9,2.9 0 1,0 -5.8,0zM13.90,13.00a2.9,2.9 0 1,0 5.8,0a2.9,2.9 0 1,0 -5.8,0z"/><path fill="#005f7e" d="M4.40,13.00a1.5,1.5 0 1,0 3.0,0a1.5,1.5 0 1,0 -3.0,0zM15.30,13.00a1.5,1.5 0 1,0 3.0,0a1.5,1.5 0 1,0 -3.0,0z"/></g></g>
<g transform="translate(385.1,468.5)"><path fill="#fdd835" d="M0,17.1L-7.97,5.54A9.7,9.7 0 1 1 7.97,5.54Z"/><path d="M-3.9,-6.7L4.3,2.4M3.3,-6.7L-4.9,2.4" stroke="#ee3524" stroke-width="1.8" fill="none"/><path d="M-2,2.9L-0.5,0.4L1,2.9Z" fill="#111"/><text x="-0.3" y="5.2" font-family="Liberation Sans,sans-serif" font-size="3.4" font-weight="bold" fill="#111" stroke="#111" stroke-width="0.3" text-anchor="middle" textLength="10.5" lengthAdjust="spacingAndGlyphs">KOA</text></g>
<g transform="translate(83.9,467.5)"><path fill="#08643f" d="M0,17.1L-7.97,5.54A9.7,9.7 0 1 1 7.97,5.54Z"/><path fill="#fff" d="M2.2,-6.1L5.3,-1.6H4.2L6.9,2.4H4.4V5.3H2.3V2.4H-1L1.6,-1.6H0.5Z"/><path fill="#fff" stroke="#08643f" stroke-width="1.1" stroke-linejoin="round" paint-order="stroke" d="M-1.7,-6.1L1.4,-1.6H0.3L3,2.4H-0.6V5.3H-2.7V2.4H-6.3L-3.6,-1.6H-4.7Z"/></g>
<g transform="translate(397.5,467.5)"><path fill="#005f7e" d="M0,17.1L-7.97,5.54A9.7,9.7 0 1 1 7.97,5.54Z"/><g transform="translate(-6.32,-5.60) scale(0.575)"><path fill="#fff" fill-rule="evenodd" d="M1,0H19.6Q20.7,0 20.7,1V3.7H19.2L22,7.6V12.7H0V1Q0,0 1,0ZM1.8,4.9V8H8.1V4.9Z M10,4.9V11.2H13.1V4.9Z M16,4.9V8H20.6L18.6,4.9Z"/><path fill="#fff" d="M3.00,13.00a2.9,2.9 0 1,0 5.8,0a2.9,2.9 0 1,0 -5.8,0zM13.90,13.00a2.9,2.9 0 1,0 5.8,0a2.9,2.9 0 1,0 -5.8,0z"/><path fill="#005f7e" d="M4.40,13.00a1.5,1.5 0 1,0 3.0,0a1.5,1.5 0 1,0 -3.0,0zM15.30,13.00a1.5,1.5 0 1,0 3.0,0a1.5,1.5 0 1,0 -3.0,0z"/></g></g>
<g transform="translate(149.9,463.9)"><path fill="#08643f" d="M0,17.1L-7.97,5.54A9.7,9.7 0 1 1 7.97,5.54Z"/><path fill="#fff" d="M2.2,-6.1L5.3,-1.6H4.2L6.9,2.4H4.4V5.3H2.3V2.4H-1L1.6,-1.6H0.5Z"/><path fill="#fff" stroke="#08643f" stroke-width="1.1" stroke-linejoin="round" paint-order="stroke" d="M-1.7,-6.1L1.4,-1.6H0.3L3,2.4H-0.6V5.3H-2.7V2.4H-6.3L-3.6,-1.6H-4.7Z"/></g>
<g transform="translate(247.0,462.5)"><path fill="#005f7e" d="M0,17.1L-7.97,5.54A9.7,9.7 0 1 1 7.97,5.54Z"/><g transform="translate(-6.32,-5.60) scale(0.575)"><path fill="#fff" fill-rule="evenodd" d="M1,0H19.6Q20.7,0 20.7,1V3.7H19.2L22,7.6V12.7H0V1Q0,0 1,0ZM1.8,4.9V8H8.1V4.9Z M10,4.9V11.2H13.1V4.9Z M16,4.9V8H20.6L18.6,4.9Z"/><path fill="#fff" d="M3.00,13.00a2.9,2.9 0 1,0 5.8,0a2.9,2.9 0 1,0 -5.8,0zM13.90,13.00a2.9,2.9 0 1,0 5.8,0a2.9,2.9 0 1,0 -5.8,0z"/><path fill="#005f7e" d="M4.40,13.00a1.5,1.5 0 1,0 3.0,0a1.5,1.5 0 1,0 -3.0,0zM15.30,13.00a1.5,1.5 0 1,0 3.0,0a1.5,1.5 0 1,0 -3.0,0z"/></g></g>
<g transform="translate(484.5,461.9)"><path fill="#005f7e" d="M0,17.1L-7.97,5.54A9.7,9.7 0 1 1 7.97,5.54Z"/><g transform="translate(-6.32,-5.60) scale(0.575)"><path fill="#fff" fill-rule="evenodd" d="M1,0H19.6Q20.7,0 20.7,1V3.7H19.2L22,7.6V12.7H0V1Q0,0 1,0ZM1.8,4.9V8H8.1V4.9Z M10,4.9V11.2H13.1V4.9Z M16,4.9V8H20.6L18.6,4.9Z"/><path fill="#fff" d="M3.00,13.00a2.9,2.9 0 1,0 5.8,0a2.9,2.9 0 1,0 -5.8,0zM13.90,13.00a2.9,2.9 0 1,0 5.8,0a2.9,2.9 0 1,0 -5.8,0z"/><path fill="#005f7e" d="M4.40,13.00a1.5,1.5 0 1,0 3.0,0a1.5,1.5 0 1,0 -3.0,0zM15.30,13.00a1.5,1.5 0 1,0 3.0,0a1.5,1.5 0 1,0 -3.0,0z"/></g></g>
<g transform="translate(223.5,461.5)"><path fill="#c8102e" d="M0,17.1L-7.97,5.54A9.7,9.7 0 1 1 7.97,5.54Z"/><text x="0" y="5.2" font-family="Liberation Sans,sans-serif" font-size="12.6" font-weight="bold" fill="#fff" text-anchor="middle" textLength="12" lengthAdjust="spacingAndGlyphs">GS</text><ellipse cx="-2.9" cy="-5.3" rx="4.2" ry="1.6" transform="rotate(-12 -2.9 -5.3)" stroke="#ffc61a" stroke-width="0.8" fill="none"/></g>
<g transform="translate(317.5,461.5)"><path fill="#005f7e" d="M0,17.1L-7.97,5.54A9.7,9.7 0 1 1 7.97,5.54Z"/><path fill="#fff" fill-rule="evenodd" d="M-5,-5.9H3.4V4.3H-5Z M-4.2,-5V-1.3H2.6V-5Z M-2.2,1.8V2.7H0.8V1.8Z"/><path stroke="#fff" stroke-width="0.5" d="M-3,-4.6V-2.6M-1.7,-4.6V-2.6M-0.4,-4.6V-2.6M0.9,-4.6V-2.6"/><path fill="none" stroke="#fff" stroke-width="0.8" d="M3.4,2.2H5.5V-6.3"/></g>
<g transform="translate(45.5,460.5)"><path fill="#fdd835" d="M0,17.1L-7.97,5.54A9.7,9.7 0 1 1 7.97,5.54Z"/><path d="M-3.9,-6.7L4.3,2.4M3.3,-6.7L-4.9,2.4" stroke="#ee3524" stroke-width="1.8" fill="none"/><path d="M-2,2.9L-0.5,0.4L1,2.9Z" fill="#111"/><text x="-0.3" y="5.2" font-family="Liberation Sans,sans-serif" font-size="3.4" font-weight="bold" fill="#111" stroke="#111" stroke-width="0.3" text-anchor="middle" textLength="10.5" lengthAdjust="spacingAndGlyphs">KOA</text></g>
<g transform="translate(225.8,460.2)"><path fill="#005f7e" d="M0,17.1L-7.97,5.54A9.7,9.7 0 1 1 7.97,5.54Z"/><g transform="translate(-6.32,-5.60) scale(0.575)"><path fill="#fff" fill-rule="evenodd" d="M1,0H19.6Q20.7,0 20.7,1V3.7H19.2L22,7.6V12.7H0V1Q0,0 1,0ZM1.8,4.9V8H8.1V4.9Z M10,4.9V11.2H13.1V4.9Z M16,4.9V8H20.6L18.6,4.9Z"/><path fill="#fff" d="M3.00,13.00a2.9,2.9 0 1,0 5.8,0a2.9,2.9 0 1,0 -5.8,0zM13.90,13.00a2.9,2.9 0 1,0 5.8,0a2.9,2.9 0 1,0 -5.8,0z"/><path fill="#005f7e" d="M4.40,13.00a1.5,1.5 0 1,0 3.0,0a1.5,1.5 0 1,0 -3.0,0zM15.30,13.00a1.5,1.5 0 1,0 3.0,0a1.5,1.5 0 1,0 -3.0,0z"/></g></g>
<g transform="translate(290.5,458.9)"><path fill="#005f7e" d="M0,17.1L-7.97,5.54A9.7,9.7 0 1 1 7.97,5.54Z"/><g transform="translate(-6.32,-5.60) scale(0.575)"><path fill="#fff" fill-rule="evenodd" d="M1,0H19.6Q20.7,0 20.7,1V3.7H19.2L22,7.6V12.7H0V1Q0,0 1,0ZM1.8,4.9V8H8.1V4.9Z M10,4.9V11.2H13.1V4.9Z M16,4.9V8H20.6L18.6,4.9Z"/><path fill="#fff" d="M3.00,13.00a2.9,2.9 0 1,0 5.8,0a2.9,2.9 0 1,0 -5.8,0zM13.90,13.00a2.9,2.9 0 1,0 5.8,0a2.9,2.9 0 1,0 -5.8,0z"/><path fill="#005f7e" d="M4.40,13.00a1.5,1.5 0 1,0 3.0,0a1.5,1.5 0 1,0 -3.0,0zM15.30,13.00a1.5,1.5 0 1,0 3.0,0a1.5,1.5 0 1,0 -3.0,0z"/></g></g>
<g transform="translate(45.3,457.5)"><path fill="#005f7e" d="M0,17.1L-7.97,5.54A9.7,9.7 0 1 1 7.97,5.54Z"/><g transform="translate(-6.32,-5.60) scale(0.575)"><path fill="#fff" fill-rule="evenodd" d="M1,0H19.6Q20.7,0 20.7,1V3.7H19.2L22,7.6V12.7H0V1Q0,0 1,0ZM1.8,4.9V8H8.1V4.9Z M10,4.9V11.2H13.1V4.9Z M16,4.9V8H20.6L18.6,4.9Z"/><path fill="#fff" d="M3.00,13.00a2.9,2.9 0 1,0 5.8,0a2.9,2.9 0 1,0 -5.8,0zM13.90,13.00a2.9,2.9 0 1,0 5.8,0a2.9,2.9 0 1,0 -5.8,0z"/><path fill="#005f7e" d="M4.40,13.00a1.5,1.5 0 1,0 3.0,0a1.5,1.5 0 1,0 -3.0,0zM15.30,13.00a1.5,1.5 0 1,0 3.0,0a1.5,1.5 0 1,0 -3.0,0z"/></g></g>
<g transform="translate(81.5,456.5)"><path fill="#08643f" d="M0,17.1L-7.97,5.54A9.7,9.7 0 1 1 7.97,5.54Z"/><path fill="#fff" d="M2.2,-6.1L5.3,-1.6H4.2L6.9,2.4H4.4V5.3H2.3V2.4H-1L1.6,-1.6H0.5Z"/><path fill="#fff" stroke="#08643f" stroke-width="1.1" stroke-linejoin="round" paint-order="stroke" d="M-1.7,-6.1L1.4,-1.6H0.3L3,2.4H-0.6V5.3H-2.7V2.4H-6.3L-3.6,-1.6H-4.7Z"/></g>
<g transform="translate(173.0,451.5)"><path fill="#005f7e" d="M0,17.1L-7.97,5.54A9.7,9.7 0 1 1 7.97,5.54Z"/><g transform="translate(-6.32,-5.60) scale(0.575)"><path fill="#fff" fill-rule="evenodd" d="M1,0H19.6Q20.7,0 20.7,1V3.7H19.2L22,7.6V12.7H0V1Q0,0 1,0ZM1.8,4.9V8H8.1V4.9Z M10,4.9V11.2H13.1V4.9Z M16,4.9V8H20.6L18.6,4.9Z"/><path fill="#fff" d="M3.00,13.00a2.9,2.9 0 1,0 5.8,0a2.9,2.9 0 1,0 -5.8,0zM13.90,13.00a2.9,2.9 0 1,0 5.8,0a2.9,2.9 0 1,0 -5.8,0z"/><path fill="#005f7e" d="M4.40,13.00a1.5,1.5 0 1,0 3.0,0a1.5,1.5 0 1,0 -3.0,0zM15.30,13.00a1.5,1.5 0 1,0 3.0,0a1.5,1.5 0 1,0 -3.0,0z"/></g></g>
<g transform="translate(122.5,450.2)"><path fill="#08643f" d="M0,17.1L-7.97,5.54A9.7,9.7 0 1 1 7.97,5.54Z"/><path fill="#fff" d="M2.2,-6.1L5.3,-1.6H4.2L6.9,2.4H4.4V5.3H2.3V2.4H-1L1.6,-1.6H0.5Z"/><path fill="#fff" stroke="#08643f" stroke-width="1.1" stroke-linejoin="round" paint-order="stroke" d="M-1.7,-6.1L1.4,-1.6H0.3L3,2.4H-0.6V5.3H-2.7V2.4H-6.3L-3.6,-1.6H-4.7Z"/></g>
<g transform="translate(276.8,450.2)"><path fill="#005f7e" d="M0,17.1L-7.97,5.54A9.7,9.7 0 1 1 7.97,5.54Z"/><g transform="translate(-6.32,-5.60) scale(0.575)"><path fill="#fff" fill-rule="evenodd" d="M1,0H19.6Q20.7,0 20.7,1V3.7H19.2L22,7.6V12.7H0V1Q0,0 1,0ZM1.8,4.9V8H8.1V4.9Z M10,4.9V11.2H13.1V4.9Z M16,4.9V8H20.6L18.6,4.9Z"/><path fill="#fff" d="M3.00,13.00a2.9,2.9 0 1,0 5.8,0a2.9,2.9 0 1,0 -5.8,0zM13.90,13.00a2.9,2.9 0 1,0 5.8,0a2.9,2.9 0 1,0 -5.8,0z"/><path fill="#005f7e" d="M4.40,13.00a1.5,1.5 0 1,0 3.0,0a1.5,1.5 0 1,0 -3.0,0zM15.30,13.00a1.5,1.5 0 1,0 3.0,0a1.5,1.5 0 1,0 -3.0,0z"/></g></g>
<g transform="translate(115.0,449.0)"><path fill="#08643f" d="M0,17.1L-7.97,5.54A9.7,9.7 0 1 1 7.97,5.54Z"/><path fill="#fff" d="M2.2,-6.1L5.3,-1.6H4.2L6.9,2.4H4.4V5.3H2.3V2.4H-1L1.6,-1.6H0.5Z"/><path fill="#fff" stroke="#08643f" stroke-width="1.1" stroke-linejoin="round" paint-order="stroke" d="M-1.7,-6.1L1.4,-1.6H0.3L3,2.4H-0.6V5.3H-2.7V2.4H-6.3L-3.6,-1.6H-4.7Z"/></g>
<g transform="translate(144.5,447.5)"><path fill="#08643f" d="M0,17.1L-7.97,5.54A9.7,9.7 0 1 1 7.97,5.54Z"/><path fill="#fff" d="M2.2,-6.1L5.3,-1.6H4.2L6.9,2.4H4.4V5.3H2.3V2.4H-1L1.6,-1.6H0.5Z"/><path fill="#fff" stroke="#08643f" stroke-width="1.1" stroke-linejoin="round" paint-order="stroke" d="M-1.7,-6.1L1.4,-1.6H0.3L3,2.4H-0.6V5.3H-2.7V2.4H-6.3L-3.6,-1.6H-4.7Z"/></g>
<g transform="translate(52.8,446.5)"><path fill="#08643f" d="M0,17.1L-7.97,5.54A9.7,9.7 0 1 1 7.97,5.54Z"/><path fill="#fff" d="M2.2,-6.1L5.3,-1.6H4.2L6.9,2.4H4.4V5.3H2.3V2.4H-1L1.6,-1.6H0.5Z"/><path fill="#fff" stroke="#08643f" stroke-width="1.1" stroke-linejoin="round" paint-order="stroke" d="M-1.7,-6.1L1.4,-1.6H0.3L3,2.4H-0.6V5.3H-2.7V2.4H-6.3L-3.6,-1.6H-4.7Z"/></g>
<g transform="translate(31.5,442.5)"><path fill="#005f7e" d="M0,17.1L-7.97,5.54A9.7,9.7 0 1 1 7.97,5.54Z"/><g transform="translate(-6.32,-5.60) scale(0.575)"><path fill="#fff" fill-rule="evenodd" d="M1,0H19.6Q20.7,0 20.7,1V3.7H19.2L22,7.6V12.7H0V1Q0,0 1,0ZM1.8,4.9V8H8.1V4.9Z M10,4.9V11.2H13.1V4.9Z M16,4.9V8H20.6L18.6,4.9Z"/><path fill="#fff" d="M3.00,13.00a2.9,2.9 0 1,0 5.8,0a2.9,2.9 0 1,0 -5.8,0zM13.90,13.00a2.9,2.9 0 1,0 5.8,0a2.9,2.9 0 1,0 -5.8,0z"/><path fill="#005f7e" d="M4.40,13.00a1.5,1.5 0 1,0 3.0,0a1.5,1.5 0 1,0 -3.0,0zM15.30,13.00a1.5,1.5 0 1,0 3.0,0a1.5,1.5 0 1,0 -3.0,0z"/></g></g>
<g transform="translate(171.5,442.5)"><path fill="#005f7e" d="M0,17.1L-7.97,5.54A9.7,9.7 0 1 1 7.97,5.54Z"/><g transform="translate(-6.32,-5.60) scale(0.575)"><path fill="#fff" fill-rule="evenodd" d="M1,0H19.6Q20.7,0 20.7,1V3.7H19.2L22,7.6V12.7H0V1Q0,0 1,0ZM1.8,4.9V8H8.1V4.9Z M10,4.9V11.2H13.1V4.9Z M16,4.9V8H20.6L18.6,4.9Z"/><path fill="#fff" d="M3.00,13.00a2.9,2.9 0 1,0 5.8,0a2.9,2.9 0 1,0 -5.8,0zM13.90,13.00a2.9,2.9 0 1,0 5.8,0a2.9,2.9 0 1,0 -5.8,0z"/><path fill="#005f7e" d="M4.40,13.00a1.5,1.5 0 1,0 3.0,0a1.5,1.5 0 1,0 -3.0,0zM15.30,13.00a1.5,1.5 0 1,0 3.0,0a1.5,1.5 0 1,0 -3.0,0z"/></g></g>
<g transform="translate(244.0,441.5)"><path fill="#005f7e" d="M0,17.1L-7.97,5.54A9.7,9.7 0 1 1 7.97,5.54Z"/><g transform="translate(-6.32,-5.60) scale(0.575)"><path fill="#fff" fill-rule="evenodd" d="M1,0H19.6Q20.7,0 20.7,1V3.7H19.2L22,7.6V12.7H0V1Q0,0 1,0ZM1.8,4.9V8H8.1V4.9Z M10,4.9V11.2H13.1V4.9Z M16,4.9V8H20.6L18.6,4.9Z"/><path fill="#fff" d="M3.00,13.00a2.9,2.9 0 1,0 5.8,0a2.9,2.9 0 1,0 -5.8,0zM13.90,13.00a2.9,2.9 0 1,0 5.8,0a2.9,2.9 0 1,0 -5.8,0z"/><path fill="#005f7e" d="M4.40,13.00a1.5,1.5 0 1,0 3.0,0a1.5,1.5 0 1,0 -3.0,0zM15.30,13.00a1.5,1.5 0 1,0 3.0,0a1.5,1.5 0 1,0 -3.0,0z"/></g></g>
<g transform="translate(618.8,441.0)"><path fill="#005f7e" d="M0,17.1L-7.97,5.54A9.7,9.7 0 1 1 7.97,5.54Z"/><g transform="translate(-6.32,-5.60) scale(0.575)"><path fill="#fff" fill-rule="evenodd" d="M1,0H19.6Q20.7,0 20.7,1V3.7H19.2L22,7.6V12.7H0V1Q0,0 1,0ZM1.8,4.9V8H8.1V4.9Z M10,4.9V11.2H13.1V4.9Z M16,4.9V8H20.6L18.6,4.9Z"/><path fill="#fff" d="M3.00,13.00a2.9,2.9 0 1,0 5.8,0a2.9,2.9 0 1,0 -5.8,0zM13.90,13.00a2.9,2.9 0 1,0 5.8,0a2.9,2.9 0 1,0 -5.8,0z"/><path fill="#005f7e" d="M4.40,13.00a1.5,1.5 0 1,0 3.0,0a1.5,1.5 0 1,0 -3.0,0zM15.30,13.00a1.5,1.5 0 1,0 3.0,0a1.5,1.5 0 1,0 -3.0,0z"/></g></g>
<g transform="translate(723.4,440.2)"><path fill="#08643f" d="M0,17.1L-7.97,5.54A9.7,9.7 0 1 1 7.97,5.54Z"/><path fill="#fff" d="M2.2,-6.1L5.3,-1.6H4.2L6.9,2.4H4.4V5.3H2.3V2.4H-1L1.6,-1.6H0.5Z"/><path fill="#fff" stroke="#08643f" stroke-width="1.1" stroke-linejoin="round" paint-order="stroke" d="M-1.7,-6.1L1.4,-1.6H0.3L3,2.4H-0.6V5.3H-2.7V2.4H-6.3L-3.6,-1.6H-4.7Z"/></g>
<g transform="translate(204.5,439.0)"><path fill="#005f7e" d="M0,17.1L-7.97,5.54A9.7,9.7 0 1 1 7.97,5.54Z"/><g transform="translate(-6.32,-5.60) scale(0.575)"><path fill="#fff" fill-rule="evenodd" d="M1,0H19.6Q20.7,0 20.7,1V3.7H19.2L22,7.6V12.7H0V1Q0,0 1,0ZM1.8,4.9V8H8.1V4.9Z M10,4.9V11.2H13.1V4.9Z M16,4.9V8H20.6L18.6,4.9Z"/><path fill="#fff" d="M3.00,13.00a2.9,2.9 0 1,0 5.8,0a2.9,2.9 0 1,0 -5.8,0zM13.90,13.00a2.9,2.9 0 1,0 5.8,0a2.9,2.9 0 1,0 -5.8,0z"/><path fill="#005f7e" d="M4.40,13.00a1.5,1.5 0 1,0 3.0,0a1.5,1.5 0 1,0 -3.0,0zM15.30,13.00a1.5,1.5 0 1,0 3.0,0a1.5,1.5 0 1,0 -3.0,0z"/></g></g>
<g transform="translate(540.5,438.5)"><path fill="#005f7e" d="M0,17.1L-7.97,5.54A9.7,9.7 0 1 1 7.97,5.54Z"/><g transform="translate(-6.32,-5.60) scale(0.575)"><path fill="#fff" fill-rule="evenodd" d="M1,0H19.6Q20.7,0 20.7,1V3.7H19.2L22,7.6V12.7H0V1Q0,0 1,0ZM1.8,4.9V8H8.1V4.9Z M10,4.9V11.2H13.1V4.9Z M16,4.9V8H20.6L18.6,4.9Z"/><path fill="#fff" d="M3.00,13.00a2.9,2.9 0 1,0 5.8,0a2.9,2.9 0 1,0 -5.8,0zM13.90,13.00a2.9,2.9 0 1,0 5.8,0a2.9,2.9 0 1,0 -5.8,0z"/><path fill="#005f7e" d="M4.40,13.00a1.5,1.5 0 1,0 3.0,0a1.5,1.5 0 1,0 -3.0,0zM15.30,13.00a1.5,1.5 0 1,0 3.0,0a1.5,1.5 0 1,0 -3.0,0z"/></g></g>
<g transform="translate(72.5,434.0)"><path fill="#08643f" d="M0,17.1L-7.97,5.54A9.7,9.7 0 1 1 7.97,5.54Z"/><path fill="#fff" d="M2.2,-6.1L5.3,-1.6H4.2L6.9,2.4H4.4V5.3H2.3V2.4H-1L1.6,-1.6H0.5Z"/><path fill="#fff" stroke="#08643f" stroke-width="1.1" stroke-linejoin="round" paint-order="stroke" d="M-1.7,-6.1L1.4,-1.6H0.3L3,2.4H-0.6V5.3H-2.7V2.4H-6.3L-3.6,-1.6H-4.7Z"/></g>
<g transform="translate(269.5,434.0)"><path fill="#005f7e" d="M0,17.1L-7.97,5.54A9.7,9.7 0 1 1 7.97,5.54Z"/><g transform="translate(-6.32,-5.60) scale(0.575)"><path fill="#fff" fill-rule="evenodd" d="M1,0H19.6Q20.7,0 20.7,1V3.7H19.2L22,7.6V12.7H0V1Q0,0 1,0ZM1.8,4.9V8H8.1V4.9Z M10,4.9V11.2H13.1V4.9Z M16,4.9V8H20.6L18.6,4.9Z"/><path fill="#fff" d="M3.00,13.00a2.9,2.9 0 1,0 5.8,0a2.9,2.9 0 1,0 -5.8,0zM13.90,13.00a2.9,2.9 0 1,0 5.8,0a2.9,2.9 0 1,0 -5.8,0z"/><path fill="#005f7e" d="M4.40,13.00a1.5,1.5 0 1,0 3.0,0a1.5,1.5 0 1,0 -3.0,0zM15.30,13.00a1.5,1.5 0 1,0 3.0,0a1.5,1.5 0 1,0 -3.0,0z"/></g></g>
<g transform="translate(337.5,434.0)"><path fill="#005f7e" d="M0,17.1L-7.97,5.54A9.7,9.7 0 1 1 7.97,5.54Z"/><path fill="#fff" fill-rule="evenodd" d="M-5,-5.9H3.4V4.3H-5Z M-4.2,-5V-1.3H2.6V-5Z M-2.2,1.8V2.7H0.8V1.8Z"/><path stroke="#fff" stroke-width="0.5" d="M-3,-4.6V-2.6M-1.7,-4.6V-2.6M-0.4,-4.6V-2.6M0.9,-4.6V-2.6"/><path fill="none" stroke="#fff" stroke-width="0.8" d="M3.4,2.2H5.5V-6.3"/></g>
<g transform="translate(345.3,434.0)"><path fill="#005f7e" d="M0,17.1L-7.97,5.54A9.7,9.7 0 1 1 7.97,5.54Z"/><path fill="#fff" fill-rule="evenodd" d="M-5,-5.9H3.4V4.3H-5Z M-4.2,-5V-1.3H2.6V-5Z M-2.2,1.8V2.7H0.8V1.8Z"/><path stroke="#fff" stroke-width="0.5" d="M-3,-4.6V-2.6M-1.7,-4.6V-2.6M-0.4,-4.6V-2.6M0.9,-4.6V-2.6"/><path fill="none" stroke="#fff" stroke-width="0.8" d="M3.4,2.2H5.5V-6.3"/></g>
<g transform="translate(322.9,432.5)"><path fill="#005f7e" d="M0,17.1L-7.97,5.54A9.7,9.7 0 1 1 7.97,5.54Z"/><g transform="translate(-6.32,-5.60) scale(0.575)"><path fill="#fff" fill-rule="evenodd" d="M1,0H19.6Q20.7,0 20.7,1V3.7H19.2L22,7.6V12.7H0V1Q0,0 1,0ZM1.8,4.9V8H8.1V4.9Z M10,4.9V11.2H13.1V4.9Z M16,4.9V8H20.6L18.6,4.9Z"/><path fill="#fff" d="M3.00,13.00a2.9,2.9 0 1,0 5.8,0a2.9,2.9 0 1,0 -5.8,0zM13.90,13.00a2.9,2.9 0 1,0 5.8,0a2.9,2.9 0 1,0 -5.8,0z"/><path fill="#005f7e" d="M4.40,13.00a1.5,1.5 0 1,0 3.0,0a1.5,1.5 0 1,0 -3.0,0zM15.30,13.00a1.5,1.5 0 1,0 3.0,0a1.5,1.5 0 1,0 -3.0,0z"/></g></g>
<g transform="translate(42.8,431.5)"><path fill="#005f7e" d="M0,17.1L-7.97,5.54A9.7,9.7 0 1 1 7.97,5.54Z"/><g transform="translate(-6.32,-5.60) scale(0.575)"><path fill="#fff" fill-rule="evenodd" d="M1,0H19.6Q20.7,0 20.7,1V3.7H19.2L22,7.6V12.7H0V1Q0,0 1,0ZM1.8,4.9V8H8.1V4.9Z M10,4.9V11.2H13.1V4.9Z M16,4.9V8H20.6L18.6,4.9Z"/><path fill="#fff" d="M3.00,13.00a2.9,2.9 0 1,0 5.8,0a2.9,2.9 0 1,0 -5.8,0zM13.90,13.00a2.9,2.9 0 1,0 5.8,0a2.9,2.9 0 1,0 -5.8,0z"/><path fill="#005f7e" d="M4.40,13.00a1.5,1.5 0 1,0 3.0,0a1.5,1.5 0 1,0 -3.0,0zM15.30,13.00a1.5,1.5 0 1,0 3.0,0a1.5,1.5 0 1,0 -3.0,0z"/></g></g>
<g transform="translate(64.0,429.0)"><path fill="#08643f" d="M0,17.1L-7.97,5.54A9.7,9.7 0 1 1 7.97,5.54Z"/><path fill="#fff" d="M2.2,-6.1L5.3,-1.6H4.2L6.9,2.4H4.4V5.3H2.3V2.4H-1L1.6,-1.6H0.5Z"/><path fill="#fff" stroke="#08643f" stroke-width="1.1" stroke-linejoin="round" paint-order="stroke" d="M-1.7,-6.1L1.4,-1.6H0.3L3,2.4H-0.6V5.3H-2.7V2.4H-6.3L-3.6,-1.6H-4.7Z"/></g>
<g transform="translate(210.9,429.0)"><path fill="#005f7e" d="M0,17.1L-7.97,5.54A9.7,9.7 0 1 1 7.97,5.54Z"/><g transform="translate(-6.32,-5.60) scale(0.575)"><path fill="#fff" fill-rule="evenodd" d="M1,0H19.6Q20.7,0 20.7,1V3.7H19.2L22,7.6V12.7H0V1Q0,0 1,0ZM1.8,4.9V8H8.1V4.9Z M10,4.9V11.2H13.1V4.9Z M16,4.9V8H20.6L18.6,4.9Z"/><path fill="#fff" d="M3.00,13.00a2.9,2.9 0 1,0 5.8,0a2.9,2.9 0 1,0 -5.8,0zM13.90,13.00a2.9,2.9 0 1,0 5.8,0a2.9,2.9 0 1,0 -5.8,0z"/><path fill="#005f7e" d="M4.40,13.00a1.5,1.5 0 1,0 3.0,0a1.5,1.5 0 1,0 -3.0,0zM15.30,13.00a1.5,1.5 0 1,0 3.0,0a1.5,1.5 0 1,0 -3.0,0z"/></g></g>
<g transform="translate(19.9,425.3)"><path fill="#08643f" d="M0,17.1L-7.97,5.54A9.7,9.7 0 1 1 7.97,5.54Z"/><path fill="#fff" d="M2.2,-6.1L5.3,-1.6H4.2L6.9,2.4H4.4V5.3H2.3V2.4H-1L1.6,-1.6H0.5Z"/><path fill="#fff" stroke="#08643f" stroke-width="1.1" stroke-linejoin="round" paint-order="stroke" d="M-1.7,-6.1L1.4,-1.6H0.3L3,2.4H-0.6V5.3H-2.7V2.4H-6.3L-3.6,-1.6H-4.7Z"/></g>
<g transform="translate(544.5,425.3)"><path fill="#005f7e" d="M0,17.1L-7.97,5.54A9.7,9.7 0 1 1 7.97,5.54Z"/><g transform="translate(-6.32,-5.60) scale(0.575)"><path fill="#fff" fill-rule="evenodd" d="M1,0H19.6Q20.7,0 20.7,1V3.7H19.2L22,7.6V12.7H0V1Q0,0 1,0ZM1.8,4.9V8H8.1V4.9Z M10,4.9V11.2H13.1V4.9Z M16,4.9V8H20.6L18.6,4.9Z"/><path fill="#fff" d="M3.00,13.00a2.9,2.9 0 1,0 5.8,0a2.9,2.9 0 1,0 -5.8,0zM13.90,13.00a2.9,2.9 0 1,0 5.8,0a2.9,2.9 0 1,0 -5.8,0z"/><path fill="#005f7e" d="M4.40,13.00a1.5,1.5 0 1,0 3.0,0a1.5,1.5 0 1,0 -3.0,0zM15.30,13.00a1.5,1.5 0 1,0 3.0,0a1.5,1.5 0 1,0 -3.0,0z"/></g></g>
<g transform="translate(359.0,424.1)"><path fill="#7a2e12" d="M0,17.1L-7.97,5.54A9.7,9.7 0 1 1 7.97,5.54Z"/><circle cx="0" cy="0.5" r="5.2" fill="#fff"/><path fill="#fff" d="M-2,-4L0,-7L2.4,-4Z"/><circle cx="-2" cy="0" r="0.9" fill="#7a2e12"/><circle cx="2" cy="0" r="0.9" fill="#7a2e12"/><path d="M-2.4,2.4Q0,4.6 2.4,2.4Z" fill="#7a2e12"/></g>
<g transform="translate(319.2,419.1)"><path fill="#005f7e" d="M0,17.1L-7.97,5.54A9.7,9.7 0 1 1 7.97,5.54Z"/><g transform="translate(-6.32,-5.60) scale(0.575)"><path fill="#fff" fill-rule="evenodd" d="M1,0H19.6Q20.7,0 20.7,1V3.7H19.2L22,7.6V12.7H0V1Q0,0 1,0ZM1.8,4.9V8H8.1V4.9Z M10,4.9V11.2H13.1V4.9Z M16,4.9V8H20.6L18.6,4.9Z"/><path fill="#fff" d="M3.00,13.00a2.9,2.9 0 1,0 5.8,0a2.9,2.9 0 1,0 -5.8,0zM13.90,13.00a2.9,2.9 0 1,0 5.8,0a2.9,2.9 0 1,0 -5.8,0z"/><path fill="#005f7e" d="M4.40,13.00a1.5,1.5 0 1,0 3.0,0a1.5,1.5 0 1,0 -3.0,0zM15.30,13.00a1.5,1.5 0 1,0 3.0,0a1.5,1.5 0 1,0 -3.0,0z"/></g></g>
<g transform="translate(264.5,417.5)"><path fill="#005f7e" d="M0,17.1L-7.97,5.54A9.7,9.7 0 1 1 7.97,5.54Z"/><g transform="translate(-6.32,-5.60) scale(0.575)"><path fill="#fff" fill-rule="evenodd" d="M1,0H19.6Q20.7,0 20.7,1V3.7H19.2L22,7.6V12.7H0V1Q0,0 1,0ZM1.8,4.9V8H8.1V4.9Z M10,4.9V11.2H13.1V4.9Z M16,4.9V8H20.6L18.6,4.9Z"/><path fill="#fff" d="M3.00,13.00a2.9,2.9 0 1,0 5.8,0a2.9,2.9 0 1,0 -5.8,0zM13.90,13.00a2.9,2.9 0 1,0 5.8,0a2.9,2.9 0 1,0 -5.8,0z"/><path fill="#005f7e" d="M4.40,13.00a1.5,1.5 0 1,0 3.0,0a1.5,1.5 0 1,0 -3.0,0zM15.30,13.00a1.5,1.5 0 1,0 3.0,0a1.5,1.5 0 1,0 -3.0,0z"/></g></g>
<g transform="translate(156.8,414.1)"><path fill="#005f7e" d="M0,17.1L-7.97,5.54A9.7,9.7 0 1 1 7.97,5.54Z"/><g transform="translate(-6.32,-5.60) scale(0.575)"><path fill="#fff" fill-rule="evenodd" d="M1,0H19.6Q20.7,0 20.7,1V3.7H19.2L22,7.6V12.7H0V1Q0,0 1,0ZM1.8,4.9V8H8.1V4.9Z M10,4.9V11.2H13.1V4.9Z M16,4.9V8H20.6L18.6,4.9Z"/><path fill="#fff" d="M3.00,13.00a2.9,2.9 0 1,0 5.8,0a2.9,2.9 0 1,0 -5.8,0zM13.90,13.00a2.9,2.9 0 1,0 5.8,0a2.9,2.9 0 1,0 -5.8,0z"/><path fill="#005f7e" d="M4.40,13.00a1.5,1.5 0 1,0 3.0,0a1.5,1.5 0 1,0 -3.0,0zM15.30,13.00a1.5,1.5 0 1,0 3.0,0a1.5,1.5 0 1,0 -3.0,0z"/></g></g>
<g transform="translate(317.5,411.5)"><path fill="#005f7e" d="M0,17.1L-7.97,5.54A9.7,9.7 0 1 1 7.97,5.54Z"/><path fill="#fff" fill-rule="evenodd" d="M-5,-5.9H3.4V4.3H-5Z M-4.2,-5V-1.3H2.6V-5Z M-2.2,1.8V2.7H0.8V1.8Z"/><path stroke="#fff" stroke-width="0.5" d="M-3,-4.6V-2.6M-1.7,-4.6V-2.6M-0.4,-4.6V-2.6M0.9,-4.6V-2.6"/><path fill="none" stroke="#fff" stroke-width="0.8" d="M3.4,2.2H5.5V-6.3"/></g>
<g transform="translate(270.5,406.5)"><path fill="#005f7e" d="M0,17.1L-7.97,5.54A9.7,9.7 0 1 1 7.97,5.54Z"/><g transform="translate(-6.32,-5.60) scale(0.575)"><path fill="#fff" fill-rule="evenodd" d="M1,0H19.6Q20.7,0 20.7,1V3.7H19.2L22,7.6V12.7H0V1Q0,0 1,0ZM1.8,4.9V8H8.1V4.9Z M10,4.9V11.2H13.1V4.9Z M16,4.9V8H20.6L18.6,4.9Z"/><path fill="#fff" d="M3.00,13.00a2.9,2.9 0 1,0 5.8,0a2.9,2.9 0 1,0 -5.8,0zM13.90,13.00a2.9,2.9 0 1,0 5.8,0a2.9,2.9 0 1,0 -5.8,0z"/><path fill="#005f7e" d="M4.40,13.00a1.5,1.5 0 1,0 3.0,0a1.5,1.5 0 1,0 -3.0,0zM15.30,13.00a1.5,1.5 0 1,0 3.0,0a1.5,1.5 0 1,0 -3.0,0z"/></g></g>
<g transform="translate(451.5,401.5)"><path fill="#fdd835" d="M0,17.1L-7.97,5.54A9.7,9.7 0 1 1 7.97,5.54Z"/><path d="M-3.9,-6.7L4.3,2.4M3.3,-6.7L-4.9,2.4" stroke="#ee3524" stroke-width="1.8" fill="none"/><path d="M-2,2.9L-0.5,0.4L1,2.9Z" fill="#111"/><text x="-0.3" y="5.2" font-family="Liberation Sans,sans-serif" font-size="3.4" font-weight="bold" fill="#111" stroke="#111" stroke-width="0.3" text-anchor="middle" textLength="10.5" lengthAdjust="spacingAndGlyphs">KOA</text></g>
<g transform="translate(116.3,400.5)"><path fill="#08643f" d="M0,17.1L-7.97,5.54A9.7,9.7 0 1 1 7.97,5.54Z"/><path fill="#fff" d="M2.2,-6.1L5.3,-1.6H4.2L6.9,2.4H4.4V5.3H2.3V2.4H-1L1.6,-1.6H0.5Z"/><path fill="#fff" stroke="#08643f" stroke-width="1.1" stroke-linejoin="round" paint-order="stroke" d="M-1.7,-6.1L1.4,-1.6H0.3L3,2.4H-0.6V5.3H-2.7V2.4H-6.3L-3.6,-1.6H-4.7Z"/></g>
<g transform="translate(538.5,398.5)"><path fill="#005f7e" d="M0,17.1L-7.97,5.54A9.7,9.7 0 1 1 7.97,5.54Z"/><g transform="translate(-6.32,-5.60) scale(0.575)"><path fill="#fff" fill-rule="evenodd" d="M1,0H19.6Q20.7,0 20.7,1V3.7H19.2L22,7.6V12.7H0V1Q0,0 1,0ZM1.8,4.9V8H8.1V4.9Z M10,4.9V11.2H13.1V4.9Z M16,4.9V8H20.6L18.6,4.9Z"/><path fill="#fff" d="M3.00,13.00a2.9,2.9 0 1,0 5.8,0a2.9,2.9 0 1,0 -5.8,0zM13.90,13.00a2.9,2.9 0 1,0 5.8,0a2.9,2.9 0 1,0 -5.8,0z"/><path fill="#005f7e" d="M4.40,13.00a1.5,1.5 0 1,0 3.0,0a1.5,1.5 0 1,0 -3.0,0zM15.30,13.00a1.5,1.5 0 1,0 3.0,0a1.5,1.5 0 1,0 -3.0,0z"/></g></g>
<g transform="translate(628.8,397.9)"><path fill="#005f7e" d="M0,17.1L-7.97,5.54A9.7,9.7 0 1 1 7.97,5.54Z"/><g transform="translate(-6.32,-5.60) scale(0.575)"><path fill="#fff" fill-rule="evenodd" d="M1,0H19.6Q20.7,0 20.7,1V3.7H19.2L22,7.6V12.7H0V1Q0,0 1,0ZM1.8,4.9V8H8.1V4.9Z M10,4.9V11.2H13.1V4.9Z M16,4.9V8H20.6L18.6,4.9Z"/><path fill="#fff" d="M3.00,13.00a2.9,2.9 0 1,0 5.8,0a2.9,2.9 0 1,0 -5.8,0zM13.90,13.00a2.9,2.9 0 1,0 5.8,0a2.9,2.9 0 1,0 -5.8,0z"/><path fill="#005f7e" d="M4.40,13.00a1.5,1.5 0 1,0 3.0,0a1.5,1.5 0 1,0 -3.0,0zM15.30,13.00a1.5,1.5 0 1,0 3.0,0a1.5,1.5 0 1,0 -3.0,0z"/></g></g>
<g transform="translate(168.5,396.5)"><path fill="#08643f" d="M0,17.1L-7.97,5.54A9.7,9.7 0 1 1 7.97,5.54Z"/><path fill="#fff" d="M2.2,-6.1L5.3,-1.6H4.2L6.9,2.4H4.4V5.3H2.3V2.4H-1L1.6,-1.6H0.5Z"/><path fill="#fff" stroke="#08643f" stroke-width="1.1" stroke-linejoin="round" paint-order="stroke" d="M-1.7,-6.1L1.4,-1.6H0.3L3,2.4H-0.6V5.3H-2.7V2.4H-6.3L-3.6,-1.6H-4.7Z"/></g>
<g transform="translate(263.1,395.5)"><path fill="#005f7e" d="M0,17.1L-7.97,5.54A9.7,9.7 0 1 1 7.97,5.54Z"/><g transform="translate(-6.32,-5.60) scale(0.575)"><path fill="#fff" fill-rule="evenodd" d="M1,0H19.6Q20.7,0 20.7,1V3.7H19.2L22,7.6V12.7H0V1Q0,0 1,0ZM1.8,4.9V8H8.1V4.9Z M10,4.9V11.2H13.1V4.9Z M16,4.9V8H20.6L18.6,4.9Z"/><path fill="#fff" d="M3.00,13.00a2.9,2.9 0 1,0 5.8,0a2.9,2.9 0 1,0 -5.8,0zM13.90,13.00a2.9,2.9 0 1,0 5.8,0a2.9,2.9 0 1,0 -5.8,0z"/><path fill="#005f7e" d="M4.40,13.00a1.5,1.5 0 1,0 3.0,0a1.5,1.5 0 1,0 -3.0,0zM15.30,13.00a1.5,1.5 0 1,0 3.0,0a1.5,1.5 0 1,0 -3.0,0z"/></g></g>
<g transform="translate(717.2,395.5)"><path fill="#005f7e" d="M0,17.1L-7.97,5.54A9.7,9.7 0 1 1 7.97,5.54Z"/><g transform="translate(-6.32,-5.60) scale(0.575)"><path fill="#fff" fill-rule="evenodd" d="M1,0H19.6Q20.7,0 20.7,1V3.7H19.2L22,7.6V12.7H0V1Q0,0 1,0ZM1.8,4.9V8H8.1V4.9Z M10,4.9V11.2H13.1V4.9Z M16,4.9V8H20.6L18.6,4.9Z"/><path fill="#fff" d="M3.00,13.00a2.9,2.9 0 1,0 5.8,0a2.9,2.9 0 1,0 -5.8,0zM13.90,13.00a2.9,2.9 0 1,0 5.8,0a2.9,2.9 0 1,0 -5.8,0z"/><path fill="#005f7e" d="M4.40,13.00a1.5,1.5 0 1,0 3.0,0a1.5,1.5 0 1,0 -3.0,0zM15.30,13.00a1.5,1.5 0 1,0 3.0,0a1.5,1.5 0 1,0 -3.0,0z"/></g></g>
<g transform="translate(619.3,391.5)"><path fill="#005f7e" d="M0,17.1L-7.97,5.54A9.7,9.7 0 1 1 7.97,5.54Z"/><g transform="translate(-6.32,-5.60) scale(0.575)"><path fill="#fff" fill-rule="evenodd" d="M1,0H19.6Q20.7,0 20.7,1V3.7H19.2L22,7.6V12.7H0V1Q0,0 1,0ZM1.8,4.9V8H8.1V4.9Z M10,4.9V11.2H13.1V4.9Z M16,4.9V8H20.6L18.6,4.9Z"/><path fill="#fff" d="M3.00,13.00a2.9,2.9 0 1,0 5.8,0a2.9,2.9 0 1,0 -5.8,0zM13.90,13.00a2.9,2.9 0 1,0 5.8,0a2.9,2.9 0 1,0 -5.8,0z"/><path fill="#005f7e" d="M4.40,13.00a1.5,1.5 0 1,0 3.0,0a1.5,1.5 0 1,0 -3.0,0zM15.30,13.00a1.5,1.5 0 1,0 3.0,0a1.5,1.5 0 1,0 -3.0,0z"/></g></g>
<g transform="translate(592.5,385.5)"><path fill="#005f7e" d="M0,17.1L-7.97,5.54A9.7,9.7 0 1 1 7.97,5.54Z"/><g transform="translate(-6.32,-5.60) scale(0.575)"><path fill="#fff" fill-rule="evenodd" d="M1,0H19.6Q20.7,0 20.7,1V3.7H19.2L22,7.6V12.7H0V1Q0,0 1,0ZM1.8,4.9V8H8.1V4.9Z M10,4.9V11.2H13.1V4.9Z M16,4.9V8H20.6L18.6,4.9Z"/><path fill="#fff" d="M3.00,13.00a2.9,2.9 0 1,0 5.8,0a2.9,2.9 0 1,0 -5.8,0zM13.90,13.00a2.9,2.9 0 1,0 5.8,0a2.9,2.9 0 1,0 -5.8,0z"/><path fill="#005f7e" d="M4.40,13.00a1.5,1.5 0 1,0 3.0,0a1.5,1.5 0 1,0 -3.0,0zM15.30,13.00a1.5,1.5 0 1,0 3.0,0a1.5,1.5 0 1,0 -3.0,0z"/></g></g>
<g transform="translate(461.1,384.5)"><path fill="#08644c" d="M0,17.1L-7.97,5.54A9.7,9.7 0 1 1 7.97,5.54Z"/><g transform="translate(-0.8,0.8)"><g transform="scale(0.5)"><path fill="#fff" fill-rule="evenodd" d="M-9.2,8.1V0.3L-7.2,-6.6Q-6.8,-8.1 -5.2,-8.1H5.2Q6.8,-8.1 7.2,-6.6L9.2,0.3V8.1H6V5.7H-6V8.1ZM-6.2,-1.6L-5,-5.8H5L6.2,-1.6Z"/><path fill="#08644c" d="M-6.65,1.60a1.15,1.15 0 1,0 2.3,0a1.15,1.15 0 1,0 -2.3,0zM4.25,1.60a1.15,1.15 0 1,0 2.3,0a1.15,1.15 0 1,0 -2.3,0z"/><circle cx="7" cy="-7.2" r="7.7" fill="#08644c"/><circle cx="7" cy="-7.2" r="5.65" fill="none" stroke="#fff" stroke-width="1.5"/><path d="M7,-10.8V-6.9L9.6,-5.5" stroke="#fff" stroke-width="1.3" fill="none"/></g></g></g>
<g transform="translate(34.1,383.0)"><path fill="#005f7e" d="M0,17.1L-7.97,5.54A9.7,9.7 0 1 1 7.97,5.54Z"/><g transform="translate(-6.32,-5.60) scale(0.575)"><path fill="#fff" fill-rule="evenodd" d="M1,0H19.6Q20.7,0 20.7,1V3.7H19.2L22,7.6V12.7H0V1Q0,0 1,0ZM1.8,4.9V8H8.1V4.9Z M10,4.9V11.2H13.1V4.9Z M16,4.9V8H20.6L18.6,4.9Z"/><path fill="#fff" d="M3.00,13.00a2.9,2.9 0 1,0 5.8,0a2.9,2.9 0 1,0 -5.8,0zM13.90,13.00a2.9,2.9 0 1,0 5.8,0a2.9,2.9 0 1,0 -5.8,0z"/><path fill="#005f7e" d="M4.40,13.00a1.5,1.5 0 1,0 3.0,0a1.5,1.5 0 1,0 -3.0,0zM15.30,13.00a1.5,1.5 0 1,0 3.0,0a1.5,1.5 0 1,0 -3.0,0z"/></g></g>
<g transform="translate(346.5,383.0)"><path fill="#005f7e" d="M0,17.1L-7.97,5.54A9.7,9.7 0 1 1 7.97,5.54Z"/><g transform="translate(-6.32,-5.60) scale(0.575)"><path fill="#fff" fill-rule="evenodd" d="M1,0H19.6Q20.7,0 20.7,1V3.7H19.2L22,7.6V12.7H0V1Q0,0 1,0ZM1.8,4.9V8H8.1V4.9Z M10,4.9V11.2H13.1V4.9Z M16,4.9V8H20.6L18.6,4.9Z"/><path fill="#fff" d="M3.00,13.00a2.9,2.9 0 1,0 5.8,0a2.9,2.9 0 1,0 -5.8,0zM13.90,13.00a2.9,2.9 0 1,0 5.8,0a2.9,2.9 0 1,0 -5.8,0z"/><path fill="#005f7e" d="M4.40,13.00a1.5,1.5 0 1,0 3.0,0a1.5,1.5 0 1,0 -3.0,0zM15.30,13.00a1.5,1.5 0 1,0 3.0,0a1.5,1.5 0 1,0 -3.0,0z"/></g></g>
<g transform="translate(434.9,379.5)"><path fill="#1c62ae" d="M0,17.1L-7.97,5.54A9.7,9.7 0 1 1 7.97,5.54Z"/><text x="-2.9" y="0.6" font-family="Liberation Sans,sans-serif" font-size="10.5" fill="#fff" stroke="#fff" stroke-width="0.4" text-anchor="middle">P</text><text x="2.6" y="5.6" font-family="Liberation Sans,sans-serif" font-size="10.5" fill="#fff" stroke="#fff" stroke-width="0.4" text-anchor="middle">A</text></g>
<g transform="translate(263.1,376.0)"><path fill="#005f7e" d="M0,17.1L-7.97,5.54A9.7,9.7 0 1 1 7.97,5.54Z"/><path fill="#fff" fill-rule="evenodd" d="M-5,-5.9H3.4V4.3H-5Z M-4.2,-5V-1.3H2.6V-5Z M-2.2,1.8V2.7H0.8V1.8Z"/><path stroke="#fff" stroke-width="0.5" d="M-3,-4.6V-2.6M-1.7,-4.6V-2.6M-0.4,-4.6V-2.6M0.9,-4.6V-2.6"/><path fill="none" stroke="#fff" stroke-width="0.8" d="M3.4,2.2H5.5V-6.3"/></g>
<g transform="translate(345.3,376.0)"><path fill="#005f7e" d="M0,17.1L-7.97,5.54A9.7,9.7 0 1 1 7.97,5.54Z"/><g transform="translate(-6.32,-5.60) scale(0.575)"><path fill="#fff" fill-rule="evenodd" d="M1,0H19.6Q20.7,0 20.7,1V3.7H19.2L22,7.6V12.7H0V1Q0,0 1,0ZM1.8,4.9V8H8.1V4.9Z M10,4.9V11.2H13.1V4.9Z M16,4.9V8H20.6L18.6,4.9Z"/><path fill="#fff" d="M3.00,13.00a2.9,2.9 0 1,0 5.8,0a2.9,2.9 0 1,0 -5.8,0zM13.90,13.00a2.9,2.9 0 1,0 5.8,0a2.9,2.9 0 1,0 -5.8,0z"/><path fill="#005f7e" d="M4.40,13.00a1.5,1.5 0 1,0 3.0,0a1.5,1.5 0 1,0 -3.0,0zM15.30,13.00a1.5,1.5 0 1,0 3.0,0a1.5,1.5 0 1,0 -3.0,0z"/></g></g>
<g transform="translate(635.5,376.0)"><path fill="#08643f" d="M0,17.1L-7.97,5.54A9.7,9.7 0 1 1 7.97,5.54Z"/><path fill="#fff" d="M2.2,-6.1L5.3,-1.6H4.2L6.9,2.4H4.4V5.3H2.3V2.4H-1L1.6,-1.6H0.5Z"/><path fill="#fff" stroke="#08643f" stroke-width="1.1" stroke-linejoin="round" paint-order="stroke" d="M-1.7,-6.1L1.4,-1.6H0.3L3,2.4H-0.6V5.3H-2.7V2.4H-6.3L-3.6,-1.6H-4.7Z"/></g>
<g transform="translate(801.5,373.5)"><path fill="#08643f" d="M0,17.1L-7.97,5.54A9.7,9.7 0 1 1 7.97,5.54Z"/><path fill="#fff" d="M2.2,-6.1L5.3,-1.6H4.2L6.9,2.4H4.4V5.3H2.3V2.4H-1L1.6,-1.6H0.5Z"/><path fill="#fff" stroke="#08643f" stroke-width="1.1" stroke-linejoin="round" paint-order="stroke" d="M-1.7,-6.1L1.4,-1.6H0.3L3,2.4H-0.6V5.3H-2.7V2.4H-6.3L-3.6,-1.6H-4.7Z"/></g>
<g transform="translate(473.5,372.2)"><path fill="#005f7e" d="M0,17.1L-7.97,5.54A9.7,9.7 0 1 1 7.97,5.54Z"/><g transform="translate(-6.32,-5.60) scale(0.575)"><path fill="#fff" fill-rule="evenodd" d="M1,0H19.6Q20.7,0 20.7,1V3.7H19.2L22,7.6V12.7H0V1Q0,0 1,0ZM1.8,4.9V8H8.1V4.9Z M10,4.9V11.2H13.1V4.9Z M16,4.9V8H20.6L18.6,4.9Z"/><path fill="#fff" d="M3.00,13.00a2.9,2.9 0 1,0 5.8,0a2.9,2.9 0 1,0 -5.8,0zM13.90,13.00a2.9,2.9 0 1,0 5.8,0a2.9,2.9 0 1,0 -5.8,0z"/><path fill="#005f7e" d="M4.40,13.00a1.5,1.5 0 1,0 3.0,0a1.5,1.5 0 1,0 -3.0,0zM15.30,13.00a1.5,1.5 0 1,0 3.0,0a1.5,1.5 0 1,0 -3.0,0z"/></g></g>
<g transform="translate(792.5,371.5)"><path fill="#005f7e" d="M0,17.1L-7.97,5.54A9.7,9.7 0 1 1 7.97,5.54Z"/><g transform="translate(-6.32,-5.60) scale(0.575)"><path fill="#fff" fill-rule="evenodd" d="M1,0H19.6Q20.7,0 20.7,1V3.7H19.2L22,7.6V12.7H0V1Q0,0 1,0ZM1.8,4.9V8H8.1V4.9Z M10,4.9V11.2H13.1V4.9Z M16,4.9V8H20.6L18.6,4.9Z"/><path fill="#fff" d="M3.00,13.00a2.9,2.9 0 1,0 5.8,0a2.9,2.9 0 1,0 -5.8,0zM13.90,13.00a2.9,2.9 0 1,0 5.8,0a2.9,2.9 0 1,0 -5.8,0z"/><path fill="#005f7e" d="M4.40,13.00a1.5,1.5 0 1,0 3.0,0a1.5,1.5 0 1,0 -3.0,0zM15.30,13.00a1.5,1.5 0 1,0 3.0,0a1.5,1.5 0 1,0 -3.0,0z"/></g></g>
<g transform="translate(6.5,369.5)"><path fill="#fdd835" d="M0,17.1L-7.97,5.54A9.7,9.7 0 1 1 7.97,5.54Z"/><path d="M-3.9,-6.7L4.3,2.4M3.3,-6.7L-4.9,2.4" stroke="#ee3524" stroke-width="1.8" fill="none"/><path d="M-2,2.9L-0.5,0.4L1,2.9Z" fill="#111"/><text x="-0.3" y="5.2" font-family="Liberation Sans,sans-serif" font-size="3.4" font-weight="bold" fill="#111" stroke="#111" stroke-width="0.3" text-anchor="middle" textLength="10.5" lengthAdjust="spacingAndGlyphs">KOA</text></g>
<g transform="translate(786.9,369.5)"><path fill="#005f7e" d="M0,17.1L-7.97,5.54A9.7,9.7 0 1 1 7.97,5.54Z"/><g transform="translate(-6.32,-5.60) scale(0.575)"><path fill="#fff" fill-rule="evenodd" d="M1,0H19.6Q20.7,0 20.7,1V3.7H19.2L22,7.6V12.7H0V1Q0,0 1,0ZM1.8,4.9V8H8.1V4.9Z M10,4.9V11.2H13.1V4.9Z M16,4.9V8H20.6L18.6,4.9Z"/><path fill="#fff" d="M3.00,13.00a2.9,2.9 0 1,0 5.8,0a2.9,2.9 0 1,0 -5.8,0zM13.90,13.00a2.9,2.9 0 1,0 5.8,0a2.9,2.9 0 1,0 -5.8,0z"/><path fill="#005f7e" d="M4.40,13.00a1.5,1.5 0 1,0 3.0,0a1.5,1.5 0 1,0 -3.0,0zM15.30,13.00a1.5,1.5 0 1,0 3.0,0a1.5,1.5 0 1,0 -3.0,0z"/></g></g>
<g transform="translate(584.8,367.5)"><path fill="#005f7e" d="M0,17.1L-7.97,5.54A9.7,9.7 0 1 1 7.97,5.54Z"/><g transform="translate(-6.32,-5.60) scale(0.575)"><path fill="#fff" fill-rule="evenodd" d="M1,0H19.6Q20.7,0 20.7,1V3.7H19.2L22,7.6V12.7H0V1Q0,0 1,0ZM1.8,4.9V8H8.1V4.9Z M10,4.9V11.2H13.1V4.9Z M16,4.9V8H20.6L18.6,4.9Z"/><path fill="#fff" d="M3.00,13.00a2.9,2.9 0 1,0 5.8,0a2.9,2.9 0 1,0 -5.8,0zM13.90,13.00a2.9,2.9 0 1,0 5.8,0a2.9,2.9 0 1,0 -5.8,0z"/><path fill="#005f7e" d="M4.40,13.00a1.5,1.5 0 1,0 3.0,0a1.5,1.5 0 1,0 -3.0,0zM15.30,13.00a1.5,1.5 0 1,0 3.0,0a1.5,1.5 0 1,0 -3.0,0z"/></g></g>
<g transform="translate(356.5,367.2)"><path fill="#005f7e" d="M0,17.1L-7.97,5.54A9.7,9.7 0 1 1 7.97,5.54Z"/><g transform="translate(-6.32,-5.60) scale(0.575)"><path fill="#fff" fill-rule="evenodd" d="M1,0H19.6Q20.7,0 20.7,1V3.7H19.2L22,7.6V12.7H0V1Q0,0 1,0ZM1.8,4.9V8H8.1V4.9Z M10,4.9V11.2H13.1V4.9Z M16,4.9V8H20.6L18.6,4.9Z"/><path fill="#fff" d="M3.00,13.00a2.9,2.9 0 1,0 5.8,0a2.9,2.9 0 1,0 -5.8,0zM13.90,13.00a2.9,2.9 0 1,0 5.8,0a2.9,2.9 0 1,0 -5.8,0z"/><path fill="#005f7e" d="M4.40,13.00a1.5,1.5 0 1,0 3.0,0a1.5,1.5 0 1,0 -3.0,0zM15.30,13.00a1.5,1.5 0 1,0 3.0,0a1.5,1.5 0 1,0 -3.0,0z"/></g></g>
<g transform="translate(87.5,366.0)"><path fill="#08643f" d="M0,17.1L-7.97,5.54A9.7,9.7 0 1 1 7.97,5.54Z"/><path fill="#fff" d="M2.2,-6.1L5.3,-1.6H4.2L6.9,2.4H4.4V5.3H2.3V2.4H-1L1.6,-1.6H0.5Z"/><path fill="#fff" stroke="#08643f" stroke-width="1.1" stroke-linejoin="round" paint-order="stroke" d="M-1.7,-6.1L1.4,-1.6H0.3L3,2.4H-0.6V5.3H-2.7V2.4H-6.3L-3.6,-1.6H-4.7Z"/></g>
<g transform="translate(74.5,363.5)"><path fill="#005f7e" d="M0,17.1L-7.97,5.54A9.7,9.7 0 1 1 7.97,5.54Z"/><g transform="translate(-6.32,-5.60) scale(0.575)"><path fill="#fff" fill-rule="evenodd" d="M1,0H19.6Q20.7,0 20.7,1V3.7H19.2L22,7.6V12.7H0V1Q0,0 1,0ZM1.8,4.9V8H8.1V4.9Z M10,4.9V11.2H13.1V4.9Z M16,4.9V8H20.6L18.6,4.9Z"/><path fill="#fff" d="M3.00,13.00a2.9,2.9 0 1,0 5.8,0a2.9,2.9 0 1,0 -5.8,0zM13.90,13.00a2.9,2.9 0 1,0 5.8,0a2.9,2.9 0 1,0 -5.8,0z"/><path fill="#005f7e" d="M4.40,13.00a1.5,1.5 0 1,0 3.0,0a1.5,1.5 0 1,0 -3.0,0zM15.30,13.00a1.5,1.5 0 1,0 3.0,0a1.5,1.5 0 1,0 -3.0,0z"/></g></g>
<g transform="translate(194.5,363.5)"><path fill="#08643f" d="M0,17.1L-7.97,5.54A9.7,9.7 0 1 1 7.97,5.54Z"/><path fill="#fff" d="M2.2,-6.1L5.3,-1.6H4.2L6.9,2.4H4.4V5.3H2.3V2.4H-1L1.6,-1.6H0.5Z"/><path fill="#fff" stroke="#08643f" stroke-width="1.1" stroke-linejoin="round" paint-order="stroke" d="M-1.7,-6.1L1.4,-1.6H0.3L3,2.4H-0.6V5.3H-2.7V2.4H-6.3L-3.6,-1.6H-4.7Z"/></g>
<g transform="translate(69.0,362.3)"><path fill="#005f7e" d="M0,17.1L-7.97,5.54A9.7,9.7 0 1 1 7.97,5.54Z"/><g transform="translate(-6.32,-5.60) scale(0.575)"><path fill="#fff" fill-rule="evenodd" d="M1,0H19.6Q20.7,0 20.7,1V3.7H19.2L22,7.6V12.7H0V1Q0,0 1,0ZM1.8,4.9V8H8.1V4.9Z M10,4.9V11.2H13.1V4.9Z M16,4.9V8H20.6L18.6,4.9Z"/><path fill="#fff" d="M3.00,13.00a2.9,2.9 0 1,0 5.8,0a2.9,2.9 0 1,0 -5.8,0zM13.90,13.00a2.9,2.9 0 1,0 5.8,0a2.9,2.9 0 1,0 -5.8,0z"/><path fill="#005f7e" d="M4.40,13.00a1.5,1.5 0 1,0 3.0,0a1.5,1.5 0 1,0 -3.0,0zM15.30,13.00a1.5,1.5 0 1,0 3.0,0a1.5,1.5 0 1,0 -3.0,0z"/></g></g>
<g transform="translate(426.2,362.3)"><path fill="#c8102e" d="M0,17.1L-7.97,5.54A9.7,9.7 0 1 1 7.97,5.54Z"/><text x="0" y="5.2" font-family="Liberation Sans,sans-serif" font-size="12.6" font-weight="bold" fill="#fff" text-anchor="middle" textLength="12" lengthAdjust="spacingAndGlyphs">GS</text><ellipse cx="-2.9" cy="-5.3" rx="4.2" ry="1.6" transform="rotate(-12 -2.9 -5.3)" stroke="#ffc61a" stroke-width="0.8" fill="none"/></g>
<g transform="translate(658.2,362.3)"><path fill="#005f7e" d="M0,17.1L-7.97,5.54A9.7,9.7 0 1 1 7.97,5.54Z"/><g transform="translate(-6.32,-5.60) scale(0.575)"><path fill="#fff" fill-rule="evenodd" d="M1,0H19.6Q20.7,0 20.7,1V3.7H19.2L22,7.6V12.7H0V1Q0,0 1,0ZM1.8,4.9V8H8.1V4.9Z M10,4.9V11.2H13.1V4.9Z M16,4.9V8H20.6L18.6,4.9Z"/><path fill="#fff" d="M3.00,13.00a2.9,2.9 0 1,0 5.8,0a2.9,2.9 0 1,0 -5.8,0zM13.90,13.00a2.9,2.9 0 1,0 5.8,0a2.9,2.9 0 1,0 -5.8,0z"/><path fill="#005f7e" d="M4.40,13.00a1.5,1.5 0 1,0 3.0,0a1.5,1.5 0 1,0 -3.0,0zM15.30,13.00a1.5,1.5 0 1,0 3.0,0a1.5,1.5 0 1,0 -3.0,0z"/></g></g>
<g transform="translate(436.9,359.8)"><path fill="#005f7e" d="M0,17.1L-7.97,5.54A9.7,9.7 0 1 1 7.97,5.54Z"/><g transform="translate(-6.32,-5.60) scale(0.575)"><path fill="#fff" fill-rule="evenodd" d="M1,0H19.6Q20.7,0 20.7,1V3.7H19.2L22,7.6V12.7H0V1Q0,0 1,0ZM1.8,4.9V8H8.1V4.9Z M10,4.9V11.2H13.1V4.9Z M16,4.9V8H20.6L18.6,4.9Z"/><path fill="#fff" d="M3.00,13.00a2.9,2.9 0 1,0 5.8,0a2.9,2.9 0 1,0 -5.8,0zM13.90,13.00a2.9,2.9 0 1,0 5.8,0a2.9,2.9 0 1,0 -5.8,0z"/><path fill="#005f7e" d="M4.40,13.00a1.5,1.5 0 1,0 3.0,0a1.5,1.5 0 1,0 -3.0,0zM15.30,13.00a1.5,1.5 0 1,0 3.0,0a1.5,1.5 0 1,0 -3.0,0z"/></g></g>
<g transform="translate(730.9,359.8)"><path fill="#005f7e" d="M0,17.1L-7.97,5.54A9.7,9.7 0 1 1 7.97,5.54Z"/><g transform="translate(-6.32,-5.60) scale(0.575)"><path fill="#fff" fill-rule="evenodd" d="M1,0H19.6Q20.7,0 20.7,1V3.7H19.2L22,7.6V12.7H0V1Q0,0 1,0ZM1.8,4.9V8H8.1V4.9Z M10,4.9V11.2H13.1V4.9Z M16,4.9V8H20.6L18.6,4.9Z"/><path fill="#fff" d="M3.00,13.00a2.9,2.9 0 1,0 5.8,0a2.9,2.9 0 1,0 -5.8,0zM13.90,13.00a2.9,2.9 0 1,0 5.8,0a2.9,2.9 0 1,0 -5.8,0z"/><path fill="#005f7e" d="M4.40,13.00a1.5,1.5 0 1,0 3.0,0a1.5,1.5 0 1,0 -3.0,0zM15.30,13.00a1.5,1.5 0 1,0 3.0,0a1.5,1.5 0 1,0 -3.0,0z"/></g></g>
<g transform="translate(47.3,357.5)"><path fill="#1c62ae" d="M0,17.1L-7.97,5.54A9.7,9.7 0 1 1 7.97,5.54Z"/><text x="-2.9" y="0.6" font-family="Liberation Sans,sans-serif" font-size="10.5" fill="#fff" stroke="#fff" stroke-width="0.4" text-anchor="middle">P</text><text x="2.6" y="5.6" font-family="Liberation Sans,sans-serif" font-size="10.5" fill="#fff" stroke="#fff" stroke-width="0.4" text-anchor="middle">A</text></g>
<g transform="translate(406.3,357.3)"><path fill="#005f7e" d="M0,17.1L-7.97,5.54A9.7,9.7 0 1 1 7.97,5.54Z"/><g transform="translate(-6.32,-5.60) scale(0.575)"><path fill="#fff" fill-rule="evenodd" d="M1,0H19.6Q20.7,0 20.7,1V3.7H19.2L22,7.6V12.7H0V1Q0,0 1,0ZM1.8,4.9V8H8.1V4.9Z M10,4.9V11.2H13.1V4.9Z M16,4.9V8H20.6L18.6,4.9Z"/><path fill="#fff" d="M3.00,13.00a2.9,2.9 0 1,0 5.8,0a2.9,2.9 0 1,0 -5.8,0zM13.90,13.00a2.9,2.9 0 1,0 5.8,0a2.9,2.9 0 1,0 -5.8,0z"/><path fill="#005f7e" d="M4.40,13.00a1.5,1.5 0 1,0 3.0,0a1.5,1.5 0 1,0 -3.0,0zM15.30,13.00a1.5,1.5 0 1,0 3.0,0a1.5,1.5 0 1,0 -3.0,0z"/></g></g>
<g transform="translate(795.5,354.5)"><path fill="#005f7e" d="M0,17.1L-7.97,5.54A9.7,9.7 0 1 1 7.97,5.54Z"/><g transform="translate(-6.32,-5.60) scale(0.575)"><path fill="#fff" fill-rule="evenodd" d="M1,0H19.6Q20.7,0 20.7,1V3.7H19.2L22,7.6V12.7H0V1Q0,0 1,0ZM1.8,4.9V8H8.1V4.9Z M10,4.9V11.2H13.1V4.9Z M16,4.9V8H20.6L18.6,4.9Z"/><path fill="#fff" d="M3.00,13.00a2.9,2.9 0 1,0 5.8,0a2.9,2.9 0 1,0 -5.8,0zM13.90,13.00a2.9,2.9 0 1,0 5.8,0a2.9,2.9 0 1,0 -5.8,0z"/><path fill="#005f7e" d="M4.40,13.00a1.5,1.5 0 1,0 3.0,0a1.5,1.5 0 1,0 -3.0,0zM15.30,13.00a1.5,1.5 0 1,0 3.0,0a1.5,1.5 0 1,0 -3.0,0z"/></g></g>
<g transform="translate(78.2,353.5)"><path fill="#fdd835" d="M0,17.1L-7.97,5.54A9.7,9.7 0 1 1 7.97,5.54Z"/><path d="M-3.9,-6.7L4.3,2.4M3.3,-6.7L-4.9,2.4" stroke="#ee3524" stroke-width="1.8" fill="none"/><path d="M-2,2.9L-0.5,0.4L1,2.9Z" fill="#111"/><text x="-0.3" y="5.2" font-family="Liberation Sans,sans-serif" font-size="3.4" font-weight="bold" fill="#111" stroke="#111" stroke-width="0.3" text-anchor="middle" textLength="10.5" lengthAdjust="spacingAndGlyphs">KOA</text></g>
<g transform="translate(824.2,351.1)"><path fill="#08643f" d="M0,17.1L-7.97,5.54A9.7,9.7 0 1 1 7.97,5.54Z"/><path fill="#fff" d="M2.2,-6.1L5.3,-1.6H4.2L6.9,2.4H4.4V5.3H2.3V2.4H-1L1.6,-1.6H0.5Z"/><path fill="#fff" stroke="#08643f" stroke-width="1.1" stroke-linejoin="round" paint-order="stroke" d="M-1.7,-6.1L1.4,-1.6H0.3L3,2.4H-0.6V5.3H-2.7V2.4H-6.3L-3.6,-1.6H-4.7Z"/></g>
<g transform="translate(183.5,349.5)"><path fill="#08643f" d="M0,17.1L-7.97,5.54A9.7,9.7 0 1 1 7.97,5.54Z"/><path fill="#fff" d="M2.2,-6.1L5.3,-1.6H4.2L6.9,2.4H4.4V5.3H2.3V2.4H-1L1.6,-1.6H0.5Z"/><path fill="#fff" stroke="#08643f" stroke-width="1.1" stroke-linejoin="round" paint-order="stroke" d="M-1.7,-6.1L1.4,-1.6H0.3L3,2.4H-0.6V5.3H-2.7V2.4H-6.3L-3.6,-1.6H-4.7Z"/></g>
<g transform="translate(816.5,349.5)"><path fill="#08643f" d="M0,17.1L-7.97,5.54A9.7,9.7 0 1 1 7.97,5.54Z"/><path fill="#fff" d="M2.2,-6.1L5.3,-1.6H4.2L6.9,2.4H4.4V5.3H2.3V2.4H-1L1.6,-1.6H0.5Z"/><path fill="#fff" stroke="#08643f" stroke-width="1.1" stroke-linejoin="round" paint-order="stroke" d="M-1.7,-6.1L1.4,-1.6H0.3L3,2.4H-0.6V5.3H-2.7V2.4H-6.3L-3.6,-1.6H-4.7Z"/></g>
<g transform="translate(394.5,348.5)"><path fill="#005f7e" d="M0,17.1L-7.97,5.54A9.7,9.7 0 1 1 7.97,5.54Z"/><g transform="translate(-6.32,-5.60) scale(0.575)"><path fill="#fff" fill-rule="evenodd" d="M1,0H19.6Q20.7,0 20.7,1V3.7H19.2L22,7.6V12.7H0V1Q0,0 1,0ZM1.8,4.9V8H8.1V4.9Z M10,4.9V11.2H13.1V4.9Z M16,4.9V8H20.6L18.6,4.9Z"/><path fill="#fff" d="M3.00,13.00a2.9,2.9 0 1,0 5.8,0a2.9,2.9 0 1,0 -5.8,0zM13.90,13.00a2.9,2.9 0 1,0 5.8,0a2.9,2.9 0 1,0 -5.8,0z"/><path fill="#005f7e" d="M4.40,13.00a1.5,1.5 0 1,0 3.0,0a1.5,1.5 0 1,0 -3.0,0zM15.30,13.00a1.5,1.5 0 1,0 3.0,0a1.5,1.5 0 1,0 -3.0,0z"/></g></g>
<g transform="translate(12.5,345.5)"><path fill="#c8102e" d="M0,17.1L-7.97,5.54A9.7,9.7 0 1 1 7.97,5.54Z"/><text x="0" y="5.2" font-family="Liberation Sans,sans-serif" font-size="12.6" font-weight="bold" fill="#fff" text-anchor="middle" textLength="12" lengthAdjust="spacingAndGlyphs">GS</text><ellipse cx="-2.9" cy="-5.3" rx="4.2" ry="1.6" transform="rotate(-12 -2.9 -5.3)" stroke="#ffc61a" stroke-width="0.8" fill="none"/></g>
<g transform="translate(4.2,345.1)"><path fill="#08644c" d="M0,17.1L-7.97,5.54A9.7,9.7 0 1 1 7.97,5.54Z"/><g transform="translate(-0.8,0.8)"><g transform="scale(0.5)"><path fill="#fff" fill-rule="evenodd" d="M-9.2,8.1V0.3L-7.2,-6.6Q-6.8,-8.1 -5.2,-8.1H5.2Q6.8,-8.1 7.2,-6.6L9.2,0.3V8.1H6V5.7H-6V8.1ZM-6.2,-1.6L-5,-5.8H5L6.2,-1.6Z"/><path fill="#08644c" d="M-6.65,1.60a1.15,1.15 0 1,0 2.3,0a1.15,1.15 0 1,0 -2.3,0zM4.25,1.60a1.15,1.15 0 1,0 2.3,0a1.15,1.15 0 1,0 -2.3,0z"/><circle cx="7" cy="-7.2" r="7.7" fill="#08644c"/><circle cx="7" cy="-7.2" r="5.65" fill="none" stroke="#fff" stroke-width="1.5"/><path d="M7,-10.8V-6.9L9.6,-5.5" stroke="#fff" stroke-width="1.3" fill="none"/></g></g></g>
<g transform="translate(149.5,343.5)"><path fill="#08643f" d="M0,17.1L-7.97,5.54A9.7,9.7 0 1 1 7.97,5.54Z"/><path fill="#fff" d="M2.2,-6.1L5.3,-1.6H4.2L6.9,2.4H4.4V5.3H2.3V2.4H-1L1.6,-1.6H0.5Z"/><path fill="#fff" stroke="#08643f" stroke-width="1.1" stroke-linejoin="round" paint-order="stroke" d="M-1.7,-6.1L1.4,-1.6H0.3L3,2.4H-0.6V5.3H-2.7V2.4H-6.3L-3.6,-1.6H-4.7Z"/></g>
<g transform="translate(796.5,343.5)"><path fill="#005f7e" d="M0,17.1L-7.97,5.54A9.7,9.7 0 1 1 7.97,5.54Z"/><g transform="translate(-6.32,-5.60) scale(0.575)"><path fill="#fff" fill-rule="evenodd" d="M1,0H19.6Q20.7,0 20.7,1V3.7H19.2L22,7.6V12.7H0V1Q0,0 1,0ZM1.8,4.9V8H8.1V4.9Z M10,4.9V11.2H13.1V4.9Z M16,4.9V8H20.6L18.6,4.9Z"/><path fill="#fff" d="M3.00,13.00a2.9,2.9 0 1,0 5.8,0a2.9,2.9 0 1,0 -5.8,0zM13.90,13.00a2.9,2.9 0 1,0 5.8,0a2.9,2.9 0 1,0 -5.8,0z"/><path fill="#005f7e" d="M4.40,13.00a1.5,1.5 0 1,0 3.0,0a1.5,1.5 0 1,0 -3.0,0zM15.30,13.00a1.5,1.5 0 1,0 3.0,0a1.5,1.5 0 1,0 -3.0,0z"/></g></g>
<g transform="translate(201.5,338.5)"><path fill="#08643f" d="M0,17.1L-7.97,5.54A9.7,9.7 0 1 1 7.97,5.54Z"/><path fill="#fff" d="M2.2,-6.1L5.3,-1.6H4.2L6.9,2.4H4.4V5.3H2.3V2.4H-1L1.6,-1.6H0.5Z"/><path fill="#fff" stroke="#08643f" stroke-width="1.1" stroke-linejoin="round" paint-order="stroke" d="M-1.7,-6.1L1.4,-1.6H0.3L3,2.4H-0.6V5.3H-2.7V2.4H-6.3L-3.6,-1.6H-4.7Z"/></g>
<g transform="translate(652.9,338.5)"><path fill="#005f7e" d="M0,17.1L-7.97,5.54A9.7,9.7 0 1 1 7.97,5.54Z"/><g transform="translate(-6.32,-5.60) scale(0.575)"><path fill="#fff" fill-rule="evenodd" d="M1,0H19.6Q20.7,0 20.7,1V3.7H19.2L22,7.6V12.7H0V1Q0,0 1,0ZM1.8,4.9V8H8.1V4.9Z M10,4.9V11.2H13.1V4.9Z M16,4.9V8H20.6L18.6,4.9Z"/><path fill="#fff" d="M3.00,13.00a2.9,2.9 0 1,0 5.8,0a2.9,2.9 0 1,0 -5.8,0zM13.90,13.00a2.9,2.9 0 1,0 5.8,0a2.9,2.9 0 1,0 -5.8,0z"/><path fill="#005f7e" d="M4.40,13.00a1.5,1.5 0 1,0 3.0,0a1.5,1.5 0 1,0 -3.0,0zM15.30,13.00a1.5,1.5 0 1,0 3.0,0a1.5,1.5 0 1,0 -3.0,0z"/></g></g>
<g transform="translate(496.5,334.9)"><path fill="#005f7e" d="M0,17.1L-7.97,5.54A9.7,9.7 0 1 1 7.97,5.54Z"/><g transform="translate(-6.32,-5.60) scale(0.575)"><path fill="#fff" fill-rule="evenodd" d="M1,0H19.6Q20.7,0 20.7,1V3.7H19.2L22,7.6V12.7H0V1Q0,0 1,0ZM1.8,4.9V8H8.1V4.9Z M10,4.9V11.2H13.1V4.9Z M16,4.9V8H20.6L18.6,4.9Z"/><path fill="#fff" d="M3.00,13.00a2.9,2.9 0 1,0 5.8,0a2.9,2.9 0 1,0 -5.8,0zM13.90,13.00a2.9,2.9 0 1,0 5.8,0a2.9,2.9 0 1,0 -5.8,0z"/><path fill="#005f7e" d="M4.40,13.00a1.5,1.5 0 1,0 3.0,0a1.5,1.5 0 1,0 -3.0,0zM15.30,13.00a1.5,1.5 0 1,0 3.0,0a1.5,1.5 0 1,0 -3.0,0z"/></g></g>
<g transform="translate(800.1,334.5)"><path fill="#005f7e" d="M0,17.1L-7.97,5.54A9.7,9.7 0 1 1 7.97,5.54Z"/><g transform="translate(-6.32,-5.60) scale(0.575)"><path fill="#fff" fill-rule="evenodd" d="M1,0H19.6Q20.7,0 20.7,1V3.7H19.2L22,7.6V12.7H0V1Q0,0 1,0ZM1.8,4.9V8H8.1V4.9Z M10,4.9V11.2H13.1V4.9Z M16,4.9V8H20.6L18.6,4.9Z"/><path fill="#fff" d="M3.00,13.00a2.9,2.9 0 1,0 5.8,0a2.9,2.9 0 1,0 -5.8,0zM13.90,13.00a2.9,2.9 0 1,0 5.8,0a2.9,2.9 0 1,0 -5.8,0z"/><path fill="#005f7e" d="M4.40,13.00a1.5,1.5 0 1,0 3.0,0a1.5,1.5 0 1,0 -3.0,0zM15.30,13.00a1.5,1.5 0 1,0 3.0,0a1.5,1.5 0 1,0 -3.0,0z"/></g></g>
<g transform="translate(859.1,329.9)"><path fill="#08643f" d="M0,17.1L-7.97,5.54A9.7,9.7 0 1 1 7.97,5.54Z"/><path fill="#fff" d="M2.2,-6.1L5.3,-1.6H4.2L6.9,2.4H4.4V5.3H2.3V2.4H-1L1.6,-1.6H0.5Z"/><path fill="#fff" stroke="#08643f" stroke-width="1.1" stroke-linejoin="round" paint-order="stroke" d="M-1.7,-6.1L1.4,-1.6H0.3L3,2.4H-0.6V5.3H-2.7V2.4H-6.3L-3.6,-1.6H-4.7Z"/></g>
<g transform="translate(105.0,327.5)"><path fill="#005f7e" d="M0,17.1L-7.97,5.54A9.7,9.7 0 1 1 7.97,5.54Z"/><g transform="translate(-6.32,-5.60) scale(0.575)"><path fill="#fff" fill-rule="evenodd" d="M1,0H19.6Q20.7,0 20.7,1V3.7H19.2L22,7.6V12.7H0V1Q0,0 1,0ZM1.8,4.9V8H8.1V4.9Z M10,4.9V11.2H13.1V4.9Z M16,4.9V8H20.6L18.6,4.9Z"/><path fill="#fff" d="M3.00,13.00a2.9,2.9 0 1,0 5.8,0a2.9,2.9 0 1,0 -5.8,0zM13.90,13.00a2.9,2.9 0 1,0 5.8,0a2.9,2.9 0 1,0 -5.8,0z"/><path fill="#005f7e" d="M4.40,13.00a1.5,1.5 0 1,0 3.0,0a1.5,1.5 0 1,0 -3.0,0zM15.30,13.00a1.5,1.5 0 1,0 3.0,0a1.5,1.5 0 1,0 -3.0,0z"/></g></g>
<g transform="translate(166.0,327.5)"><path fill="#1c62ae" d="M0,17.1L-7.97,5.54A9.7,9.7 0 1 1 7.97,5.54Z"/><text x="-2.9" y="0.6" font-family="Liberation Sans,sans-serif" font-size="10.5" fill="#fff" stroke="#fff" stroke-width="0.4" text-anchor="middle">P</text><text x="2.6" y="5.6" font-family="Liberation Sans,sans-serif" font-size="10.5" fill="#fff" stroke="#fff" stroke-width="0.4" text-anchor="middle">A</text></g>
<g transform="translate(98.5,326.1)"><path fill="#005f7e" d="M0,17.1L-7.97,5.54A9.7,9.7 0 1 1 7.97,5.54Z"/><g transform="translate(-6.32,-5.60) scale(0.575)"><path fill="#fff" fill-rule="evenodd" d="M1,0H19.6Q20.7,0 20.7,1V3.7H19.2L22,7.6V12.7H0V1Q0,0 1,0ZM1.8,4.9V8H8.1V4.9Z M10,4.9V11.2H13.1V4.9Z M16,4.9V8H20.6L18.6,4.9Z"/><path fill="#fff" d="M3.00,13.00a2.9,2.9 0 1,0 5.8,0a2.9,2.9 0 1,0 -5.8,0zM13.90,13.00a2.9,2.9 0 1,0 5.8,0a2.9,2.9 0 1,0 -5.8,0z"/><path fill="#005f7e" d="M4.40,13.00a1.5,1.5 0 1,0 3.0,0a1.5,1.5 0 1,0 -3.0,0zM15.30,13.00a1.5,1.5 0 1,0 3.0,0a1.5,1.5 0 1,0 -3.0,0z"/></g></g>
<g transform="translate(852.9,325.5)"><path fill="#005f7e" d="M0,17.1L-7.97,5.54A9.7,9.7 0 1 1 7.97,5.54Z"/><g transform="translate(-6.32,-5.60) scale(0.575)"><path fill="#fff" fill-rule="evenodd" d="M1,0H19.6Q20.7,0 20.7,1V3.7H19.2L22,7.6V12.7H0V1Q0,0 1,0ZM1.8,4.9V8H8.1V4.9Z M10,4.9V11.2H13.1V4.9Z M16,4.9V8H20.6L18.6,4.9Z"/><path fill="#fff" d="M3.00,13.00a2.9,2.9 0 1,0 5.8,0a2.9,2.9 0 1,0 -5.8,0zM13.90,13.00a2.9,2.9 0 1,0 5.8,0a2.9,2.9 0 1,0 -5.8,0z"/><path fill="#005f7e" d="M4.40,13.00a1.5,1.5 0 1,0 3.0,0a1.5,1.5 0 1,0 -3.0,0zM15.30,13.00a1.5,1.5 0 1,0 3.0,0a1.5,1.5 0 1,0 -3.0,0z"/></g></g>
<g transform="translate(268.1,324.9)"><path fill="#005f7e" d="M0,17.1L-7.97,5.54A9.7,9.7 0 1 1 7.97,5.54Z"/><g transform="translate(-6.32,-5.60) scale(0.575)"><path fill="#fff" fill-rule="evenodd" d="M1,0H19.6Q20.7,0 20.7,1V3.7H19.2L22,7.6V12.7H0V1Q0,0 1,0ZM1.8,4.9V8H8.1V4.9Z M10,4.9V11.2H13.1V4.9Z M16,4.9V8H20.6L18.6,4.9Z"/><path fill="#fff" d="M3.00,13.00a2.9,2.9 0 1,0 5.8,0a2.9,2.9 0 1,0 -5.8,0zM13.90,13.00a2.9,2.9 0 1,0 5.8,0a2.9,2.9 0 1,0 -5.8,0z"/><path fill="#005f7e" d="M4.40,13.00a1.5,1.5 0 1,0 3.0,0a1.5,1.5 0 1,0 -3.0,0zM15.30,13.00a1.5,1.5 0 1,0 3.0,0a1.5,1.5 0 1,0 -3.0,0z"/></g></g>
<g transform="translate(568.1,324.2)"><path fill="#08643f" d="M0,17.1L-7.97,5.54A9.7,9.7 0 1 1 7.97,5.54Z"/><path fill="#fff" d="M2.2,-6.1L5.3,-1.6H4.2L6.9,2.4H4.4V5.3H2.3V2.4H-1L1.6,-1.6H0.5Z"/><path fill="#fff" stroke="#08643f" stroke-width="1.1" stroke-linejoin="round" paint-order="stroke" d="M-1.7,-6.1L1.4,-1.6H0.3L3,2.4H-0.6V5.3H-2.7V2.4H-6.3L-3.6,-1.6H-4.7Z"/></g>
<g transform="translate(144.5,323.5)"><path fill="#08643f" d="M0,17.1L-7.97,5.54A9.7,9.7 0 1 1 7.97,5.54Z"/><path fill="#fff" d="M2.2,-6.1L5.3,-1.6H4.2L6.9,2.4H4.4V5.3H2.3V2.4H-1L1.6,-1.6H0.5Z"/><path fill="#fff" stroke="#08643f" stroke-width="1.1" stroke-linejoin="round" paint-order="stroke" d="M-1.7,-6.1L1.4,-1.6H0.3L3,2.4H-0.6V5.3H-2.7V2.4H-6.3L-3.6,-1.6H-4.7Z"/></g>
<g transform="translate(226.5,323.5)"><path fill="#005f7e" d="M0,17.1L-7.97,5.54A9.7,9.7 0 1 1 7.97,5.54Z"/><path fill="#fff" fill-rule="evenodd" d="M-5,-5.9H3.4V4.3H-5Z M-4.2,-5V-1.3H2.6V-5Z M-2.2,1.8V2.7H0.8V1.8Z"/><path stroke="#fff" stroke-width="0.5" d="M-3,-4.6V-2.6M-1.7,-4.6V-2.6M-0.4,-4.6V-2.6M0.9,-4.6V-2.6"/><path fill="none" stroke="#fff" stroke-width="0.8" d="M3.4,2.2H5.5V-6.3"/></g>
<g transform="translate(177.5,321.2)"><path fill="#005f7e" d="M0,17.1L-7.97,5.54A9.7,9.7 0 1 1 7.97,5.54Z"/><g transform="translate(-6.32,-5.60) scale(0.575)"><path fill="#fff" fill-rule="evenodd" d="M1,0H19.6Q20.7,0 20.7,1V3.7H19.2L22,7.6V12.7H0V1Q0,0 1,0ZM1.8,4.9V8H8.1V4.9Z M10,4.9V11.2H13.1V4.9Z M16,4.9V8H20.6L18.6,4.9Z"/><path fill="#fff" d="M3.00,13.00a2.9,2.9 0 1,0 5.8,0a2.9,2.9 0 1,0 -5.8,0zM13.90,13.00a2.9,2.9 0 1,0 5.8,0a2.9,2.9 0 1,0 -5.8,0z"/><path fill="#005f7e" d="M4.40,13.00a1.5,1.5 0 1,0 3.0,0a1.5,1.5 0 1,0 -3.0,0zM15.30,13.00a1.5,1.5 0 1,0 3.0,0a1.5,1.5 0 1,0 -3.0,0z"/></g></g>
<g transform="translate(785.5,321.0)"><path fill="#fdd835" d="M0,17.1L-7.97,5.54A9.7,9.7 0 1 1 7.97,5.54Z"/><path d="M-3.9,-6.7L4.3,2.4M3.3,-6.7L-4.9,2.4" stroke="#ee3524" stroke-width="1.8" fill="none"/><path d="M-2,2.9L-0.5,0.4L1,2.9Z" fill="#111"/><text x="-0.3" y="5.2" font-family="Liberation Sans,sans-serif" font-size="3.4" font-weight="bold" fill="#111" stroke="#111" stroke-width="0.3" text-anchor="middle" textLength="10.5" lengthAdjust="spacingAndGlyphs">KOA</text></g>
<g transform="translate(243.2,318.5)"><path fill="#1c62ae" d="M0,17.1L-7.97,5.54A9.7,9.7 0 1 1 7.97,5.54Z"/><text x="-2.9" y="0.6" font-family="Liberation Sans,sans-serif" font-size="10.5" fill="#fff" stroke="#fff" stroke-width="0.4" text-anchor="middle">P</text><text x="2.6" y="5.6" font-family="Liberation Sans,sans-serif" font-size="10.5" fill="#fff" stroke="#fff" stroke-width="0.4" text-anchor="middle">A</text></g>
<g transform="translate(87.5,315.0)"><path fill="#005f7e" d="M0,17.1L-7.97,5.54A9.7,9.7 0 1 1 7.97,5.54Z"/><g transform="translate(-6.32,-5.60) scale(0.575)"><path fill="#fff" fill-rule="evenodd" d="M1,0H19.6Q20.7,0 20.7,1V3.7H19.2L22,7.6V12.7H0V1Q0,0 1,0ZM1.8,4.9V8H8.1V4.9Z M10,4.9V11.2H13.1V4.9Z M16,4.9V8H20.6L18.6,4.9Z"/><path fill="#fff" d="M3.00,13.00a2.9,2.9 0 1,0 5.8,0a2.9,2.9 0 1,0 -5.8,0zM13.90,13.00a2.9,2.9 0 1,0 5.8,0a2.9,2.9 0 1,0 -5.8,0z"/><path fill="#005f7e" d="M4.40,13.00a1.5,1.5 0 1,0 3.0,0a1.5,1.5 0 1,0 -3.0,0zM15.30,13.00a1.5,1.5 0 1,0 3.0,0a1.5,1.5 0 1,0 -3.0,0z"/></g></g>
<g transform="translate(811.5,313.5)"><path fill="#005f7e" d="M0,17.1L-7.97,5.54A9.7,9.7 0 1 1 7.97,5.54Z"/><g transform="translate(-6.32,-5.60) scale(0.575)"><path fill="#fff" fill-rule="evenodd" d="M1,0H19.6Q20.7,0 20.7,1V3.7H19.2L22,7.6V12.7H0V1Q0,0 1,0ZM1.8,4.9V8H8.1V4.9Z M10,4.9V11.2H13.1V4.9Z M16,4.9V8H20.6L18.6,4.9Z"/><path fill="#fff" d="M3.00,13.00a2.9,2.9 0 1,0 5.8,0a2.9,2.9 0 1,0 -5.8,0zM13.90,13.00a2.9,2.9 0 1,0 5.8,0a2.9,2.9 0 1,0 -5.8,0z"/><path fill="#005f7e" d="M4.40,13.00a1.5,1.5 0 1,0 3.0,0a1.5,1.5 0 1,0 -3.0,0zM15.30,13.00a1.5,1.5 0 1,0 3.0,0a1.5,1.5 0 1,0 -3.0,0z"/></g></g>
<g transform="translate(787.1,310.5)"><path fill="#176fc1" d="M0,17.1L-7.97,5.54A9.7,9.7 0 1 1 7.97,5.54Z"/><path d="M-1.9,-2.2A1.9,1.9 0 0 1 1.9,-2.2Z" fill="#f5c542"/><path d="M-2.25,-3.50L-3.98,-4.50M-1.30,-4.45L-2.30,-6.18M0.00,-4.80L0.00,-6.80M1.30,-4.45L2.30,-6.18M2.25,-3.50L3.98,-4.50" stroke="#f5c542" stroke-width="0.8" fill="none"/><text x="0" y="5.6" font-family="Liberation Serif,serif" font-size="9.5" fill="#fff" text-anchor="middle">E</text></g>
<g transform="translate(660.5,310.0)"><path fill="#005f7e" d="M0,17.1L-7.97,5.54A9.7,9.7 0 1 1 7.97,5.54Z"/><g transform="translate(-6.32,-5.60) scale(0.575)"><path fill="#fff" fill-rule="evenodd" d="M1,0H19.6Q20.7,0 20.7,1V3.7H19.2L22,7.6V12.7H0V1Q0,0 1,0ZM1.8,4.9V8H8.1V4.9Z M10,4.9V11.2H13.1V4.9Z M16,4.9V8H20.6L18.6,4.9Z"/><path fill="#fff" d="M3.00,13.00a2.9,2.9 0 1,0 5.8,0a2.9,2.9 0 1,0 -5.8,0zM13.90,13.00a2.9,2.9 0 1,0 5.8,0a2.9,2.9 0 1,0 -5.8,0z"/><path fill="#005f7e" d="M4.40,13.00a1.5,1.5 0 1,0 3.0,0a1.5,1.5 0 1,0 -3.0,0zM15.30,13.00a1.5,1.5 0 1,0 3.0,0a1.5,1.5 0 1,0 -3.0,0z"/></g></g>
<g transform="translate(330.9,308.0)"><path fill="#005f7e" d="M0,17.1L-7.97,5.54A9.7,9.7 0 1 1 7.97,5.54Z"/><g transform="translate(-6.32,-5.60) scale(0.575)"><path fill="#fff" fill-rule="evenodd" d="M1,0H19.6Q20.7,0 20.7,1V3.7H19.2L22,7.6V12.7H0V1Q0,0 1,0ZM1.8,4.9V8H8.1V4.9Z M10,4.9V11.2H13.1V4.9Z M16,4.9V8H20.6L18.6,4.9Z"/><path fill="#fff" d="M3.00,13.00a2.9,2.9 0 1,0 5.8,0a2.9,2.9 0 1,0 -5.8,0zM13.90,13.00a2.9,2.9 0 1,0 5.8,0a2.9,2.9 0 1,0 -5.8,0z"/><path fill="#005f7e" d="M4.40,13.00a1.5,1.5 0 1,0 3.0,0a1.5,1.5 0 1,0 -3.0,0zM15.30,13.00a1.5,1.5 0 1,0 3.0,0a1.5,1.5 0 1,0 -3.0,0z"/></g></g>
<g transform="translate(803.1,306.3)"><path fill="#08643f" d="M0,17.1L-7.97,5.54A9.7,9.7 0 1 1 7.97,5.54Z"/><path fill="#fff" d="M2.2,-6.1L5.3,-1.6H4.2L6.9,2.4H4.4V5.3H2.3V2.4H-1L1.6,-1.6H0.5Z"/><path fill="#fff" stroke="#08643f" stroke-width="1.1" stroke-linejoin="round" paint-order="stroke" d="M-1.7,-6.1L1.4,-1.6H0.3L3,2.4H-0.6V5.3H-2.7V2.4H-6.3L-3.6,-1.6H-4.7Z"/></g>
<g transform="translate(4.2,306.2)"><path fill="#005f7e" d="M0,17.1L-7.97,5.54A9.7,9.7 0 1 1 7.97,5.54Z"/><g transform="translate(-6.32,-5.60) scale(0.575)"><path fill="#fff" fill-rule="evenodd" d="M1,0H19.6Q20.7,0 20.7,1V3.7H19.2L22,7.6V12.7H0V1Q0,0 1,0ZM1.8,4.9V8H8.1V4.9Z M10,4.9V11.2H13.1V4.9Z M16,4.9V8H20.6L18.6,4.9Z"/><path fill="#fff" d="M3.00,13.00a2.9,2.9 0 1,0 5.8,0a2.9,2.9 0 1,0 -5.8,0zM13.90,13.00a2.9,2.9 0 1,0 5.8,0a2.9,2.9 0 1,0 -5.8,0z"/><path fill="#005f7e" d="M4.40,13.00a1.5,1.5 0 1,0 3.0,0a1.5,1.5 0 1,0 -3.0,0zM15.30,13.00a1.5,1.5 0 1,0 3.0,0a1.5,1.5 0 1,0 -3.0,0z"/></g></g>
<g transform="translate(77.5,305.0)"><path fill="#1c62ae" d="M0,17.1L-7.97,5.54A9.7,9.7 0 1 1 7.97,5.54Z"/><text x="-2.9" y="0.6" font-family="Liberation Sans,sans-serif" font-size="10.5" fill="#fff" stroke="#fff" stroke-width="0.4" text-anchor="middle">P</text><text x="2.6" y="5.6" font-family="Liberation Sans,sans-serif" font-size="10.5" fill="#fff" stroke="#fff" stroke-width="0.4" text-anchor="middle">A</text></g>
<g transform="translate(679.3,302.5)"><path fill="#005f7e" d="M0,17.1L-7.97,5.54A9.7,9.7 0 1 1 7.97,5.54Z"/><g transform="translate(-6.32,-5.60) scale(0.575)"><path fill="#fff" fill-rule="evenodd" d="M1,0H19.6Q20.7,0 20.7,1V3.7H19.2L22,7.6V12.7H0V1Q0,0 1,0ZM1.8,4.9V8H8.1V4.9Z M10,4.9V11.2H13.1V4.9Z M16,4.9V8H20.6L18.6,4.9Z"/><path fill="#fff" d="M3.00,13.00a2.9,2.9 0 1,0 5.8,0a2.9,2.9 0 1,0 -5.8,0zM13.90,13.00a2.9,2.9 0 1,0 5.8,0a2.9,2.9 0 1,0 -5.8,0z"/><path fill="#005f7e" d="M4.40,13.00a1.5,1.5 0 1,0 3.0,0a1.5,1.5 0 1,0 -3.0,0zM15.30,13.00a1.5,1.5 0 1,0 3.0,0a1.5,1.5 0 1,0 -3.0,0z"/></g></g>
<g transform="translate(852.3,300.0)"><path fill="#005f7e" d="M0,17.1L-7.97,5.54A9.7,9.7 0 1 1 7.97,5.54Z"/><g transform="translate(-6.32,-5.60) scale(0.575)"><path fill="#fff" fill-rule="evenodd" d="M1,0H19.6Q20.7,0 20.7,1V3.7H19.2L22,7.6V12.7H0V1Q0,0 1,0ZM1.8,4.9V8H8.1V4.9Z M10,4.9V11.2H13.1V4.9Z M16,4.9V8H20.6L18.6,4.9Z"/><path fill="#fff" d="M3.00,13.00a2.9,2.9 0 1,0 5.8,0a2.9,2.9 0 1,0 -5.8,0zM13.90,13.00a2.9,2.9 0 1,0 5.8,0a2.9,2.9 0 1,0 -5.8,0z"/><path fill="#005f7e" d="M4.40,13.00a1.5,1.5 0 1,0 3.0,0a1.5,1.5 0 1,0 -3.0,0zM15.30,13.00a1.5,1.5 0 1,0 3.0,0a1.5,1.5 0 1,0 -3.0,0z"/></g></g>
<g transform="translate(248.2,296.5)"><path fill="#1c62ae" d="M0,17.1L-7.97,5.54A9.7,9.7 0 1 1 7.97,5.54Z"/><text x="-2.9" y="0.6" font-family="Liberation Sans,sans-serif" font-size="10.5" fill="#fff" stroke="#fff" stroke-width="0.4" text-anchor="middle">P</text><text x="2.6" y="5.6" font-family="Liberation Sans,sans-serif" font-size="10.5" fill="#fff" stroke="#fff" stroke-width="0.4" text-anchor="middle">A</text></g>
<g transform="translate(64.0,294.0)"><path fill="#c8102e" d="M0,17.1L-7.97,5.54A9.7,9.7 0 1 1 7.97,5.54Z"/><text x="0" y="5.2" font-family="Liberation Sans,sans-serif" font-size="12.6" font-weight="bold" fill="#fff" text-anchor="middle" textLength="12" lengthAdjust="spacingAndGlyphs">GS</text><ellipse cx="-2.9" cy="-5.3" rx="4.2" ry="1.6" transform="rotate(-12 -2.9 -5.3)" stroke="#ffc61a" stroke-width="0.8" fill="none"/></g>
<g transform="translate(67.2,293.0)"><path fill="#005f7e" d="M0,17.1L-7.97,5.54A9.7,9.7 0 1 1 7.97,5.54Z"/><g transform="translate(-6.32,-5.60) scale(0.575)"><path fill="#fff" fill-rule="evenodd" d="M1,0H19.6Q20.7,0 20.7,1V3.7H19.2L22,7.6V12.7H0V1Q0,0 1,0ZM1.8,4.9V8H8.1V4.9Z M10,4.9V11.2H13.1V4.9Z M16,4.9V8H20.6L18.6,4.9Z"/><path fill="#fff" d="M3.00,13.00a2.9,2.9 0 1,0 5.8,0a2.9,2.9 0 1,0 -5.8,0zM13.90,13.00a2.9,2.9 0 1,0 5.8,0a2.9,2.9 0 1,0 -5.8,0z"/><path fill="#005f7e" d="M4.40,13.00a1.5,1.5 0 1,0 3.0,0a1.5,1.5 0 1,0 -3.0,0zM15.30,13.00a1.5,1.5 0 1,0 3.0,0a1.5,1.5 0 1,0 -3.0,0z"/></g></g>
<g transform="translate(139.5,292.5)"><path fill="#08643f" d="M0,17.1L-7.97,5.54A9.7,9.7 0 1 1 7.97,5.54Z"/><path fill="#fff" d="M2.2,-6.1L5.3,-1.6H4.2L6.9,2.4H4.4V5.3H2.3V2.4H-1L1.6,-1.6H0.5Z"/><path fill="#fff" stroke="#08643f" stroke-width="1.1" stroke-linejoin="round" paint-order="stroke" d="M-1.7,-6.1L1.4,-1.6H0.3L3,2.4H-0.6V5.3H-2.7V2.4H-6.3L-3.6,-1.6H-4.7Z"/></g>
<g transform="translate(788.1,292.5)"><path fill="#005f7e" d="M0,17.1L-7.97,5.54A9.7,9.7 0 1 1 7.97,5.54Z"/><g transform="translate(-6.32,-5.60) scale(0.575)"><path fill="#fff" fill-rule="evenodd" d="M1,0H19.6Q20.7,0 20.7,1V3.7H19.2L22,7.6V12.7H0V1Q0,0 1,0ZM1.8,4.9V8H8.1V4.9Z M10,4.9V11.2H13.1V4.9Z M16,4.9V8H20.6L18.6,4.9Z"/><path fill="#fff" d="M3.00,13.00a2.9,2.9 0 1,0 5.8,0a2.9,2.9 0 1,0 -5.8,0zM13.90,13.00a2.9,2.9 0 1,0 5.8,0a2.9,2.9 0 1,0 -5.8,0z"/><path fill="#005f7e" d="M4.40,13.00a1.5,1.5 0 1,0 3.0,0a1.5,1.5 0 1,0 -3.0,0zM15.30,13.00a1.5,1.5 0 1,0 3.0,0a1.5,1.5 0 1,0 -3.0,0z"/></g></g>
<g transform="translate(782.4,291.5)"><path fill="#c8102e" d="M0,17.1L-7.97,5.54A9.7,9.7 0 1 1 7.97,5.54Z"/><text x="0" y="5.2" font-family="Liberation Sans,sans-serif" font-size="12.6" font-weight="bold" fill="#fff" text-anchor="middle" textLength="12" lengthAdjust="spacingAndGlyphs">GS</text><ellipse cx="-2.9" cy="-5.3" rx="4.2" ry="1.6" transform="rotate(-12 -2.9 -5.3)" stroke="#ffc61a" stroke-width="0.8" fill="none"/></g>
<g transform="translate(836.5,290.1)"><path fill="#005f7e" d="M0,17.1L-7.97,5.54A9.7,9.7 0 1 1 7.97,5.54Z"/><g transform="translate(-6.32,-5.60) scale(0.575)"><path fill="#fff" fill-rule="evenodd" d="M1,0H19.6Q20.7,0 20.7,1V3.7H19.2L22,7.6V12.7H0V1Q0,0 1,0ZM1.8,4.9V8H8.1V4.9Z M10,4.9V11.2H13.1V4.9Z M16,4.9V8H20.6L18.6,4.9Z"/><path fill="#fff" d="M3.00,13.00a2.9,2.9 0 1,0 5.8,0a2.9,2.9 0 1,0 -5.8,0zM13.90,13.00a2.9,2.9 0 1,0 5.8,0a2.9,2.9 0 1,0 -5.8,0z"/><path fill="#005f7e" d="M4.40,13.00a1.5,1.5 0 1,0 3.0,0a1.5,1.5 0 1,0 -3.0,0zM15.30,13.00a1.5,1.5 0 1,0 3.0,0a1.5,1.5 0 1,0 -3.0,0z"/></g></g>
<g transform="translate(872.5,288.5)"><path fill="#005f7e" d="M0,17.1L-7.97,5.54A9.7,9.7 0 1 1 7.97,5.54Z"/><g transform="translate(-6.32,-5.60) scale(0.575)"><path fill="#fff" fill-rule="evenodd" d="M1,0H19.6Q20.7,0 20.7,1V3.7H19.2L22,7.6V12.7H0V1Q0,0 1,0ZM1.8,4.9V8H8.1V4.9Z M10,4.9V11.2H13.1V4.9Z M16,4.9V8H20.6L18.6,4.9Z"/><path fill="#fff" d="M3.00,13.00a2.9,2.9 0 1,0 5.8,0a2.9,2.9 0 1,0 -5.8,0zM13.90,13.00a2.9,2.9 0 1,0 5.8,0a2.9,2.9 0 1,0 -5.8,0z"/><path fill="#005f7e" d="M4.40,13.00a1.5,1.5 0 1,0 3.0,0a1.5,1.5 0 1,0 -3.0,0zM15.30,13.00a1.5,1.5 0 1,0 3.0,0a1.5,1.5 0 1,0 -3.0,0z"/></g></g>
<g transform="translate(330.5,286.5)"><path fill="#005f7e" d="M0,17.1L-7.97,5.54A9.7,9.7 0 1 1 7.97,5.54Z"/><g transform="translate(-6.32,-5.60) scale(0.575)"><path fill="#fff" fill-rule="evenodd" d="M1,0H19.6Q20.7,0 20.7,1V3.7H19.2L22,7.6V12.7H0V1Q0,0 1,0ZM1.8,4.9V8H8.1V4.9Z M10,4.9V11.2H13.1V4.9Z M16,4.9V8H20.6L18.6,4.9Z"/><path fill="#fff" d="M3.00,13.00a2.9,2.9 0 1,0 5.8,0a2.9,2.9 0 1,0 -5.8,0zM13.90,13.00a2.9,2.9 0 1,0 5.8,0a2.9,2.9 0 1,0 -5.8,0z"/><path fill="#005f7e" d="M4.40,13.00a1.5,1.5 0 1,0 3.0,0a1.5,1.5 0 1,0 -3.0,0zM15.30,13.00a1.5,1.5 0 1,0 3.0,0a1.5,1.5 0 1,0 -3.0,0z"/></g></g>
<g transform="translate(361.0,284.5)"><path fill="#005f7e" d="M0,17.1L-7.97,5.54A9.7,9.7 0 1 1 7.97,5.54Z"/><g transform="translate(-6.32,-5.60) scale(0.575)"><path fill="#fff" fill-rule="evenodd" d="M1,0H19.6Q20.7,0 20.7,1V3.7H19.2L22,7.6V12.7H0V1Q0,0 1,0ZM1.8,4.9V8H8.1V4.9Z M10,4.9V11.2H13.1V4.9Z M16,4.9V8H20.6L18.6,4.9Z"/><path fill="#fff" d="M3.00,13.00a2.9,2.9 0 1,0 5.8,0a2.9,2.9 0 1,0 -5.8,0zM13.90,13.00a2.9,2.9 0 1,0 5.8,0a2.9,2.9 0 1,0 -5.8,0z"/><path fill="#005f7e" d="M4.40,13.00a1.5,1.5 0 1,0 3.0,0a1.5,1.5 0 1,0 -3.0,0zM15.30,13.00a1.5,1.5 0 1,0 3.0,0a1.5,1.5 0 1,0 -3.0,0z"/></g></g>
<g transform="translate(768.2,280.4)"><path fill="#c8102e" d="M0,17.1L-7.97,5.54A9.7,9.7 0 1 1 7.97,5.54Z"/><text x="0" y="5.2" font-family="Liberation Sans,sans-serif" font-size="12.6" font-weight="bold" fill="#fff" text-anchor="middle" textLength="12" lengthAdjust="spacingAndGlyphs">GS</text><ellipse cx="-2.9" cy="-5.3" rx="4.2" ry="1.6" transform="rotate(-12 -2.9 -5.3)" stroke="#ffc61a" stroke-width="0.8" fill="none"/></g>
<g transform="translate(754.1,279.8)"><path fill="#176fc1" d="M0,17.1L-7.97,5.54A9.7,9.7 0 1 1 7.97,5.54Z"/><path d="M-1.9,-2.2A1.9,1.9 0 0 1 1.9,-2.2Z" fill="#f5c542"/><path d="M-2.25,-3.50L-3.98,-4.50M-1.30,-4.45L-2.30,-6.18M0.00,-4.80L0.00,-6.80M1.30,-4.45L2.30,-6.18M2.25,-3.50L3.98,-4.50" stroke="#f5c542" stroke-width="0.8" fill="none"/><text x="0" y="5.6" font-family="Liberation Serif,serif" font-size="9.5" fill="#fff" text-anchor="middle">E</text></g>
<g transform="translate(742.9,278.0)"><path fill="#08644c" d="M0,17.1L-7.97,5.54A9.7,9.7 0 1 1 7.97,5.54Z"/><text x="-3.3" y="1.2" font-family="Liberation Serif,serif" font-size="10.5" fill="#fff" text-anchor="middle">T</text><text x="0.2" y="3.8" font-family="Liberation Serif,serif" font-size="10.5" fill="#fff" text-anchor="middle">B</text><text x="3.6" y="6.3" font-family="Liberation Serif,serif" font-size="10.5" fill="#fff" text-anchor="middle">C</text></g>
<g transform="translate(724.5,277.5)"><path fill="#005f7e" d="M0,17.1L-7.97,5.54A9.7,9.7 0 1 1 7.97,5.54Z"/><path fill="#fff" fill-rule="evenodd" d="M-5,-5.9H3.4V4.3H-5Z M-4.2,-5V-1.3H2.6V-5Z M-2.2,1.8V2.7H0.8V1.8Z"/><path stroke="#fff" stroke-width="0.5" d="M-3,-4.6V-2.6M-1.7,-4.6V-2.6M-0.4,-4.6V-2.6M0.9,-4.6V-2.6"/><path fill="none" stroke="#fff" stroke-width="0.8" d="M3.4,2.2H5.5V-6.3"/></g>
<g transform="translate(720.9,276.5)"><path fill="#005f7e" d="M0,17.1L-7.97,5.54A9.7,9.7 0 1 1 7.97,5.54Z"/><path fill="#fff" fill-rule="evenodd" d="M-5,-5.9H3.4V4.3H-5Z M-4.2,-5V-1.3H2.6V-5Z M-2.2,1.8V2.7H0.8V1.8Z"/><path stroke="#fff" stroke-width="0.5" d="M-3,-4.6V-2.6M-1.7,-4.6V-2.6M-0.4,-4.6V-2.6M0.9,-4.6V-2.6"/><path fill="none" stroke="#fff" stroke-width="0.8" d="M3.4,2.2H5.5V-6.3"/></g>
<g transform="translate(322.2,275.1)"><path fill="#005f7e" d="M0,17.1L-7.97,5.54A9.7,9.7 0 1 1 7.97,5.54Z"/><g transform="translate(-6.32,-5.60) scale(0.575)"><path fill="#fff" fill-rule="evenodd" d="M1,0H19.6Q20.7,0 20.7,1V3.7H19.2L22,7.6V12.7H0V1Q0,0 1,0ZM1.8,4.9V8H8.1V4.9Z M10,4.9V11.2H13.1V4.9Z M16,4.9V8H20.6L18.6,4.9Z"/><path fill="#fff" d="M3.00,13.00a2.9,2.9 0 1,0 5.8,0a2.9,2.9 0 1,0 -5.8,0zM13.90,13.00a2.9,2.9 0 1,0 5.8,0a2.9,2.9 0 1,0 -5.8,0z"/><path fill="#005f7e" d="M4.40,13.00a1.5,1.5 0 1,0 3.0,0a1.5,1.5 0 1,0 -3.0,0zM15.30,13.00a1.5,1.5 0 1,0 3.0,0a1.5,1.5 0 1,0 -3.0,0z"/></g></g>
<g transform="translate(230.5,272.5)"><path fill="#005f7e" d="M0,17.1L-7.97,5.54A9.7,9.7 0 1 1 7.97,5.54Z"/><g transform="translate(-6.32,-5.60) scale(0.575)"><path fill="#fff" fill-rule="evenodd" d="M1,0H19.6Q20.7,0 20.7,1V3.7H19.2L22,7.6V12.7H0V1Q0,0 1,0ZM1.8,4.9V8H8.1V4.9Z M10,4.9V11.2H13.1V4.9Z M16,4.9V8H20.6L18.6,4.9Z"/><path fill="#fff" d="M3.00,13.00a2.9,2.9 0 1,0 5.8,0a2.9,2.9 0 1,0 -5.8,0zM13.90,13.00a2.9,2.9 0 1,0 5.8,0a2.9,2.9 0 1,0 -5.8,0z"/><path fill="#005f7e" d="M4.40,13.00a1.5,1.5 0 1,0 3.0,0a1.5,1.5 0 1,0 -3.0,0zM15.30,13.00a1.5,1.5 0 1,0 3.0,0a1.5,1.5 0 1,0 -3.0,0z"/></g></g>
<g transform="translate(146.1,270.5)"><path fill="#08643f" d="M0,17.1L-7.97,5.54A9.7,9.7 0 1 1 7.97,5.54Z"/><path fill="#fff" d="M2.2,-6.1L5.3,-1.6H4.2L6.9,2.4H4.4V5.3H2.3V2.4H-1L1.6,-1.6H0.5Z"/><path fill="#fff" stroke="#08643f" stroke-width="1.1" stroke-linejoin="round" paint-order="stroke" d="M-1.7,-6.1L1.4,-1.6H0.3L3,2.4H-0.6V5.3H-2.7V2.4H-6.3L-3.6,-1.6H-4.7Z"/></g>
<g transform="translate(702.2,270.2)"><path fill="#005f7e" d="M0,17.1L-7.97,5.54A9.7,9.7 0 1 1 7.97,5.54Z"/><path fill="#fff" fill-rule="evenodd" d="M-5,-5.9H3.4V4.3H-5Z M-4.2,-5V-1.3H2.6V-5Z M-2.2,1.8V2.7H0.8V1.8Z"/><path stroke="#fff" stroke-width="0.5" d="M-3,-4.6V-2.6M-1.7,-4.6V-2.6M-0.4,-4.6V-2.6M0.9,-4.6V-2.6"/><path fill="none" stroke="#fff" stroke-width="0.8" d="M3.4,2.2H5.5V-6.3"/></g>
<g transform="translate(155.5,266.5)"><path fill="#005f7e" d="M0,17.1L-7.97,5.54A9.7,9.7 0 1 1 7.97,5.54Z"/><g transform="translate(-6.32,-5.60) scale(0.575)"><path fill="#fff" fill-rule="evenodd" d="M1,0H19.6Q20.7,0 20.7,1V3.7H19.2L22,7.6V12.7H0V1Q0,0 1,0ZM1.8,4.9V8H8.1V4.9Z M10,4.9V11.2H13.1V4.9Z M16,4.9V8H20.6L18.6,4.9Z"/><path fill="#fff" d="M3.00,13.00a2.9,2.9 0 1,0 5.8,0a2.9,2.9 0 1,0 -5.8,0zM13.90,13.00a2.9,2.9 0 1,0 5.8,0a2.9,2.9 0 1,0 -5.8,0z"/><path fill="#005f7e" d="M4.40,13.00a1.5,1.5 0 1,0 3.0,0a1.5,1.5 0 1,0 -3.0,0zM15.30,13.00a1.5,1.5 0 1,0 3.0,0a1.5,1.5 0 1,0 -3.0,0z"/></g></g>
<g transform="translate(254.5,255.5)"><path fill="#005f7e" d="M0,17.1L-7.97,5.54A9.7,9.7 0 1 1 7.97,5.54Z"/><g transform="translate(-6.32,-5.60) scale(0.575)"><path fill="#fff" fill-rule="evenodd" d="M1,0H19.6Q20.7,0 20.7,1V3.7H19.2L22,7.6V12.7H0V1Q0,0 1,0ZM1.8,4.9V8H8.1V4.9Z M10,4.9V11.2H13.1V4.9Z M16,4.9V8H20.6L18.6,4.9Z"/><path fill="#fff" d="M3.00,13.00a2.9,2.9 0 1,0 5.8,0a2.9,2.9 0 1,0 -5.8,0zM13.90,13.00a2.9,2.9 0 1,0 5.8,0a2.9,2.9 0 1,0 -5.8,0z"/><path fill="#005f7e" d="M4.40,13.00a1.5,1.5 0 1,0 3.0,0a1.5,1.5 0 1,0 -3.0,0zM15.30,13.00a1.5,1.5 0 1,0 3.0,0a1.5,1.5 0 1,0 -3.0,0z"/></g></g>
<g transform="translate(52.5,250.5)"><path fill="#08643f" d="M0,17.1L-7.97,5.54A9.7,9.7 0 1 1 7.97,5.54Z"/><path fill="#fff" d="M2.2,-6.1L5.3,-1.6H4.2L6.9,2.4H4.4V5.3H2.3V2.4H-1L1.6,-1.6H0.5Z"/><path fill="#fff" stroke="#08643f" stroke-width="1.1" stroke-linejoin="round" paint-order="stroke" d="M-1.7,-6.1L1.4,-1.6H0.3L3,2.4H-0.6V5.3H-2.7V2.4H-6.3L-3.6,-1.6H-4.7Z"/></g>
<g transform="translate(744.1,250.2)"><path fill="#005f7e" d="M0,17.1L-7.97,5.54A9.7,9.7 0 1 1 7.97,5.54Z"/><g transform="translate(-6.32,-5.60) scale(0.575)"><path fill="#fff" fill-rule="evenodd" d="M1,0H19.6Q20.7,0 20.7,1V3.7H19.2L22,7.6V12.7H0V1Q0,0 1,0ZM1.8,4.9V8H8.1V4.9Z M10,4.9V11.2H13.1V4.9Z M16,4.9V8H20.6L18.6,4.9Z"/><path fill="#fff" d="M3.00,13.00a2.9,2.9 0 1,0 5.8,0a2.9,2.9 0 1,0 -5.8,0zM13.90,13.00a2.9,2.9 0 1,0 5.8,0a2.9,2.9 0 1,0 -5.8,0z"/><path fill="#005f7e" d="M4.40,13.00a1.5,1.5 0 1,0 3.0,0a1.5,1.5 0 1,0 -3.0,0zM15.30,13.00a1.5,1.5 0 1,0 3.0,0a1.5,1.5 0 1,0 -3.0,0z"/></g></g>
<g transform="translate(80.5,239.0)"><path fill="#005f7e" d="M0,17.1L-7.97,5.54A9.7,9.7 0 1 1 7.97,5.54Z"/><g transform="translate(-6.32,-5.60) scale(0.575)"><path fill="#fff" fill-rule="evenodd" d="M1,0H19.6Q20.7,0 20.7,1V3.7H19.2L22,7.6V12.7H0V1Q0,0 1,0ZM1.8,4.9V8H8.1V4.9Z M10,4.9V11.2H13.1V4.9Z M16,4.9V8H20.6L18.6,4.9Z"/><path fill="#fff" d="M3.00,13.00a2.9,2.9 0 1,0 5.8,0a2.9,2.9 0 1,0 -5.8,0zM13.90,13.00a2.9,2.9 0 1,0 5.8,0a2.9,2.9 0 1,0 -5.8,0z"/><path fill="#005f7e" d="M4.40,13.00a1.5,1.5 0 1,0 3.0,0a1.5,1.5 0 1,0 -3.0,0zM15.30,13.00a1.5,1.5 0 1,0 3.0,0a1.5,1.5 0 1,0 -3.0,0z"/></g></g>
<g transform="translate(72.5,236.5)"><path fill="#005f7e" d="M0,17.1L-7.97,5.54A9.7,9.7 0 1 1 7.97,5.54Z"/><g transform="translate(-6.32,-5.60) scale(0.575)"><path fill="#fff" fill-rule="evenodd" d="M1,0H19.6Q20.7,0 20.7,1V3.7H19.2L22,7.6V12.7H0V1Q0,0 1,0ZM1.8,4.9V8H8.1V4.9Z M10,4.9V11.2H13.1V4.9Z M16,4.9V8H20.6L18.6,4.9Z"/><path fill="#fff" d="M3.00,13.00a2.9,2.9 0 1,0 5.8,0a2.9,2.9 0 1,0 -5.8,0zM13.90,13.00a2.9,2.9 0 1,0 5.8,0a2.9,2.9 0 1,0 -5.8,0z"/><path fill="#005f7e" d="M4.40,13.00a1.5,1.5 0 1,0 3.0,0a1.5,1.5 0 1,0 -3.0,0zM15.30,13.00a1.5,1.5 0 1,0 3.0,0a1.5,1.5 0 1,0 -3.0,0z"/></g></g>
<g transform="translate(318.5,235.5)"><path fill="#08643f" d="M0,17.1L-7.97,5.54A9.7,9.7 0 1 1 7.97,5.54Z"/><path fill="#fff" d="M2.2,-6.1L5.3,-1.6H4.2L6.9,2.4H4.4V5.3H2.3V2.4H-1L1.6,-1.6H0.5Z"/><path fill="#fff" stroke="#08643f" stroke-width="1.1" stroke-linejoin="round" paint-order="stroke" d="M-1.7,-6.1L1.4,-1.6H0.3L3,2.4H-0.6V5.3H-2.7V2.4H-6.3L-3.6,-1.6H-4.7Z"/></g>
<g transform="translate(326.1,230.5)"><path fill="#005f7e" d="M0,17.1L-7.97,5.54A9.7,9.7 0 1 1 7.97,5.54Z"/><g transform="translate(-6.32,-5.60) scale(0.575)"><path fill="#fff" fill-rule="evenodd" d="M1,0H19.6Q20.7,0 20.7,1V3.7H19.2L22,7.6V12.7H0V1Q0,0 1,0ZM1.8,4.9V8H8.1V4.9Z M10,4.9V11.2H13.1V4.9Z M16,4.9V8H20.6L18.6,4.9Z"/><path fill="#fff" d="M3.00,13.00a2.9,2.9 0 1,0 5.8,0a2.9,2.9 0 1,0 -5.8,0zM13.90,13.00a2.9,2.9 0 1,0 5.8,0a2.9,2.9 0 1,0 -5.8,0z"/><path fill="#005f7e" d="M4.40,13.00a1.5,1.5 0 1,0 3.0,0a1.5,1.5 0 1,0 -3.0,0zM15.30,13.00a1.5,1.5 0 1,0 3.0,0a1.5,1.5 0 1,0 -3.0,0z"/></g></g>
<g transform="translate(186.5,227.5)"><path fill="#08643f" d="M0,17.1L-7.97,5.54A9.7,9.7 0 1 1 7.97,5.54Z"/><path fill="#fff" d="M2.2,-6.1L5.3,-1.6H4.2L6.9,2.4H4.4V5.3H2.3V2.4H-1L1.6,-1.6H0.5Z"/><path fill="#fff" stroke="#08643f" stroke-width="1.1" stroke-linejoin="round" paint-order="stroke" d="M-1.7,-6.1L1.4,-1.6H0.3L3,2.4H-0.6V5.3H-2.7V2.4H-6.3L-3.6,-1.6H-4.7Z"/></g>
<g transform="translate(64.5,226.5)"><path fill="#005f7e" d="M0,17.1L-7.97,5.54A9.7,9.7 0 1 1 7.97,5.54Z"/><g transform="translate(-6.32,-5.60) scale(0.575)"><path fill="#fff" fill-rule="evenodd" d="M1,0H19.6Q20.7,0 20.7,1V3.7H19.2L22,7.6V12.7H0V1Q0,0 1,0ZM1.8,4.9V8H8.1V4.9Z M10,4.9V11.2H13.1V4.9Z M16,4.9V8H20.6L18.6,4.9Z"/><path fill="#fff" d="M3.00,13.00a2.9,2.9 0 1,0 5.8,0a2.9,2.9 0 1,0 -5.8,0zM13.90,13.00a2.9,2.9 0 1,0 5.8,0a2.9,2.9 0 1,0 -5.8,0z"/><path fill="#005f7e" d="M4.40,13.00a1.5,1.5 0 1,0 3.0,0a1.5,1.5 0 1,0 -3.0,0zM15.30,13.00a1.5,1.5 0 1,0 3.0,0a1.5,1.5 0 1,0 -3.0,0z"/></g></g>
<g transform="translate(281.5,223.5)"><path fill="#005f7e" d="M0,17.1L-7.97,5.54A9.7,9.7 0 1 1 7.97,5.54Z"/><g transform="translate(-6.32,-5.60) scale(0.575)"><path fill="#fff" fill-rule="evenodd" d="M1,0H19.6Q20.7,0 20.7,1V3.7H19.2L22,7.6V12.7H0V1Q0,0 1,0ZM1.8,4.9V8H8.1V4.9Z M10,4.9V11.2H13.1V4.9Z M16,4.9V8H20.6L18.6,4.9Z"/><path fill="#fff" d="M3.00,13.00a2.9,2.9 0 1,0 5.8,0a2.9,2.9 0 1,0 -5.8,0zM13.90,13.00a2.9,2.9 0 1,0 5.8,0a2.9,2.9 0 1,0 -5.8,0z"/><path fill="#005f7e" d="M4.40,13.00a1.5,1.5 0 1,0 3.0,0a1.5,1.5 0 1,0 -3.0,0zM15.30,13.00a1.5,1.5 0 1,0 3.0,0a1.5,1.5 0 1,0 -3.0,0z"/></g></g>
<g transform="translate(164.5,216.5)"><path fill="#08643f" d="M0,17.1L-7.97,5.54A9.7,9.7 0 1 1 7.97,5.54Z"/><path fill="#fff" d="M2.2,-6.1L5.3,-1.6H4.2L6.9,2.4H4.4V5.3H2.3V2.4H-1L1.6,-1.6H0.5Z"/><path fill="#fff" stroke="#08643f" stroke-width="1.1" stroke-linejoin="round" paint-order="stroke" d="M-1.7,-6.1L1.4,-1.6H0.3L3,2.4H-0.6V5.3H-2.7V2.4H-6.3L-3.6,-1.6H-4.7Z"/></g>
<g transform="translate(233.5,214.1)"><path fill="#005f7e" d="M0,17.1L-7.97,5.54A9.7,9.7 0 1 1 7.97,5.54Z"/><g transform="translate(-6.32,-5.60) scale(0.575)"><path fill="#fff" fill-rule="evenodd" d="M1,0H19.6Q20.7,0 20.7,1V3.7H19.2L22,7.6V12.7H0V1Q0,0 1,0ZM1.8,4.9V8H8.1V4.9Z M10,4.9V11.2H13.1V4.9Z M16,4.9V8H20.6L18.6,4.9Z"/><path fill="#fff" d="M3.00,13.00a2.9,2.9 0 1,0 5.8,0a2.9,2.9 0 1,0 -5.8,0zM13.90,13.00a2.9,2.9 0 1,0 5.8,0a2.9,2.9 0 1,0 -5.8,0z"/><path fill="#005f7e" d="M4.40,13.00a1.5,1.5 0 1,0 3.0,0a1.5,1.5 0 1,0 -3.0,0zM15.30,13.00a1.5,1.5 0 1,0 3.0,0a1.5,1.5 0 1,0 -3.0,0z"/></g></g>
<g transform="translate(722.1,211.5)"><path fill="#fdd835" d="M0,17.1L-7.97,5.54A9.7,9.7 0 1 1 7.97,5.54Z"/><path d="M-3.9,-6.7L4.3,2.4M3.3,-6.7L-4.9,2.4" stroke="#ee3524" stroke-width="1.8" fill="none"/><path d="M-2,2.9L-0.5,0.4L1,2.9Z" fill="#111"/><text x="-0.3" y="5.2" font-family="Liberation Sans,sans-serif" font-size="3.4" font-weight="bold" fill="#111" stroke="#111" stroke-width="0.3" text-anchor="middle" textLength="10.5" lengthAdjust="spacingAndGlyphs">KOA</text></g>
<g transform="translate(712.0,208.0)"><path fill="#005f7e" d="M0,17.1L-7.97,5.54A9.7,9.7 0 1 1 7.97,5.54Z"/><g transform="translate(-6.32,-5.60) scale(0.575)"><path fill="#fff" fill-rule="evenodd" d="M1,0H19.6Q20.7,0 20.7,1V3.7H19.2L22,7.6V12.7H0V1Q0,0 1,0ZM1.8,4.9V8H8.1V4.9Z M10,4.9V11.2H13.1V4.9Z M16,4.9V8H20.6L18.6,4.9Z"/><path fill="#fff" d="M3.00,13.00a2.9,2.9 0 1,0 5.8,0a2.9,2.9 0 1,0 -5.8,0zM13.90,13.00a2.9,2.9 0 1,0 5.8,0a2.9,2.9 0 1,0 -5.8,0z"/><path fill="#005f7e" d="M4.40,13.00a1.5,1.5 0 1,0 3.0,0a1.5,1.5 0 1,0 -3.0,0zM15.30,13.00a1.5,1.5 0 1,0 3.0,0a1.5,1.5 0 1,0 -3.0,0z"/></g></g>
<g transform="translate(659.3,207.9)"><path fill="#08644c" d="M0,17.1L-7.97,5.54A9.7,9.7 0 1 1 7.97,5.54Z"/><g transform="translate(-0.8,0.8)"><g transform="scale(0.5)"><path fill="#fff" fill-rule="evenodd" d="M-9.2,8.1V0.3L-7.2,-6.6Q-6.8,-8.1 -5.2,-8.1H5.2Q6.8,-8.1 7.2,-6.6L9.2,0.3V8.1H6V5.7H-6V8.1ZM-6.2,-1.6L-5,-5.8H5L6.2,-1.6Z"/><path fill="#08644c" d="M-6.65,1.60a1.15,1.15 0 1,0 2.3,0a1.15,1.15 0 1,0 -2.3,0zM4.25,1.60a1.15,1.15 0 1,0 2.3,0a1.15,1.15 0 1,0 -2.3,0z"/><circle cx="7" cy="-7.2" r="7.7" fill="#08644c"/><circle cx="7" cy="-7.2" r="5.65" fill="none" stroke="#fff" stroke-width="1.5"/><path d="M7,-10.8V-6.9L9.6,-5.5" stroke="#fff" stroke-width="1.3" fill="none"/></g></g></g>
<g transform="translate(671.3,207.0)"><path fill="#08644c" d="M0,17.1L-7.97,5.54A9.7,9.7 0 1 1 7.97,5.54Z"/><g transform="translate(-0.8,0.8)"><g transform="scale(0.5)"><path fill="#fff" fill-rule="evenodd" d="M-9.2,8.1V0.3L-7.2,-6.6Q-6.8,-8.1 -5.2,-8.1H5.2Q6.8,-8.1 7.2,-6.6L9.2,0.3V8.1H6V5.7H-6V8.1ZM-6.2,-1.6L-5,-5.8H5L6.2,-1.6Z"/><path fill="#08644c" d="M-6.65,1.60a1.15,1.15 0 1,0 2.3,0a1.15,1.15 0 1,0 -2.3,0zM4.25,1.60a1.15,1.15 0 1,0 2.3,0a1.15,1.15 0 1,0 -2.3,0z"/><circle cx="7" cy="-7.2" r="7.7" fill="#08644c"/><circle cx="7" cy="-7.2" r="5.65" fill="none" stroke="#fff" stroke-width="1.5"/><path d="M7,-10.8V-6.9L9.6,-5.5" stroke="#fff" stroke-width="1.3" fill="none"/></g></g></g>
<g transform="translate(495.5,206.5)"><path fill="#005f7e" d="M0,17.1L-7.97,5.54A9.7,9.7 0 1 1 7.97,5.54Z"/><path fill="#fff" fill-rule="evenodd" d="M-5,-5.9H3.4V4.3H-5Z M-4.2,-5V-1.3H2.6V-5Z M-2.2,1.8V2.7H0.8V1.8Z"/><path stroke="#fff" stroke-width="0.5" d="M-3,-4.6V-2.6M-1.7,-4.6V-2.6M-0.4,-4.6V-2.6M0.9,-4.6V-2.6"/><path fill="none" stroke="#fff" stroke-width="0.8" d="M3.4,2.2H5.5V-6.3"/></g>
<g transform="translate(523.5,206.5)"><path fill="#fdd835" d="M0,17.1L-7.97,5.54A9.7,9.7 0 1 1 7.97,5.54Z"/><path d="M-3.9,-6.7L4.3,2.4M3.3,-6.7L-4.9,2.4" stroke="#ee3524" stroke-width="1.8" fill="none"/><path d="M-2,2.9L-0.5,0.4L1,2.9Z" fill="#111"/><text x="-0.3" y="5.2" font-family="Liberation Sans,sans-serif" font-size="3.4" font-weight="bold" fill="#111" stroke="#111" stroke-width="0.3" text-anchor="middle" textLength="10.5" lengthAdjust="spacingAndGlyphs">KOA</text></g>
<g transform="translate(643.2,205.5)"><path fill="#005f7e" d="M0,17.1L-7.97,5.54A9.7,9.7 0 1 1 7.97,5.54Z"/><g transform="translate(-6.32,-5.60) scale(0.575)"><path fill="#fff" fill-rule="evenodd" d="M1,0H19.6Q20.7,0 20.7,1V3.7H19.2L22,7.6V12.7H0V1Q0,0 1,0ZM1.8,4.9V8H8.1V4.9Z M10,4.9V11.2H13.1V4.9Z M16,4.9V8H20.6L18.6,4.9Z"/><path fill="#fff" d="M3.00,13.00a2.9,2.9 0 1,0 5.8,0a2.9,2.9 0 1,0 -5.8,0zM13.90,13.00a2.9,2.9 0 1,0 5.8,0a2.9,2.9 0 1,0 -5.8,0z"/><path fill="#005f7e" d="M4.40,13.00a1.5,1.5 0 1,0 3.0,0a1.5,1.5 0 1,0 -3.0,0zM15.30,13.00a1.5,1.5 0 1,0 3.0,0a1.5,1.5 0 1,0 -3.0,0z"/></g></g>
<g transform="translate(477.5,200.5)"><path fill="#005f7e" d="M0,17.1L-7.97,5.54A9.7,9.7 0 1 1 7.97,5.54Z"/><g transform="translate(-6.32,-5.60) scale(0.575)"><path fill="#fff" fill-rule="evenodd" d="M1,0H19.6Q20.7,0 20.7,1V3.7H19.2L22,7.6V12.7H0V1Q0,0 1,0ZM1.8,4.9V8H8.1V4.9Z M10,4.9V11.2H13.1V4.9Z M16,4.9V8H20.6L18.6,4.9Z"/><path fill="#fff" d="M3.00,13.00a2.9,2.9 0 1,0 5.8,0a2.9,2.9 0 1,0 -5.8,0zM13.90,13.00a2.9,2.9 0 1,0 5.8,0a2.9,2.9 0 1,0 -5.8,0z"/><path fill="#005f7e" d="M4.40,13.00a1.5,1.5 0 1,0 3.0,0a1.5,1.5 0 1,0 -3.0,0zM15.30,13.00a1.5,1.5 0 1,0 3.0,0a1.5,1.5 0 1,0 -3.0,0z"/></g></g>
<g transform="translate(161.0,200.0)"><path fill="#005f7e" d="M0,17.1L-7.97,5.54A9.7,9.7 0 1 1 7.97,5.54Z"/><g transform="translate(-6.32,-5.60) scale(0.575)"><path fill="#fff" fill-rule="evenodd" d="M1,0H19.6Q20.7,0 20.7,1V3.7H19.2L22,7.6V12.7H0V1Q0,0 1,0ZM1.8,4.9V8H8.1V4.9Z M10,4.9V11.2H13.1V4.9Z M16,4.9V8H20.6L18.6,4.9Z"/><path fill="#fff" d="M3.00,13.00a2.9,2.9 0 1,0 5.8,0a2.9,2.9 0 1,0 -5.8,0zM13.90,13.00a2.9,2.9 0 1,0 5.8,0a2.9,2.9 0 1,0 -5.8,0z"/><path fill="#005f7e" d="M4.40,13.00a1.5,1.5 0 1,0 3.0,0a1.5,1.5 0 1,0 -3.0,0zM15.30,13.00a1.5,1.5 0 1,0 3.0,0a1.5,1.5 0 1,0 -3.0,0z"/></g></g>
<g transform="translate(5.7,195.5)"><path fill="#c8102e" d="M0,17.1L-7.97,5.54A9.7,9.7 0 1 1 7.97,5.54Z"/><text x="0" y="5.2" font-family="Liberation Sans,sans-serif" font-size="12.6" font-weight="bold" fill="#fff" text-anchor="middle" textLength="12" lengthAdjust="spacingAndGlyphs">GS</text><ellipse cx="-2.9" cy="-5.3" rx="4.2" ry="1.6" transform="rotate(-12 -2.9 -5.3)" stroke="#ffc61a" stroke-width="0.8" fill="none"/></g>
<g transform="translate(596.5,193.5)"><path fill="#c8102e" d="M0,17.1L-7.97,5.54A9.7,9.7 0 1 1 7.97,5.54Z"/><text x="0" y="5.2" font-family="Liberation Sans,sans-serif" font-size="12.6" font-weight="bold" fill="#fff" text-anchor="middle" textLength="12" lengthAdjust="spacingAndGlyphs">GS</text><ellipse cx="-2.9" cy="-5.3" rx="4.2" ry="1.6" transform="rotate(-12 -2.9 -5.3)" stroke="#ffc61a" stroke-width="0.8" fill="none"/></g>
<g transform="translate(592.5,193.0)"><path fill="#005f7e" d="M0,17.1L-7.97,5.54A9.7,9.7 0 1 1 7.97,5.54Z"/><g transform="translate(-6.32,-5.60) scale(0.575)"><path fill="#fff" fill-rule="evenodd" d="M1,0H19.6Q20.7,0 20.7,1V3.7H19.2L22,7.6V12.7H0V1Q0,0 1,0ZM1.8,4.9V8H8.1V4.9Z M10,4.9V11.2H13.1V4.9Z M16,4.9V8H20.6L18.6,4.9Z"/><path fill="#fff" d="M3.00,13.00a2.9,2.9 0 1,0 5.8,0a2.9,2.9 0 1,0 -5.8,0zM13.90,13.00a2.9,2.9 0 1,0 5.8,0a2.9,2.9 0 1,0 -5.8,0z"/><path fill="#005f7e" d="M4.40,13.00a1.5,1.5 0 1,0 3.0,0a1.5,1.5 0 1,0 -3.0,0zM15.30,13.00a1.5,1.5 0 1,0 3.0,0a1.5,1.5 0 1,0 -3.0,0z"/></g></g>
<g transform="translate(756.0,191.5)"><path fill="#005f7e" d="M0,17.1L-7.97,5.54A9.7,9.7 0 1 1 7.97,5.54Z"/><g transform="translate(-6.32,-5.60) scale(0.575)"><path fill="#fff" fill-rule="evenodd" d="M1,0H19.6Q20.7,0 20.7,1V3.7H19.2L22,7.6V12.7H0V1Q0,0 1,0ZM1.8,4.9V8H8.1V4.9Z M10,4.9V11.2H13.1V4.9Z M16,4.9V8H20.6L18.6,4.9Z"/><path fill="#fff" d="M3.00,13.00a2.9,2.9 0 1,0 5.8,0a2.9,2.9 0 1,0 -5.8,0zM13.90,13.00a2.9,2.9 0 1,0 5.8,0a2.9,2.9 0 1,0 -5.8,0z"/><path fill="#005f7e" d="M4.40,13.00a1.5,1.5 0 1,0 3.0,0a1.5,1.5 0 1,0 -3.0,0zM15.30,13.00a1.5,1.5 0 1,0 3.0,0a1.5,1.5 0 1,0 -3.0,0z"/></g></g>
<g transform="translate(849.1,191.5)"><path fill="#005f7e" d="M0,17.1L-7.97,5.54A9.7,9.7 0 1 1 7.97,5.54Z"/><g transform="translate(-6.32,-5.60) scale(0.575)"><path fill="#fff" fill-rule="evenodd" d="M1,0H19.6Q20.7,0 20.7,1V3.7H19.2L22,7.6V12.7H0V1Q0,0 1,0ZM1.8,4.9V8H8.1V4.9Z M10,4.9V11.2H13.1V4.9Z M16,4.9V8H20.6L18.6,4.9Z"/><path fill="#fff" d="M3.00,13.00a2.9,2.9 0 1,0 5.8,0a2.9,2.9 0 1,0 -5.8,0zM13.90,13.00a2.9,2.9 0 1,0 5.8,0a2.9,2.9 0 1,0 -5.8,0z"/><path fill="#005f7e" d="M4.40,13.00a1.5,1.5 0 1,0 3.0,0a1.5,1.5 0 1,0 -3.0,0zM15.30,13.00a1.5,1.5 0 1,0 3.0,0a1.5,1.5 0 1,0 -3.0,0z"/></g></g>
<g transform="translate(667.5,191.5)"><path fill="#1c62ae" d="M0,17.1L-7.97,5.54A9.7,9.7 0 1 1 7.97,5.54Z"/><text x="-2.9" y="0.6" font-family="Liberation Sans,sans-serif" font-size="10.5" fill="#fff" stroke="#fff" stroke-width="0.4" text-anchor="middle">P</text><text x="2.6" y="5.6" font-family="Liberation Sans,sans-serif" font-size="10.5" fill="#fff" stroke="#fff" stroke-width="0.4" text-anchor="middle">A</text></g>
<g transform="translate(714.5,186.7)"><path fill="#c8102e" d="M0,17.1L-7.97,5.54A9.7,9.7 0 1 1 7.97,5.54Z"/><text x="0" y="5.2" font-family="Liberation Sans,sans-serif" font-size="12.6" font-weight="bold" fill="#fff" text-anchor="middle" textLength="12" lengthAdjust="spacingAndGlyphs">GS</text><ellipse cx="-2.9" cy="-5.3" rx="4.2" ry="1.6" transform="rotate(-12 -2.9 -5.3)" stroke="#ffc61a" stroke-width="0.8" fill="none"/></g>
<g transform="translate(594.5,186.5)"><path fill="#005f7e" d="M0,17.1L-7.97,5.54A9.7,9.7 0 1 1 7.97,5.54Z"/><g transform="translate(-6.32,-5.60) scale(0.575)"><path fill="#fff" fill-rule="evenodd" d="M1,0H19.6Q20.7,0 20.7,1V3.7H19.2L22,7.6V12.7H0V1Q0,0 1,0ZM1.8,4.9V8H8.1V4.9Z M10,4.9V11.2H13.1V4.9Z M16,4.9V8H20.6L18.6,4.9Z"/><path fill="#fff" d="M3.00,13.00a2.9,2.9 0 1,0 5.8,0a2.9,2.9 0 1,0 -5.8,0zM13.90,13.00a2.9,2.9 0 1,0 5.8,0a2.9,2.9 0 1,0 -5.8,0z"/><path fill="#005f7e" d="M4.40,13.00a1.5,1.5 0 1,0 3.0,0a1.5,1.5 0 1,0 -3.0,0zM15.30,13.00a1.5,1.5 0 1,0 3.0,0a1.5,1.5 0 1,0 -3.0,0z"/></g></g>
<g transform="translate(682.0,185.5)"><path fill="#c8102e" d="M0,17.1L-7.97,5.54A9.7,9.7 0 1 1 7.97,5.54Z"/><text x="0" y="5.2" font-family="Liberation Sans,sans-serif" font-size="12.6" font-weight="bold" fill="#fff" text-anchor="middle" textLength="12" lengthAdjust="spacingAndGlyphs">GS</text><ellipse cx="-2.9" cy="-5.3" rx="4.2" ry="1.6" transform="rotate(-12 -2.9 -5.3)" stroke="#ffc61a" stroke-width="0.8" fill="none"/></g>
<g transform="translate(673.5,182.5)"><path fill="#1c62ae" d="M0,17.1L-7.97,5.54A9.7,9.7 0 1 1 7.97,5.54Z"/><text x="-2.9" y="0.6" font-family="Liberation Sans,sans-serif" font-size="10.5" fill="#fff" stroke="#fff" stroke-width="0.4" text-anchor="middle">P</text><text x="2.6" y="5.6" font-family="Liberation Sans,sans-serif" font-size="10.5" fill="#fff" stroke="#fff" stroke-width="0.4" text-anchor="middle">A</text></g>
<g transform="translate(568.0,179.5)"><path fill="#1c62ae" d="M0,17.1L-7.97,5.54A9.7,9.7 0 1 1 7.97,5.54Z"/><text x="-2.9" y="0.6" font-family="Liberation Sans,sans-serif" font-size="10.5" fill="#fff" stroke="#fff" stroke-width="0.4" text-anchor="middle">P</text><text x="2.6" y="5.6" font-family="Liberation Sans,sans-serif" font-size="10.5" fill="#fff" stroke="#fff" stroke-width="0.4" text-anchor="middle">A</text></g>
<g transform="translate(621.5,173.5)"><path fill="#005f7e" d="M0,17.1L-7.97,5.54A9.7,9.7 0 1 1 7.97,5.54Z"/><g transform="translate(-6.32,-5.60) scale(0.575)"><path fill="#fff" fill-rule="evenodd" d="M1,0H19.6Q20.7,0 20.7,1V3.7H19.2L22,7.6V12.7H0V1Q0,0 1,0ZM1.8,4.9V8H8.1V4.9Z M10,4.9V11.2H13.1V4.9Z M16,4.9V8H20.6L18.6,4.9Z"/><path fill="#fff" d="M3.00,13.00a2.9,2.9 0 1,0 5.8,0a2.9,2.9 0 1,0 -5.8,0zM13.90,13.00a2.9,2.9 0 1,0 5.8,0a2.9,2.9 0 1,0 -5.8,0z"/><path fill="#005f7e" d="M4.40,13.00a1.5,1.5 0 1,0 3.0,0a1.5,1.5 0 1,0 -3.0,0zM15.30,13.00a1.5,1.5 0 1,0 3.0,0a1.5,1.5 0 1,0 -3.0,0z"/></g></g>
<g transform="translate(583.5,170.5)"><path fill="#005f7e" d="M0,17.1L-7.97,5.54A9.7,9.7 0 1 1 7.97,5.54Z"/><g transform="translate(-6.32,-5.60) scale(0.575)"><path fill="#fff" fill-rule="evenodd" d="M1,0H19.6Q20.7,0 20.7,1V3.7H19.2L22,7.6V12.7H0V1Q0,0 1,0ZM1.8,4.9V8H8.1V4.9Z M10,4.9V11.2H13.1V4.9Z M16,4.9V8H20.6L18.6,4.9Z"/><path fill="#fff" d="M3.00,13.00a2.9,2.9 0 1,0 5.8,0a2.9,2.9 0 1,0 -5.8,0zM13.90,13.00a2.9,2.9 0 1,0 5.8,0a2.9,2.9 0 1,0 -5.8,0z"/><path fill="#005f7e" d="M4.40,13.00a1.5,1.5 0 1,0 3.0,0a1.5,1.5 0 1,0 -3.0,0zM15.30,13.00a1.5,1.5 0 1,0 3.0,0a1.5,1.5 0 1,0 -3.0,0z"/></g></g>
<g transform="translate(700.5,166.5)"><path fill="#005f7e" d="M0,17.1L-7.97,5.54A9.7,9.7 0 1 1 7.97,5.54Z"/><g transform="translate(-6.32,-5.60) scale(0.575)"><path fill="#fff" fill-rule="evenodd" d="M1,0H19.6Q20.7,0 20.7,1V3.7H19.2L22,7.6V12.7H0V1Q0,0 1,0ZM1.8,4.9V8H8.1V4.9Z M10,4.9V11.2H13.1V4.9Z M16,4.9V8H20.6L18.6,4.9Z"/><path fill="#fff" d="M3.00,13.00a2.9,2.9 0 1,0 5.8,0a2.9,2.9 0 1,0 -5.8,0zM13.90,13.00a2.9,2.9 0 1,0 5.8,0a2.9,2.9 0 1,0 -5.8,0z"/><path fill="#005f7e" d="M4.40,13.00a1.5,1.5 0 1,0 3.0,0a1.5,1.5 0 1,0 -3.0,0zM15.30,13.00a1.5,1.5 0 1,0 3.0,0a1.5,1.5 0 1,0 -3.0,0z"/></g></g>
<g transform="translate(101.5,164.5)"><path fill="#005f7e" d="M0,17.1L-7.97,5.54A9.7,9.7 0 1 1 7.97,5.54Z"/><g transform="translate(-6.32,-5.60) scale(0.575)"><path fill="#fff" fill-rule="evenodd" d="M1,0H19.6Q20.7,0 20.7,1V3.7H19.2L22,7.6V12.7H0V1Q0,0 1,0ZM1.8,4.9V8H8.1V4.9Z M10,4.9V11.2H13.1V4.9Z M16,4.9V8H20.6L18.6,4.9Z"/><path fill="#fff" d="M3.00,13.00a2.9,2.9 0 1,0 5.8,0a2.9,2.9 0 1,0 -5.8,0zM13.90,13.00a2.9,2.9 0 1,0 5.8,0a2.9,2.9 0 1,0 -5.8,0z"/><path fill="#005f7e" d="M4.40,13.00a1.5,1.5 0 1,0 3.0,0a1.5,1.5 0 1,0 -3.0,0zM15.30,13.00a1.5,1.5 0 1,0 3.0,0a1.5,1.5 0 1,0 -3.0,0z"/></g></g>
<g transform="translate(262.5,156.5)"><path fill="#08643f" d="M0,17.1L-7.97,5.54A9.7,9.7 0 1 1 7.97,5.54Z"/><path fill="#fff" d="M2.2,-6.1L5.3,-1.6H4.2L6.9,2.4H4.4V5.3H2.3V2.4H-1L1.6,-1.6H0.5Z"/><path fill="#fff" stroke="#08643f" stroke-width="1.1" stroke-linejoin="round" paint-order="stroke" d="M-1.7,-6.1L1.4,-1.6H0.3L3,2.4H-0.6V5.3H-2.7V2.4H-6.3L-3.6,-1.6H-4.7Z"/></g>
<g transform="translate(205.5,156.0)"><path fill="#005f7e" d="M0,17.1L-7.97,5.54A9.7,9.7 0 1 1 7.97,5.54Z"/><g transform="translate(-6.32,-5.60) scale(0.575)"><path fill="#fff" fill-rule="evenodd" d="M1,0H19.6Q20.7,0 20.7,1V3.7H19.2L22,7.6V12.7H0V1Q0,0 1,0ZM1.8,4.9V8H8.1V4.9Z M10,4.9V11.2H13.1V4.9Z M16,4.9V8H20.6L18.6,4.9Z"/><path fill="#fff" d="M3.00,13.00a2.9,2.9 0 1,0 5.8,0a2.9,2.9 0 1,0 -5.8,0zM13.90,13.00a2.9,2.9 0 1,0 5.8,0a2.9,2.9 0 1,0 -5.8,0z"/><path fill="#005f7e" d="M4.40,13.00a1.5,1.5 0 1,0 3.0,0a1.5,1.5 0 1,0 -3.0,0zM15.30,13.00a1.5,1.5 0 1,0 3.0,0a1.5,1.5 0 1,0 -3.0,0z"/></g></g>
<g transform="translate(123.5,153.5)"><path fill="#08643f" d="M0,17.1L-7.97,5.54A9.7,9.7 0 1 1 7.97,5.54Z"/><path fill="#fff" d="M2.2,-6.1L5.3,-1.6H4.2L6.9,2.4H4.4V5.3H2.3V2.4H-1L1.6,-1.6H0.5Z"/><path fill="#fff" stroke="#08643f" stroke-width="1.1" stroke-linejoin="round" paint-order="stroke" d="M-1.7,-6.1L1.4,-1.6H0.3L3,2.4H-0.6V5.3H-2.7V2.4H-6.3L-3.6,-1.6H-4.7Z"/></g>
<g transform="translate(806.5,149.5)"><path fill="#005f7e" d="M0,17.1L-7.97,5.54A9.7,9.7 0 1 1 7.97,5.54Z"/><g transform="translate(-6.32,-5.60) scale(0.575)"><path fill="#fff" fill-rule="evenodd" d="M1,0H19.6Q20.7,0 20.7,1V3.7H19.2L22,7.6V12.7H0V1Q0,0 1,0ZM1.8,4.9V8H8.1V4.9Z M10,4.9V11.2H13.1V4.9Z M16,4.9V8H20.6L18.6,4.9Z"/><path fill="#fff" d="M3.00,13.00a2.9,2.9 0 1,0 5.8,0a2.9,2.9 0 1,0 -5.8,0zM13.90,13.00a2.9,2.9 0 1,0 5.8,0a2.9,2.9 0 1,0 -5.8,0z"/><path fill="#005f7e" d="M4.40,13.00a1.5,1.5 0 1,0 3.0,0a1.5,1.5 0 1,0 -3.0,0zM15.30,13.00a1.5,1.5 0 1,0 3.0,0a1.5,1.5 0 1,0 -3.0,0z"/></g></g>
<g transform="translate(674.5,149.5)"><path fill="#1c62ae" d="M0,17.1L-7.97,5.54A9.7,9.7 0 1 1 7.97,5.54Z"/><text x="-2.9" y="0.6" font-family="Liberation Sans,sans-serif" font-size="10.5" fill="#fff" stroke="#fff" stroke-width="0.4" text-anchor="middle">P</text><text x="2.6" y="5.6" font-family="Liberation Sans,sans-serif" font-size="10.5" fill="#fff" stroke="#fff" stroke-width="0.4" text-anchor="middle">A</text></g>
<g transform="translate(381.5,142.5)"><path fill="#005f7e" d="M0,17.1L-7.97,5.54A9.7,9.7 0 1 1 7.97,5.54Z"/><g transform="translate(-6.32,-5.60) scale(0.575)"><path fill="#fff" fill-rule="evenodd" d="M1,0H19.6Q20.7,0 20.7,1V3.7H19.2L22,7.6V12.7H0V1Q0,0 1,0ZM1.8,4.9V8H8.1V4.9Z M10,4.9V11.2H13.1V4.9Z M16,4.9V8H20.6L18.6,4.9Z"/><path fill="#fff" d="M3.00,13.00a2.9,2.9 0 1,0 5.8,0a2.9,2.9 0 1,0 -5.8,0zM13.90,13.00a2.9,2.9 0 1,0 5.8,0a2.9,2.9 0 1,0 -5.8,0z"/><path fill="#005f7e" d="M4.40,13.00a1.5,1.5 0 1,0 3.0,0a1.5,1.5 0 1,0 -3.0,0zM15.30,13.00a1.5,1.5 0 1,0 3.0,0a1.5,1.5 0 1,0 -3.0,0z"/></g></g>
<g transform="translate(461.5,142.5)"><path fill="#005f7e" d="M0,17.1L-7.97,5.54A9.7,9.7 0 1 1 7.97,5.54Z"/><g transform="translate(-6.32,-5.60) scale(0.575)"><path fill="#fff" fill-rule="evenodd" d="M1,0H19.6Q20.7,0 20.7,1V3.7H19.2L22,7.6V12.7H0V1Q0,0 1,0ZM1.8,4.9V8H8.1V4.9Z M10,4.9V11.2H13.1V4.9Z M16,4.9V8H20.6L18.6,4.9Z"/><path fill="#fff" d="M3.00,13.00a2.9,2.9 0 1,0 5.8,0a2.9,2.9 0 1,0 -5.8,0zM13.90,13.00a2.9,2.9 0 1,0 5.8,0a2.9,2.9 0 1,0 -5.8,0z"/><path fill="#005f7e" d="M4.40,13.00a1.5,1.5 0 1,0 3.0,0a1.5,1.5 0 1,0 -3.0,0zM15.30,13.00a1.5,1.5 0 1,0 3.0,0a1.5,1.5 0 1,0 -3.0,0z"/></g></g>
<g transform="translate(410.0,137.5)"><path fill="#005f7e" d="M0,17.1L-7.97,5.54A9.7,9.7 0 1 1 7.97,5.54Z"/><g transform="translate(-6.32,-5.60) scale(0.575)"><path fill="#fff" fill-rule="evenodd" d="M1,0H19.6Q20.7,0 20.7,1V3.7H19.2L22,7.6V12.7H0V1Q0,0 1,0ZM1.8,4.9V8H8.1V4.9Z M10,4.9V11.2H13.1V4.9Z M16,4.9V8H20.6L18.6,4.9Z"/><path fill="#fff" d="M3.00,13.00a2.9,2.9 0 1,0 5.8,0a2.9,2.9 0 1,0 -5.8,0zM13.90,13.00a2.9,2.9 0 1,0 5.8,0a2.9,2.9 0 1,0 -5.8,0z"/><path fill="#005f7e" d="M4.40,13.00a1.5,1.5 0 1,0 3.0,0a1.5,1.5 0 1,0 -3.0,0zM15.30,13.00a1.5,1.5 0 1,0 3.0,0a1.5,1.5 0 1,0 -3.0,0z"/></g></g>
<g transform="translate(110.0,134.5)"><path fill="#005f7e" d="M0,17.1L-7.97,5.54A9.7,9.7 0 1 1 7.97,5.54Z"/><g transform="translate(-6.32,-5.60) scale(0.575)"><path fill="#fff" fill-rule="evenodd" d="M1,0H19.6Q20.7,0 20.7,1V3.7H19.2L22,7.6V12.7H0V1Q0,0 1,0ZM1.8,4.9V8H8.1V4.9Z M10,4.9V11.2H13.1V4.9Z M16,4.9V8H20.6L18.6,4.9Z"/><path fill="#fff" d="M3.00,13.00a2.9,2.9 0 1,0 5.8,0a2.9,2.9 0 1,0 -5.8,0zM13.90,13.00a2.9,2.9 0 1,0 5.8,0a2.9,2.9 0 1,0 -5.8,0z"/><path fill="#005f7e" d="M4.40,13.00a1.5,1.5 0 1,0 3.0,0a1.5,1.5 0 1,0 -3.0,0zM15.30,13.00a1.5,1.5 0 1,0 3.0,0a1.5,1.5 0 1,0 -3.0,0z"/></g></g>
<g transform="translate(235.5,131.5)"><path fill="#005f7e" d="M0,17.1L-7.97,5.54A9.7,9.7 0 1 1 7.97,5.54Z"/><g transform="translate(-6.32,-5.60) scale(0.575)"><path fill="#fff" fill-rule="evenodd" d="M1,0H19.6Q20.7,0 20.7,1V3.7H19.2L22,7.6V12.7H0V1Q0,0 1,0ZM1.8,4.9V8H8.1V4.9Z M10,4.9V11.2H13.1V4.9Z M16,4.9V8H20.6L18.6,4.9Z"/><path fill="#fff" d="M3.00,13.00a2.9,2.9 0 1,0 5.8,0a2.9,2.9 0 1,0 -5.8,0zM13.90,13.00a2.9,2.9 0 1,0 5.8,0a2.9,2.9 0 1,0 -5.8,0z"/><path fill="#005f7e" d="M4.40,13.00a1.5,1.5 0 1,0 3.0,0a1.5,1.5 0 1,0 -3.0,0zM15.30,13.00a1.5,1.5 0 1,0 3.0,0a1.5,1.5 0 1,0 -3.0,0z"/></g></g>
<g transform="translate(131.5,117.5)"><path fill="#08643f" d="M0,17.1L-7.97,5.54A9.7,9.7 0 1 1 7.97,5.54Z"/><path fill="#fff" d="M2.2,-6.1L5.3,-1.6H4.2L6.9,2.4H4.4V5.3H2.3V2.4H-1L1.6,-1.6H0.5Z"/><path fill="#fff" stroke="#08643f" stroke-width="1.1" stroke-linejoin="round" paint-order="stroke" d="M-1.7,-6.1L1.4,-1.6H0.3L3,2.4H-0.6V5.3H-2.7V2.4H-6.3L-3.6,-1.6H-4.7Z"/></g>
<g transform="translate(117.5,106.5)"><path fill="#005f7e" d="M0,17.1L-7.97,5.54A9.7,9.7 0 1 1 7.97,5.54Z"/><g transform="translate(-6.32,-5.60) scale(0.575)"><path fill="#fff" fill-rule="evenodd" d="M1,0H19.6Q20.7,0 20.7,1V3.7H19.2L22,7.6V12.7H0V1Q0,0 1,0ZM1.8,4.9V8H8.1V4.9Z M10,4.9V11.2H13.1V4.9Z M16,4.9V8H20.6L18.6,4.9Z"/><path fill="#fff" d="M3.00,13.00a2.9,2.9 0 1,0 5.8,0a2.9,2.9 0 1,0 -5.8,0zM13.90,13.00a2.9,2.9 0 1,0 5.8,0a2.9,2.9 0 1,0 -5.8,0z"/><path fill="#005f7e" d="M4.40,13.00a1.5,1.5 0 1,0 3.0,0a1.5,1.5 0 1,0 -3.0,0zM15.30,13.00a1.5,1.5 0 1,0 3.0,0a1.5,1.5 0 1,0 -3.0,0z"/></g></g>
<g transform="translate(133.5,100.5)"><path fill="#005f7e" d="M0,17.1L-7.97,5.54A9.7,9.7 0 1 1 7.97,5.54Z"/><g transform="translate(-6.32,-5.60) scale(0.575)"><path fill="#fff" fill-rule="evenodd" d="M1,0H19.6Q20.7,0 20.7,1V3.7H19.2L22,7.6V12.7H0V1Q0,0 1,0ZM1.8,4.9V8H8.1V4.9Z M10,4.9V11.2H13.1V4.9Z M16,4.9V8H20.6L18.6,4.9Z"/><path fill="#fff" d="M3.00,13.00a2.9,2.9 0 1,0 5.8,0a2.9,2.9 0 1,0 -5.8,0zM13.90,13.00a2.9,2.9 0 1,0 5.8,0a2.9,2.9 0 1,0 -5.8,0z"/><path fill="#005f7e" d="M4.40,13.00a1.5,1.5 0 1,0 3.0,0a1.5,1.5 0 1,0 -3.0,0zM15.30,13.00a1.5,1.5 0 1,0 3.0,0a1.5,1.5 0 1,0 -3.0,0z"/></g></g>
<g transform="translate(731.5,76.5)"><path fill="#005f7e" d="M0,17.1L-7.97,5.54A9.7,9.7 0 1 1 7.97,5.54Z"/><g transform="translate(-6.32,-5.60) scale(0.575)"><path fill="#fff" fill-rule="evenodd" d="M1,0H19.6Q20.7,0 20.7,1V3.7H19.2L22,7.6V12.7H0V1Q0,0 1,0ZM1.8,4.9V8H8.1V4.9Z M10,4.9V11.2H13.1V4.9Z M16,4.9V8H20.6L18.6,4.9Z"/><path fill="#fff" d="M3.00,13.00a2.9,2.9 0 1,0 5.8,0a2.9,2.9 0 1,0 -5.8,0zM13.90,13.00a2.9,2.9 0 1,0 5.8,0a2.9,2.9 0 1,0 -5.8,0z"/><path fill="#005f7e" d="M4.40,13.00a1.5,1.5 0 1,0 3.0,0a1.5,1.5 0 1,0 -3.0,0zM15.30,13.00a1.5,1.5 0 1,0 3.0,0a1.5,1.5 0 1,0 -3.0,0z"/></g></g>
<g transform="translate(318.5,75.5)"><path fill="#005f7e" d="M0,17.1L-7.97,5.54A9.7,9.7 0 1 1 7.97,5.54Z"/><g transform="translate(-6.32,-5.60) scale(0.575)"><path fill="#fff" fill-rule="evenodd" d="M1,0H19.6Q20.7,0 20.7,1V3.7H19.2L22,7.6V12.7H0V1Q0,0 1,0ZM1.8,4.9V8H8.1V4.9Z M10,4.9V11.2H13.1V4.9Z M16,4.9V8H20.6L18.6,4.9Z"/><path fill="#fff" d="M3.00,13.00a2.9,2.9 0 1,0 5.8,0a2.9,2.9 0 1,0 -5.8,0zM13.90,13.00a2.9,2.9 0 1,0 5.8,0a2.9,2.9 0 1,0 -5.8,0z"/><path fill="#005f7e" d="M4.40,13.00a1.5,1.5 0 1,0 3.0,0a1.5,1.5 0 1,0 -3.0,0zM15.30,13.00a1.5,1.5 0 1,0 3.0,0a1.5,1.5 0 1,0 -3.0,0z"/></g></g>
<g transform="translate(154.5,73.5)"><path fill="#08643f" d="M0,17.1L-7.97,5.54A9.7,9.7 0 1 1 7.97,5.54Z"/><path fill="#fff" d="M2.2,-6.1L5.3,-1.6H4.2L6.9,2.4H4.4V5.3H2.3V2.4H-1L1.6,-1.6H0.5Z"/><path fill="#fff" stroke="#08643f" stroke-width="1.1" stroke-linejoin="round" paint-order="stroke" d="M-1.7,-6.1L1.4,-1.6H0.3L3,2.4H-0.6V5.3H-2.7V2.4H-6.3L-3.6,-1.6H-4.7Z"/></g>
<g transform="translate(529.0,65.5)"><path fill="#005f7e" d="M0,17.1L-7.97,5.54A9.7,9.7 0 1 1 7.97,5.54Z"/><g transform="translate(-6.32,-5.60) scale(0.575)"><path fill="#fff" fill-rule="evenodd" d="M1,0H19.6Q20.7,0 20.7,1V3.7H19.2L22,7.6V12.7H0V1Q0,0 1,0ZM1.8,4.9V8H8.1V4.9Z M10,4.9V11.2H13.1V4.9Z M16,4.9V8H20.6L18.6,4.9Z"/><path fill="#fff" d="M3.00,13.00a2.9,2.9 0 1,0 5.8,0a2.9,2.9 0 1,0 -5.8,0zM13.90,13.00a2.9,2.9 0 1,0 5.8,0a2.9,2.9 0 1,0 -5.8,0z"/><path fill="#005f7e" d="M4.40,13.00a1.5,1.5 0 1,0 3.0,0a1.5,1.5 0 1,0 -3.0,0zM15.30,13.00a1.5,1.5 0 1,0 3.0,0a1.5,1.5 0 1,0 -3.0,0z"/></g></g>
<g transform="translate(583.0,52.5)"><path fill="#08643f" d="M0,17.1L-7.97,5.54A9.7,9.7 0 1 1 7.97,5.54Z"/><path fill="#fff" d="M2.2,-6.1L5.3,-1.6H4.2L6.9,2.4H4.4V5.3H2.3V2.4H-1L1.6,-1.6H0.5Z"/><path fill="#fff" stroke="#08643f" stroke-width="1.1" stroke-linejoin="round" paint-order="stroke" d="M-1.7,-6.1L1.4,-1.6H0.3L3,2.4H-0.6V5.3H-2.7V2.4H-6.3L-3.6,-1.6H-4.7Z"/></g>
<g transform="translate(423.5,51.5)"><path fill="#005f7e" d="M0,17.1L-7.97,5.54A9.7,9.7 0 1 1 7.97,5.54Z"/><g transform="translate(-6.32,-5.60) scale(0.575)"><path fill="#fff" fill-rule="evenodd" d="M1,0H19.6Q20.7,0 20.7,1V3.7H19.2L22,7.6V12.7H0V1Q0,0 1,0ZM1.8,4.9V8H8.1V4.9Z M10,4.9V11.2H13.1V4.9Z M16,4.9V8H20.6L18.6,4.9Z"/><path fill="#fff" d="M3.00,13.00a2.9,2.9 0 1,0 5.8,0a2.9,2.9 0 1,0 -5.8,0zM13.90,13.00a2.9,2.9 0 1,0 5.8,0a2.9,2.9 0 1,0 -5.8,0z"/><path fill="#005f7e" d="M4.40,13.00a1.5,1.5 0 1,0 3.0,0a1.5,1.5 0 1,0 -3.0,0zM15.30,13.00a1.5,1.5 0 1,0 3.0,0a1.5,1.5 0 1,0 -3.0,0z"/></g></g>
<g transform="translate(867.5,47.5)"><path fill="#005f7e" d="M0,17.1L-7.97,5.54A9.7,9.7 0 1 1 7.97,5.54Z"/><g transform="translate(-6.32,-5.60) scale(0.575)"><path fill="#fff" fill-rule="evenodd" d="M1,0H19.6Q20.7,0 20.7,1V3.7H19.2L22,7.6V12.7H0V1Q0,0 1,0ZM1.8,4.9V8H8.1V4.9Z M10,4.9V11.2H13.1V4.9Z M16,4.9V8H20.6L18.6,4.9Z"/><path fill="#fff" d="M3.00,13.00a2.9,2.9 0 1,0 5.8,0a2.9,2.9 0 1,0 -5.8,0zM13.90,13.00a2.9,2.9 0 1,0 5.8,0a2.9,2.9 0 1,0 -5.8,0z"/><path fill="#005f7e" d="M4.40,13.00a1.5,1.5 0 1,0 3.0,0a1.5,1.5 0 1,0 -3.0,0zM15.30,13.00a1.5,1.5 0 1,0 3.0,0a1.5,1.5 0 1,0 -3.0,0z"/></g></g>
<g transform="translate(428.5,26.5)"><path fill="#005f7e" d="M0,17.1L-7.97,5.54A9.7,9.7 0 1 1 7.97,5.54Z"/><g transform="translate(-6.32,-5.60) scale(0.575)"><path fill="#fff" fill-rule="evenodd" d="M1,0H19.6Q20.7,0 20.7,1V3.7H19.2L22,7.6V12.7H0V1Q0,0 1,0ZM1.8,4.9V8H8.1V4.9Z M10,4.9V11.2H13.1V4.9Z M16,4.9V8H20.6L18.6,4.9Z"/><path fill="#fff" d="M3.00,13.00a2.9,2.9 0 1,0 5.8,0a2.9,2.9 0 1,0 -5.8,0zM13.90,13.00a2.9,2.9 0 1,0 5.8,0a2.9,2.9 0 1,0 -5.8,0z"/><path fill="#005f7e" d="M4.40,13.00a1.5,1.5 0 1,0 3.0,0a1.5,1.5 0 1,0 -3.0,0zM15.30,13.00a1.5,1.5 0 1,0 3.0,0a1.5,1.5 0 1,0 -3.0,0z"/></g></g>
<g transform="translate(800.5,26.5)"><path fill="#005f7e" d="M0,17.1L-7.97,5.54A9.7,9.7 0 1 1 7.97,5.54Z"/><g transform="translate(-6.32,-5.60) scale(0.575)"><path fill="#fff" fill-rule="evenodd" d="M1,0H19.6Q20.7,0 20.7,1V3.7H19.2L22,7.6V12.7H0V1Q0,0 1,0ZM1.8,4.9V8H8.1V4.9Z M10,4.9V11.2H13.1V4.9Z M16,4.9V8H20.6L18.6,4.9Z"/><path fill="#fff" d="M3.00,13.00a2.9,2.9 0 1,0 5.8,0a2.9,2.9 0 1,0 -5.8,0zM13.90,13.00a2.9,2.9 0 1,0 5.8,0a2.9,2.9 0 1,0 -5.8,0z"/><path fill="#005f7e" d="M4.40,13.00a1.5,1.5 0 1,0 3.0,0a1.5,1.5 0 1,0 -3.0,0zM15.30,13.00a1.5,1.5 0 1,0 3.0,0a1.5,1.5 0 1,0 -3.0,0z"/></g></g>
<g transform="translate(264.5,21.5)"><path fill="#005f7e" d="M0,17.1L-7.97,5.54A9.7,9.7 0 1 1 7.97,5.54Z"/><g transform="translate(-6.32,-5.60) scale(0.575)"><path fill="#fff" fill-rule="evenodd" d="M1,0H19.6Q20.7,0 20.7,1V3.7H19.2L22,7.6V12.7H0V1Q0,0 1,0ZM1.8,4.9V8H8.1V4.9Z M10,4.9V11.2H13.1V4.9Z M16,4.9V8H20.6L18.6,4.9Z"/><path fill="#fff" d="M3.00,13.00a2.9,2.9 0 1,0 5.8,0a2.9,2.9 0 1,0 -5.8,0zM13.90,13.00a2.9,2.9 0 1,0 5.8,0a2.9,2.9 0 1,0 -5.8,0z"/><path fill="#005f7e" d="M4.40,13.00a1.5,1.5 0 1,0 3.0,0a1.5,1.5 0 1,0 -3.0,0zM15.30,13.00a1.5,1.5 0 1,0 3.0,0a1.5,1.5 0 1,0 -3.0,0z"/></g></g>
<g transform="translate(883.5,14.5)"><path fill="#005f7e" d="M0,17.1L-7.97,5.54A9.7,9.7 0 1 1 7.97,5.54Z"/><g transform="translate(-6.32,-5.60) scale(0.575)"><path fill="#fff" fill-rule="evenodd" d="M1,0H19.6Q20.7,0 20.7,1V3.7H19.2L22,7.6V12.7H0V1Q0,0 1,0ZM1.8,4.9V8H8.1V4.9Z M10,4.9V11.2H13.1V4.9Z M16,4.9V8H20.6L18.6,4.9Z"/><path fill="#fff" d="M3.00,13.00a2.9,2.9 0 1,0 5.8,0a2.9,2.9 0 1,0 -5.8,0zM13.90,13.00a2.9,2.9 0 1,0 5.8,0a2.9,2.9 0 1,0 -5.8,0z"/><path fill="#005f7e" d="M4.40,13.00a1.5,1.5 0 1,0 3.0,0a1.5,1.5 0 1,0 -3.0,0zM15.30,13.00a1.5,1.5 0 1,0 3.0,0a1.5,1.5 0 1,0 -3.0,0z"/></g></g>
<g transform="translate(513.5,-5.5)"><path fill="#005f7e" d="M0,17.1L-7.97,5.54A9.7,9.7 0 1 1 7.97,5.54Z"/><g transform="translate(-6.32,-5.60) scale(0.575)"><path fill="#fff" fill-rule="evenodd" d="M1,0H19.6Q20.7,0 20.7,1V3.7H19.2L22,7.6V12.7H0V1Q0,0 1,0ZM1.8,4.9V8H8.1V4.9Z M10,4.9V11.2H13.1V4.9Z M16,4.9V8H20.6L18.6,4.9Z"/><path fill="#fff" d="M3.00,13.00a2.9,2.9 0 1,0 5.8,0a2.9,2.9 0 1,0 -5.8,0zM13.90,13.00a2.9,2.9 0 1,0 5.8,0a2.9,2.9 0 1,0 -5.8,0z"/><path fill="#005f7e" d="M4.40,13.00a1.5,1.5 0 1,0 3.0,0a1.5,1.5 0 1,0 -3.0,0zM15.30,13.00a1.5,1.5 0 1,0 3.0,0a1.5,1.5 0 1,0 -3.0,0z"/></g></g>
<g transform="translate(794.8,317.5)"><path fill="#176fc1" d="M0,17.1L-7.97,5.54A9.7,9.7 0 1 1 7.97,5.54Z"/><path d="M-1.9,-2.2A1.9,1.9 0 0 1 1.9,-2.2Z" fill="#f5c542"/><path d="M-2.25,-3.50L-3.98,-4.50M-1.30,-4.45L-2.30,-6.18M0.00,-4.80L0.00,-6.80M1.30,-4.45L2.30,-6.18M2.25,-3.50L3.98,-4.50" stroke="#f5c542" stroke-width="0.8" fill="none"/><text x="0" y="5.6" font-family="Liberation Serif,serif" font-size="9.5" fill="#fff" text-anchor="middle">E</text></g>
<g transform="translate(65.2,313.5)"><path fill="#1c62ae" d="M0,17.1L-7.97,5.54A9.7,9.7 0 1 1 7.97,5.54Z"/><text x="-2.9" y="0.6" font-family="Liberation Sans,sans-serif" font-size="10.5" fill="#fff" stroke="#fff" stroke-width="0.4" text-anchor="middle">P</text><text x="2.6" y="5.6" font-family="Liberation Sans,sans-serif" font-size="10.5" fill="#fff" stroke="#fff" stroke-width="0.4" text-anchor="middle">A</text></g>
<g transform="translate(182.1,748.5) scale(1.035)"><path fill="#0566c2" d="M0,17.1L-7.97,5.54A9.7,9.7 0 1 1 7.97,5.54Z"/><g transform="scale(1.0)"><circle r="1.6" fill="#ffc220"/><path d="M2.60,0.00L6.40,0.00M0.00,2.60L0.00,6.40M-2.60,0.00L-6.40,0.00M-0.00,-2.60L-0.00,-6.40M2.12,2.12L3.25,3.25M-2.12,2.12L-3.25,3.25M-2.12,-2.12L-3.25,-3.25M2.12,-2.12L3.25,-3.25" stroke="#ffc220" stroke-width="1" stroke-linecap="round" fill="none"/></g></g>
<g transform="translate(241.5,727.5) scale(1.035)"><path fill="#0566c2" d="M0,17.1L-7.97,5.54A9.7,9.7 0 1 1 7.97,5.54Z"/><g transform="scale(1.0)"><circle r="1.6" fill="#ffc220"/><path d="M2.60,0.00L6.40,0.00M0.00,2.60L0.00,6.40M-2.60,0.00L-6.40,0.00M-0.00,-2.60L-0.00,-6.40M2.12,2.12L3.25,3.25M-2.12,2.12L-3.25,3.25M-2.12,-2.12L-3.25,-3.25M2.12,-2.12L3.25,-3.25" stroke="#ffc220" stroke-width="1" stroke-linecap="round" fill="none"/></g></g>
<g transform="translate(90.5,688.1) scale(1.035)"><path fill="#0566c2" d="M0,17.1L-7.97,5.54A9.7,9.7 0 1 1 7.97,5.54Z"/><g transform="scale(1.0)"><circle r="1.6" fill="#ffc220"/><path d="M2.60,0.00L6.40,0.00M0.00,2.60L0.00,6.40M-2.60,0.00L-6.40,0.00M-0.00,-2.60L-0.00,-6.40M2.12,2.12L3.25,3.25M-2.12,2.12L-3.25,3.25M-2.12,-2.12L-3.25,-3.25M2.12,-2.12L3.25,-3.25" stroke="#ffc220" stroke-width="1" stroke-linecap="round" fill="none"/></g></g>
<g transform="translate(224.4,685.5) scale(1.035)"><path fill="#0566c2" d="M0,17.1L-7.97,5.54A9.7,9.7 0 1 1 7.97,5.54Z"/><g transform="scale(1.0)"><circle r="1.6" fill="#ffc220"/><path d="M2.60,0.00L6.40,0.00M0.00,2.60L0.00,6.40M-2.60,0.00L-6.40,0.00M-0.00,-2.60L-0.00,-6.40M2.12,2.12L3.25,3.25M-2.12,2.12L-3.25,3.25M-2.12,-2.12L-3.25,-3.25M2.12,-2.12L3.25,-3.25" stroke="#ffc220" stroke-width="1" stroke-linecap="round" fill="none"/></g></g>
<g transform="translate(195.5,654.0) scale(1.035)"><path fill="#0566c2" d="M0,17.1L-7.97,5.54A9.7,9.7 0 1 1 7.97,5.54Z"/><g transform="scale(1.0)"><circle r="1.6" fill="#ffc220"/><path d="M2.60,0.00L6.40,0.00M0.00,2.60L0.00,6.40M-2.60,0.00L-6.40,0.00M-0.00,-2.60L-0.00,-6.40M2.12,2.12L3.25,3.25M-2.12,2.12L-3.25,3.25M-2.12,-2.12L-3.25,-3.25M2.12,-2.12L3.25,-3.25" stroke="#ffc220" stroke-width="1" stroke-linecap="round" fill="none"/></g></g>
<g transform="translate(264.5,635.0) scale(1.035)"><path fill="#0566c2" d="M0,17.1L-7.97,5.54A9.7,9.7 0 1 1 7.97,5.54Z"/><g transform="scale(1.0)"><circle r="1.6" fill="#ffc220"/><path d="M2.60,0.00L6.40,0.00M0.00,2.60L0.00,6.40M-2.60,0.00L-6.40,0.00M-0.00,-2.60L-0.00,-6.40M2.12,2.12L3.25,3.25M-2.12,2.12L-3.25,3.25M-2.12,-2.12L-3.25,-3.25M2.12,-2.12L3.25,-3.25" stroke="#ffc220" stroke-width="1" stroke-linecap="round" fill="none"/></g></g>
<g transform="translate(310.1,612.2) scale(1.035)"><path fill="#0566c2" d="M0,17.1L-7.97,5.54A9.7,9.7 0 1 1 7.97,5.54Z"/><g transform="scale(1.0)"><circle r="1.6" fill="#ffc220"/><path d="M2.60,0.00L6.40,0.00M0.00,2.60L0.00,6.40M-2.60,0.00L-6.40,0.00M-0.00,-2.60L-0.00,-6.40M2.12,2.12L3.25,3.25M-2.12,2.12L-3.25,3.25M-2.12,-2.12L-3.25,-3.25M2.12,-2.12L3.25,-3.25" stroke="#ffc220" stroke-width="1" stroke-linecap="round" fill="none"/></g></g>
<g transform="translate(344.1,566.0) scale(1.035)"><path fill="#0566c2" d="M0,17.1L-7.97,5.54A9.7,9.7 0 1 1 7.97,5.54Z"/><g transform="scale(1.0)"><circle r="1.6" fill="#ffc220"/><path d="M2.60,0.00L6.40,0.00M0.00,2.60L0.00,6.40M-2.60,0.00L-6.40,0.00M-0.00,-2.60L-0.00,-6.40M2.12,2.12L3.25,3.25M-2.12,2.12L-3.25,3.25M-2.12,-2.12L-3.25,-3.25M2.12,-2.12L3.25,-3.25" stroke="#ffc220" stroke-width="1" stroke-linecap="round" fill="none"/></g></g>
<g transform="translate(370.2,536.1) scale(1.035)"><path fill="#0566c2" d="M0,17.1L-7.97,5.54A9.7,9.7 0 1 1 7.97,5.54Z"/><g transform="scale(1.0)"><circle r="1.6" fill="#ffc220"/><path d="M2.60,0.00L6.40,0.00M0.00,2.60L0.00,6.40M-2.60,0.00L-6.40,0.00M-0.00,-2.60L-0.00,-6.40M2.12,2.12L3.25,3.25M-2.12,2.12L-3.25,3.25M-2.12,-2.12L-3.25,-3.25M2.12,-2.12L3.25,-3.25" stroke="#ffc220" stroke-width="1" stroke-linecap="round" fill="none"/></g></g>
<g transform="translate(30.5,519.9) scale(1.035)"><path fill="#0566c2" d="M0,17.1L-7.97,5.54A9.7,9.7 0 1 1 7.97,5.54Z"/><g transform="scale(1.0)"><circle r="1.6" fill="#ffc220"/><path d="M2.60,0.00L6.40,0.00M0.00,2.60L0.00,6.40M-2.60,0.00L-6.40,0.00M-0.00,-2.60L-0.00,-6.40M2.12,2.12L3.25,3.25M-2.12,2.12L-3.25,3.25M-2.12,-2.12L-3.25,-3.25M2.12,-2.12L3.25,-3.25" stroke="#ffc220" stroke-width="1" stroke-linecap="round" fill="none"/></g></g>
<g transform="translate(322.5,498.5) scale(1.035)"><path fill="#0566c2" d="M0,17.1L-7.97,5.54A9.7,9.7 0 1 1 7.97,5.54Z"/><g transform="scale(1.0)"><circle r="1.6" fill="#ffc220"/><path d="M2.60,0.00L6.40,0.00M0.00,2.60L0.00,6.40M-2.60,0.00L-6.40,0.00M-0.00,-2.60L-0.00,-6.40M2.12,2.12L3.25,3.25M-2.12,2.12L-3.25,3.25M-2.12,-2.12L-3.25,-3.25M2.12,-2.12L3.25,-3.25" stroke="#ffc220" stroke-width="1" stroke-linecap="round" fill="none"/></g></g>
<g transform="translate(442.5,478.5) scale(1.035)"><path fill="#0566c2" d="M0,17.1L-7.97,5.54A9.7,9.7 0 1 1 7.97,5.54Z"/><g transform="scale(1.0)"><circle r="1.6" fill="#ffc220"/><path d="M2.60,0.00L6.40,0.00M0.00,2.60L0.00,6.40M-2.60,0.00L-6.40,0.00M-0.00,-2.60L-0.00,-6.40M2.12,2.12L3.25,3.25M-2.12,2.12L-3.25,3.25M-2.12,-2.12L-3.25,-3.25M2.12,-2.12L3.25,-3.25" stroke="#ffc220" stroke-width="1" stroke-linecap="round" fill="none"/></g></g>
<g transform="translate(615.5,420.5) scale(1.035)"><path fill="#0566c2" d="M0,17.1L-7.97,5.54A9.7,9.7 0 1 1 7.97,5.54Z"/><g transform="scale(1.0)"><circle r="1.6" fill="#ffc220"/><path d="M2.60,0.00L6.40,0.00M0.00,2.60L0.00,6.40M-2.60,0.00L-6.40,0.00M-0.00,-2.60L-0.00,-6.40M2.12,2.12L3.25,3.25M-2.12,2.12L-3.25,3.25M-2.12,-2.12L-3.25,-3.25M2.12,-2.12L3.25,-3.25" stroke="#ffc220" stroke-width="1" stroke-linecap="round" fill="none"/></g></g>
<g transform="translate(370.2,411.1) scale(1.035)"><path fill="#0566c2" d="M0,17.1L-7.97,5.54A9.7,9.7 0 1 1 7.97,5.54Z"/><g transform="scale(1.0)"><circle r="1.6" fill="#ffc220"/><path d="M2.60,0.00L6.40,0.00M0.00,2.60L0.00,6.40M-2.60,0.00L-6.40,0.00M-0.00,-2.60L-0.00,-6.40M2.12,2.12L3.25,3.25M-2.12,2.12L-3.25,3.25M-2.12,-2.12L-3.25,-3.25M2.12,-2.12L3.25,-3.25" stroke="#ffc220" stroke-width="1" stroke-linecap="round" fill="none"/></g></g>
<g transform="translate(306.5,393.0) scale(1.035)"><path fill="#0566c2" d="M0,17.1L-7.97,5.54A9.7,9.7 0 1 1 7.97,5.54Z"/><g transform="scale(1.0)"><circle r="1.6" fill="#ffc220"/><path d="M2.60,0.00L6.40,0.00M0.00,2.60L0.00,6.40M-2.60,0.00L-6.40,0.00M-0.00,-2.60L-0.00,-6.40M2.12,2.12L3.25,3.25M-2.12,2.12L-3.25,3.25M-2.12,-2.12L-3.25,-3.25M2.12,-2.12L3.25,-3.25" stroke="#ffc220" stroke-width="1" stroke-linecap="round" fill="none"/></g></g>
<g transform="translate(17.5,353.5) scale(1.035)"><path fill="#0566c2" d="M0,17.1L-7.97,5.54A9.7,9.7 0 1 1 7.97,5.54Z"/><g transform="scale(1.0)"><circle r="1.6" fill="#ffc220"/><path d="M2.60,0.00L6.40,0.00M0.00,2.60L0.00,6.40M-2.60,0.00L-6.40,0.00M-0.00,-2.60L-0.00,-6.40M2.12,2.12L3.25,3.25M-2.12,2.12L-3.25,3.25M-2.12,-2.12L-3.25,-3.25M2.12,-2.12L3.25,-3.25" stroke="#ffc220" stroke-width="1" stroke-linecap="round" fill="none"/></g></g>
<g transform="translate(469.0,341.5) scale(1.035)"><path fill="#0566c2" d="M0,17.1L-7.97,5.54A9.7,9.7 0 1 1 7.97,5.54Z"/><g transform="scale(1.0)"><circle r="1.6" fill="#ffc220"/><path d="M2.60,0.00L6.40,0.00M0.00,2.60L0.00,6.40M-2.60,0.00L-6.40,0.00M-0.00,-2.60L-0.00,-6.40M2.12,2.12L3.25,3.25M-2.12,2.12L-3.25,3.25M-2.12,-2.12L-3.25,-3.25M2.12,-2.12L3.25,-3.25" stroke="#ffc220" stroke-width="1" stroke-linecap="round" fill="none"/></g></g>
<g transform="translate(154.5,315.0) scale(1.035)"><path fill="#0566c2" d="M0,17.1L-7.97,5.54A9.7,9.7 0 1 1 7.97,5.54Z"/><g transform="scale(1.0)"><circle r="1.6" fill="#ffc220"/><path d="M2.60,0.00L6.40,0.00M0.00,2.60L0.00,6.40M-2.60,0.00L-6.40,0.00M-0.00,-2.60L-0.00,-6.40M2.12,2.12L3.25,3.25M-2.12,2.12L-3.25,3.25M-2.12,-2.12L-3.25,-3.25M2.12,-2.12L3.25,-3.25" stroke="#ffc220" stroke-width="1" stroke-linecap="round" fill="none"/></g></g>
<g transform="translate(781.2,283.3) scale(1.035)"><path fill="#0566c2" d="M0,17.1L-7.97,5.54A9.7,9.7 0 1 1 7.97,5.54Z"/><g transform="scale(1.0)"><circle r="1.6" fill="#ffc220"/><path d="M2.60,0.00L6.40,0.00M0.00,2.60L0.00,6.40M-2.60,0.00L-6.40,0.00M-0.00,-2.60L-0.00,-6.40M2.12,2.12L3.25,3.25M-2.12,2.12L-3.25,3.25M-2.12,-2.12L-3.25,-3.25M2.12,-2.12L3.25,-3.25" stroke="#ffc220" stroke-width="1" stroke-linecap="round" fill="none"/></g></g>
<g transform="translate(306.0,278.5) scale(1.035)"><path fill="#0566c2" d="M0,17.1L-7.97,5.54A9.7,9.7 0 1 1 7.97,5.54Z"/><g transform="scale(1.0)"><circle r="1.6" fill="#ffc220"/><path d="M2.60,0.00L6.40,0.00M0.00,2.60L0.00,6.40M-2.60,0.00L-6.40,0.00M-0.00,-2.60L-0.00,-6.40M2.12,2.12L3.25,3.25M-2.12,2.12L-3.25,3.25M-2.12,-2.12L-3.25,-3.25M2.12,-2.12L3.25,-3.25" stroke="#ffc220" stroke-width="1" stroke-linecap="round" fill="none"/></g></g>
<g transform="translate(501.5,270.2) scale(1.035)"><path fill="#0566c2" d="M0,17.1L-7.97,5.54A9.7,9.7 0 1 1 7.97,5.54Z"/><g transform="scale(1.0)"><circle r="1.6" fill="#ffc220"/><path d="M2.60,0.00L6.40,0.00M0.00,2.60L0.00,6.40M-2.60,0.00L-6.40,0.00M-0.00,-2.60L-0.00,-6.40M2.12,2.12L3.25,3.25M-2.12,2.12L-3.25,3.25M-2.12,-2.12L-3.25,-3.25M2.12,-2.12L3.25,-3.25" stroke="#ffc220" stroke-width="1" stroke-linecap="round" fill="none"/></g></g>
<g transform="translate(386.9,251.5) scale(1.035)"><path fill="#0566c2" d="M0,17.1L-7.97,5.54A9.7,9.7 0 1 1 7.97,5.54Z"/><g transform="scale(1.0)"><circle r="1.6" fill="#ffc220"/><path d="M2.60,0.00L6.40,0.00M0.00,2.60L0.00,6.40M-2.60,0.00L-6.40,0.00M-0.00,-2.60L-0.00,-6.40M2.12,2.12L3.25,3.25M-2.12,2.12L-3.25,3.25M-2.12,-2.12L-3.25,-3.25M2.12,-2.12L3.25,-3.25" stroke="#ffc220" stroke-width="1" stroke-linecap="round" fill="none"/></g></g>
<g transform="translate(483.0,204.2) scale(1.035)"><path fill="#0566c2" d="M0,17.1L-7.97,5.54A9.7,9.7 0 1 1 7.97,5.54Z"/><g transform="scale(1.0)"><circle r="1.6" fill="#ffc220"/><path d="M2.60,0.00L6.40,0.00M0.00,2.60L0.00,6.40M-2.60,0.00L-6.40,0.00M-0.00,-2.60L-0.00,-6.40M2.12,2.12L3.25,3.25M-2.12,2.12L-3.25,3.25M-2.12,-2.12L-3.25,-3.25M2.12,-2.12L3.25,-3.25" stroke="#ffc220" stroke-width="1" stroke-linecap="round" fill="none"/></g></g>
<g transform="translate(706.0,204.2) scale(1.035)"><path fill="#0566c2" d="M0,17.1L-7.97,5.54A9.7,9.7 0 1 1 7.97,5.54Z"/><g transform="scale(1.0)"><circle r="1.6" fill="#ffc220"/><path d="M2.60,0.00L6.40,0.00M0.00,2.60L0.00,6.40M-2.60,0.00L-6.40,0.00M-0.00,-2.60L-0.00,-6.40M2.12,2.12L3.25,3.25M-2.12,2.12L-3.25,3.25M-2.12,-2.12L-3.25,-3.25M2.12,-2.12L3.25,-3.25" stroke="#ffc220" stroke-width="1" stroke-linecap="round" fill="none"/></g></g>
<g transform="translate(704.0,186.0) scale(1.035)"><path fill="#0566c2" d="M0,17.1L-7.97,5.54A9.7,9.7 0 1 1 7.97,5.54Z"/><g transform="scale(1.0)"><circle r="1.6" fill="#ffc220"/><path d="M2.60,0.00L6.40,0.00M0.00,2.60L0.00,6.40M-2.60,0.00L-6.40,0.00M-0.00,-2.60L-0.00,-6.40M2.12,2.12L3.25,3.25M-2.12,2.12L-3.25,3.25M-2.12,-2.12L-3.25,-3.25M2.12,-2.12L3.25,-3.25" stroke="#ffc220" stroke-width="1" stroke-linecap="round" fill="none"/></g></g>
<g transform="translate(579.5,184.5) scale(1.035)"><path fill="#0566c2" d="M0,17.1L-7.97,5.54A9.7,9.7 0 1 1 7.97,5.54Z"/><g transform="scale(1.0)"><circle r="1.6" fill="#ffc220"/><path d="M2.60,0.00L6.40,0.00M0.00,2.60L0.00,6.40M-2.60,0.00L-6.40,0.00M-0.00,-2.60L-0.00,-6.40M2.12,2.12L3.25,3.25M-2.12,2.12L-3.25,3.25M-2.12,-2.12L-3.25,-3.25M2.12,-2.12L3.25,-3.25" stroke="#ffc220" stroke-width="1" stroke-linecap="round" fill="none"/></g></g>
<g transform="translate(752.0,21.5) scale(1.035)"><path fill="#0566c2" d="M0,17.1L-7.97,5.54A9.7,9.7 0 1 1 7.97,5.54Z"/><g transform="scale(1.0)"><circle r="1.6" fill="#ffc220"/><path d="M2.60,0.00L6.40,0.00M0.00,2.60L0.00,6.40M-2.60,0.00L-6.40,0.00M-0.00,-2.60L-0.00,-6.40M2.12,2.12L3.25,3.25M-2.12,2.12L-3.25,3.25M-2.12,-2.12L-3.25,-3.25M2.12,-2.12L3.25,-3.25" stroke="#ffc220" stroke-width="1" stroke-linecap="round" fill="none"/></g></g>
<g transform="translate(288.5,672.0)"><path fill="#ffffff" d="M0,17.1L-7.97,5.54A9.7,9.7 0 1 1 7.97,5.54Z"/><text x="-3.3" y="1.2" font-family="Liberation Serif,serif" font-size="10.5" fill="#111" text-anchor="middle">T</text><text x="0.2" y="3.8" font-family="Liberation Serif,serif" font-size="10.5" fill="#111" text-anchor="middle">B</text><text x="3.6" y="6.3" font-family="Liberation Serif,serif" font-size="10.5" fill="#111" text-anchor="middle">C</text></g>
</svg>
</div>
<div id="chip">
<svg width="24" height="24" viewBox="0 0 24 24" style="position:absolute;left:17px;top:16.8px"><path fill="#3a0a26" d="M1.1,3.2L7,1.3V15.6H7.7V16.8L1.1,18.9Z M7,1.3L13,3.4V4.9L7,2.8Z M13,3.4L18.9,1.1V9.9L13,8.4Z"/><circle cx="14.5" cy="15.3" r="3.3" fill="none" stroke="#3a0a26" stroke-width="1.75"/><path d="M16.9,17.7L20.2,21" stroke="#3a0a26" stroke-width="1.9" stroke-linecap="round"/></svg>
<div class="tx">Filter: Default Search</div>
</div>
<div id="side">
<div class="edge"></div>
<div id="title"><span>Demo: Route Disable</span></div>
<svg width="24" height="24" viewBox="0 0 24 24" style="position:absolute;left:298px;top:14px"><path fill="none" stroke="#b5e6ff" stroke-width="1.8" d="M20.2,9V5.3Q20.2,3.8 18.7,3.8H5.3Q3.8,3.8 3.8,5.3V18.7Q3.8,20.2 5.3,20.2H10.5"/><path stroke="#b5e6ff" stroke-width="1.8" d="M6.8,8H17.2M6.8,12H17.2M6.8,16H12"/><path fill="#b5e6ff" d="M13,19.3V22H15.7L22.2,15.5L19.5,12.8Z"/></svg>
<div id="search"><div class="ph">Search Map</div>
<svg width="24" height="24" viewBox="0 0 24 24" style="position:absolute;left:287.7px;top:15.7px"><path fill="#3a0a26" d="M1.1,3.2L7,1.3V15.6H7.7V16.8L1.1,18.9Z M7,1.3L13,3.4V4.9L7,2.8Z M13,3.4L18.9,1.1V9.9L13,8.4Z"/><circle cx="14.5" cy="15.3" r="3.3" fill="none" stroke="#3a0a26" stroke-width="1.75"/><path d="M16.9,17.7L20.2,21" stroke="#3a0a26" stroke-width="1.9" stroke-linecap="round"/></svg>
</div>
<div id="divider"></div>
<div id="tline"></div>

<div class="card sel" style="top:162.5px">
<svg class="rv" width="23" height="17" viewBox="0 0 23 17"><path fill="#4a0a2e" fill-rule="evenodd" d="M1,0H19.6Q20.7,0 20.7,1V3.7H19.2L22,7.6V12.7H0V1Q0,0 1,0ZM1.8,4.9V8H8.1V4.9Z M10,4.9V11.2H13.1V4.9Z M16,4.9V8H20.6L18.6,4.9Z"/><path fill="#4a0a2e" d="M3.00,13.00a2.9,2.9 0 1,0 5.8,0a2.9,2.9 0 1,0 -5.8,0zM13.90,13.00a2.9,2.9 0 1,0 5.8,0a2.9,2.9 0 1,0 -5.8,0z"/><path fill="#e4e7f1" d="M4.40,13.00a1.5,1.5 0 1,0 3.0,0a1.5,1.5 0 1,0 -3.0,0zM15.30,13.00a1.5,1.5 0 1,0 3.0,0a1.5,1.5 0 1,0 -3.0,0z"/></svg>
<div class="t">Thousand Trails Moody…</div>
<div class="s">Trip Start: Jun 29, 2024</div>
<div class="c">Wells, ME</div>
<svg class="dots" viewBox="0 0 17 6"><circle cx="2.6" cy="3" r="1.9" fill="#4a0a2e"/><circle cx="8.5" cy="3" r="1.9" fill="#4a0a2e"/><circle cx="14.4" cy="3" r="1.9" fill="#4a0a2e"/></svg>
</div>
<div class="lbl" style="top:258.5px">Depart from Thousand Trails Mo…</div>

<svg class="cc" style="left:18px;top:315px" width="40" height="32" viewBox="-20 -16 40 32"><g transform="scale(1.0)"><path fill="#b5e6ff" fill-rule="evenodd" d="M-9.2,8.1V0.3L-7.2,-6.6Q-6.8,-8.1 -5.2,-8.1H5.2Q6.8,-8.1 7.2,-6.6L9.2,0.3V8.1H6V5.7H-6V8.1ZM-6.2,-1.6L-5,-5.8H5L6.2,-1.6Z"/><path fill="#005b78" d="M-6.65,1.60a1.15,1.15 0 1,0 2.3,0a1.15,1.15 0 1,0 -2.3,0zM4.25,1.60a1.15,1.15 0 1,0 2.3,0a1.15,1.15 0 1,0 -2.3,0z"/><circle cx="7" cy="-7.2" r="7.7" fill="#005b78"/><circle cx="7" cy="-7.2" r="5.65" fill="none" stroke="#b5e6ff" stroke-width="1.5"/><path d="M7,-10.8V-6.9L9.6,-5.5" stroke="#b5e6ff" stroke-width="1.3" fill="none"/></g></svg>
<div class="dur" style="top:340.5px">3hr 18m</div>
<div class="dia" style="top:333.4px"></div>
<div class="card" style="top:302.5px">
<svg class="rv" width="23" height="17" viewBox="0 0 23 17"><path fill="#4a0a2e" fill-rule="evenodd" d="M1,0H19.6Q20.7,0 20.7,1V3.7H19.2L22,7.6V12.7H0V1Q0,0 1,0ZM1.8,4.9V8H8.1V4.9Z M10,4.9V11.2H13.1V4.9Z M16,4.9V8H20.6L18.6,4.9Z"/><path fill="#4a0a2e" d="M3.00,13.00a2.9,2.9 0 1,0 5.8,0a2.9,2.9 0 1,0 -5.8,0zM13.90,13.00a2.9,2.9 0 1,0 5.8,0a2.9,2.9 0 1,0 -5.8,0z"/><path fill="#e4e7f1" d="M4.40,13.00a1.5,1.5 0 1,0 3.0,0a1.5,1.5 0 1,0 -3.0,0zM15.30,13.00a1.5,1.5 0 1,0 3.0,0a1.5,1.5 0 1,0 -3.0,0z"/></svg>
<div class="t"><span style="display:inline-block;transform:scaleX(0.92);transform-origin:0 50%">MT DESERT NARROWS</span></div>
<div class="s">Flexible (no nights planned)</div>
<div class="c">Bar Harbor, ME</div>
<svg class="dots" viewBox="0 0 17 6"><circle cx="2.6" cy="3" r="1.9" fill="#4a0a2e"/><circle cx="8.5" cy="3" r="1.9" fill="#4a0a2e"/><circle cx="14.4" cy="3" r="1.9" fill="#4a0a2e"/></svg>
</div>
<div class="lbl" style="top:398.5px">Sat. Jun 29 2024</div>

<svg class="cc" style="left:18px;top:455px" width="40" height="32" viewBox="-20 -16 40 32"><g transform="scale(1.0)"><path fill="#b5e6ff" fill-rule="evenodd" d="M-9.2,8.1V0.3L-7.2,-6.6Q-6.8,-8.1 -5.2,-8.1H5.2Q6.8,-8.1 7.2,-6.6L9.2,0.3V8.1H6V5.7H-6V8.1ZM-6.2,-1.6L-5,-5.8H5L6.2,-1.6Z"/><path fill="#005b78" d="M-6.65,1.60a1.15,1.15 0 1,0 2.3,0a1.15,1.15 0 1,0 -2.3,0zM4.25,1.60a1.15,1.15 0 1,0 2.3,0a1.15,1.15 0 1,0 -2.3,0z"/><circle cx="7" cy="-7.2" r="7.7" fill="#005b78"/><circle cx="7" cy="-7.2" r="5.65" fill="none" stroke="#b5e6ff" stroke-width="1.5"/><path d="M7,-10.8V-6.9L9.6,-5.5" stroke="#b5e6ff" stroke-width="1.3" fill="none"/></g></svg>
<div class="dur" style="top:480.5px">2hr 23m</div>
<div class="dia" style="top:473.4px"></div>
<div class="card" style="top:442.5px">
<svg class="rv" width="23" height="17" viewBox="0 0 23 17"><path fill="#4a0a2e" fill-rule="evenodd" d="M1,0H19.6Q20.7,0 20.7,1V3.7H19.2L22,7.6V12.7H0V1Q0,0 1,0ZM1.8,4.9V8H8.1V4.9Z M10,4.9V11.2H13.1V4.9Z M16,4.9V8H20.6L18.6,4.9Z"/><path fill="#4a0a2e" d="M3.00,13.00a2.9,2.9 0 1,0 5.8,0a2.9,2.9 0 1,0 -5.8,0zM13.90,13.00a2.9,2.9 0 1,0 5.8,0a2.9,2.9 0 1,0 -5.8,0z"/><path fill="#e4e7f1" d="M4.40,13.00a1.5,1.5 0 1,0 3.0,0a1.5,1.5 0 1,0 -3.0,0zM15.30,13.00a1.5,1.5 0 1,0 3.0,0a1.5,1.5 0 1,0 -3.0,0z"/></svg>
<div class="t">Seaview Campground</div>
<div class="s">Flexible (no nights planned)</div>
<div class="c">Eastport, ME</div>
<svg class="dots" viewBox="0 0 17 6"><circle cx="2.6" cy="3" r="1.9" fill="#4a0a2e"/><circle cx="8.5" cy="3" r="1.9" fill="#4a0a2e"/><circle cx="14.4" cy="3" r="1.9" fill="#4a0a2e"/></svg>
</div>
<div class="lbl" style="top:538.5px">Sat. Jun 29 2024</div>
</div>
</body>
</html>
